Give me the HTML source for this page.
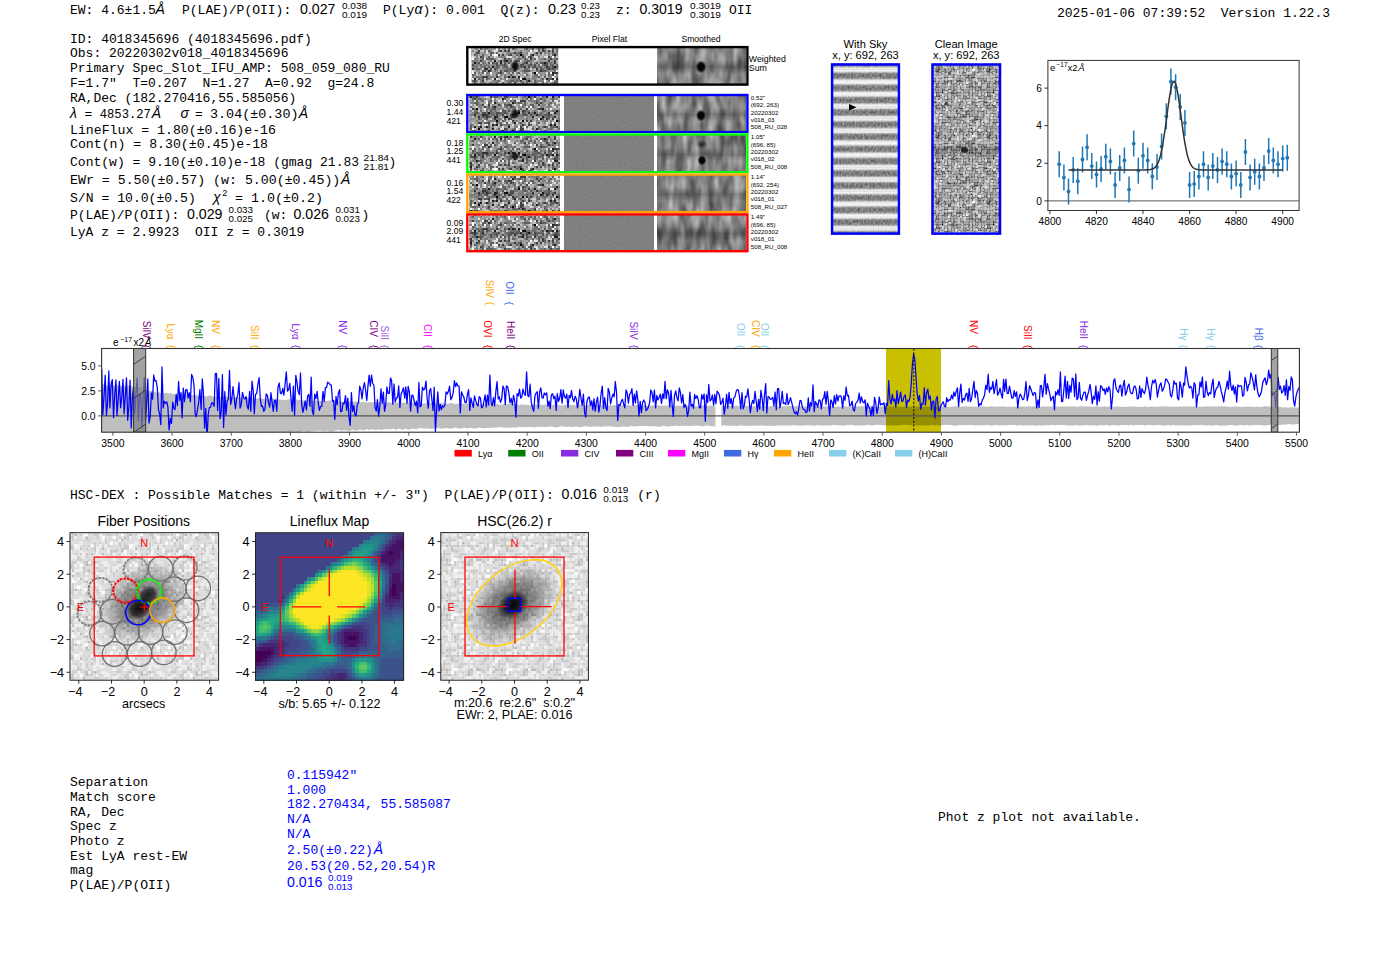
<!DOCTYPE html>
<html><head><meta charset="utf-8"><style>html,body{margin:0;padding:0;background:#fff;width:1400px;height:953px;overflow:hidden}svg{display:block}text{white-space:pre}</style></head>
<body><svg width="1400" height="953" viewBox="0 0 1400 953">
<defs><pattern id="pspec" width="90" height="38" patternUnits="userSpaceOnUse"><path d="M74 2h2v2h-2zM70 16h2v2h-2zM84 34h2v2h-2z" fill="#000000"/><path d="M58 0h2v2h-2zM62 0h2v2h-2zM68 0h2v2h-2zM6 2h2v2h-2zM12 2h2v2h-2zM16 2h2v2h-2zM24 2h2v2h-2zM44 2h2v2h-2zM72 2h2v2h-2zM78 4h2v2h-2zM14 8h2v2h-2zM16 8h2v2h-2zM26 8h2v2h-2zM72 8h2v2h-2zM20 14h2v2h-2zM14 16h2v2h-2zM82 16h2v2h-2zM44 22h2v2h-2zM56 22h2v2h-2zM4 24h2v2h-2zM24 24h2v2h-2zM50 24h2v2h-2zM14 28h2v2h-2zM42 28h2v2h-2zM38 32h2v2h-2zM12 34h2v2h-2z" fill="#202020"/><path d="M32 0h2v2h-2zM34 0h2v2h-2zM36 0h2v2h-2zM46 0h2v2h-2zM64 0h2v2h-2zM24 4h2v2h-2zM32 4h2v2h-2zM70 4h2v2h-2zM14 6h2v2h-2zM64 6h2v2h-2zM72 6h2v2h-2zM84 8h2v2h-2zM2 10h2v2h-2zM18 10h2v2h-2zM20 10h2v2h-2zM2 12h2v2h-2zM8 12h2v2h-2zM12 12h2v2h-2zM20 12h2v2h-2zM28 12h2v2h-2zM50 12h2v2h-2zM54 12h2v2h-2zM58 12h2v2h-2zM0 14h2v2h-2zM26 14h2v2h-2zM64 14h2v2h-2zM70 14h2v2h-2zM86 14h2v2h-2zM20 16h2v2h-2zM48 16h2v2h-2zM52 16h2v2h-2zM60 16h2v2h-2zM8 18h2v2h-2zM30 18h2v2h-2zM72 18h2v2h-2zM80 18h2v2h-2zM10 20h2v2h-2zM54 20h2v2h-2zM80 20h2v2h-2zM8 22h2v2h-2zM14 22h2v2h-2zM20 22h2v2h-2zM30 22h2v2h-2zM50 22h2v2h-2zM54 22h2v2h-2zM66 22h2v2h-2zM14 24h2v2h-2zM76 24h2v2h-2zM6 28h2v2h-2zM74 28h2v2h-2zM8 30h2v2h-2zM22 30h2v2h-2zM34 30h2v2h-2zM36 30h2v2h-2zM86 30h2v2h-2zM0 32h2v2h-2zM14 34h2v2h-2zM16 34h2v2h-2zM50 34h2v2h-2zM12 36h2v2h-2z" fill="#404040"/><path d="M4 0h2v2h-2zM26 0h2v2h-2zM54 0h2v2h-2zM88 0h2v2h-2zM2 2h2v2h-2zM8 2h2v2h-2zM10 2h2v2h-2zM28 2h2v2h-2zM32 2h2v2h-2zM36 2h2v2h-2zM68 2h2v2h-2zM8 4h2v2h-2zM16 4h2v2h-2zM20 4h2v2h-2zM22 4h2v2h-2zM48 4h2v2h-2zM60 4h2v2h-2zM62 4h2v2h-2zM66 4h2v2h-2zM76 4h2v2h-2zM84 4h2v2h-2zM2 6h2v2h-2zM16 6h2v2h-2zM24 6h2v2h-2zM40 6h2v2h-2zM46 6h2v2h-2zM52 6h2v2h-2zM58 6h2v2h-2zM76 6h2v2h-2zM84 6h2v2h-2zM0 8h2v2h-2zM28 8h2v2h-2zM30 8h2v2h-2zM40 8h2v2h-2zM50 8h2v2h-2zM54 8h2v2h-2zM58 8h2v2h-2zM68 8h2v2h-2zM70 8h2v2h-2zM76 8h2v2h-2zM12 10h2v2h-2zM30 10h2v2h-2zM58 10h2v2h-2zM62 10h2v2h-2zM76 10h2v2h-2zM82 10h2v2h-2zM88 10h2v2h-2zM4 12h2v2h-2zM16 12h2v2h-2zM38 12h2v2h-2zM48 12h2v2h-2zM88 12h2v2h-2zM12 14h2v2h-2zM28 14h2v2h-2zM40 14h2v2h-2zM42 14h2v2h-2zM46 14h2v2h-2zM68 14h2v2h-2zM12 16h2v2h-2zM24 16h2v2h-2zM32 16h2v2h-2zM40 16h2v2h-2zM58 16h2v2h-2zM66 16h2v2h-2zM72 16h2v2h-2zM80 16h2v2h-2zM32 18h2v2h-2zM38 18h2v2h-2zM78 18h2v2h-2zM4 20h2v2h-2zM16 20h2v2h-2zM18 20h2v2h-2zM32 20h2v2h-2zM36 20h2v2h-2zM38 20h2v2h-2zM40 20h2v2h-2zM42 20h2v2h-2zM58 20h2v2h-2zM68 20h2v2h-2zM74 20h2v2h-2zM84 20h2v2h-2zM60 22h2v2h-2zM64 22h2v2h-2zM68 22h2v2h-2zM76 22h2v2h-2zM78 22h2v2h-2zM0 24h2v2h-2zM2 24h2v2h-2zM6 24h2v2h-2zM28 24h2v2h-2zM38 24h2v2h-2zM42 24h2v2h-2zM46 24h2v2h-2zM54 24h2v2h-2zM58 24h2v2h-2zM74 24h2v2h-2zM86 24h2v2h-2zM4 26h2v2h-2zM6 26h2v2h-2zM22 26h2v2h-2zM46 26h2v2h-2zM54 26h2v2h-2zM70 26h2v2h-2zM72 26h2v2h-2zM80 26h2v2h-2zM84 26h2v2h-2zM12 28h2v2h-2zM64 28h2v2h-2zM78 28h2v2h-2zM84 28h2v2h-2zM0 30h2v2h-2zM12 30h2v2h-2zM40 30h2v2h-2zM44 30h2v2h-2zM2 32h2v2h-2zM4 32h2v2h-2zM32 32h2v2h-2zM34 32h2v2h-2zM40 32h2v2h-2zM50 32h2v2h-2zM54 32h2v2h-2zM56 32h2v2h-2zM64 32h2v2h-2zM74 32h2v2h-2zM76 32h2v2h-2zM78 32h2v2h-2zM8 34h2v2h-2zM18 34h2v2h-2zM24 34h2v2h-2zM32 34h2v2h-2zM48 34h2v2h-2zM62 34h2v2h-2zM68 34h2v2h-2zM82 34h2v2h-2zM8 36h2v2h-2zM22 36h2v2h-2zM46 36h2v2h-2zM60 36h2v2h-2zM76 36h2v2h-2zM84 36h2v2h-2zM86 36h2v2h-2z" fill="#606060"/><path d="M8 0h2v2h-2zM10 0h2v2h-2zM16 0h2v2h-2zM22 0h2v2h-2zM28 0h2v2h-2zM30 0h2v2h-2zM38 0h2v2h-2zM40 0h2v2h-2zM42 0h2v2h-2zM48 0h2v2h-2zM56 0h2v2h-2zM60 0h2v2h-2zM74 0h2v2h-2zM82 0h2v2h-2zM84 0h2v2h-2zM86 0h2v2h-2zM0 2h2v2h-2zM18 2h2v2h-2zM20 2h2v2h-2zM30 2h2v2h-2zM38 2h2v2h-2zM50 2h2v2h-2zM54 2h2v2h-2zM60 2h2v2h-2zM62 2h2v2h-2zM64 2h2v2h-2zM66 2h2v2h-2zM76 2h2v2h-2zM78 2h2v2h-2zM82 2h2v2h-2zM84 2h2v2h-2zM0 4h2v2h-2zM2 4h2v2h-2zM14 4h2v2h-2zM26 4h2v2h-2zM30 4h2v2h-2zM42 4h2v2h-2zM44 4h2v2h-2zM46 4h2v2h-2zM56 4h2v2h-2zM58 4h2v2h-2zM64 4h2v2h-2zM68 4h2v2h-2zM80 4h2v2h-2zM86 4h2v2h-2zM88 4h2v2h-2zM6 6h2v2h-2zM12 6h2v2h-2zM18 6h2v2h-2zM30 6h2v2h-2zM32 6h2v2h-2zM34 6h2v2h-2zM44 6h2v2h-2zM60 6h2v2h-2zM86 6h2v2h-2zM6 8h2v2h-2zM22 8h2v2h-2zM24 8h2v2h-2zM32 8h2v2h-2zM42 8h2v2h-2zM46 8h2v2h-2zM78 8h2v2h-2zM80 8h2v2h-2zM88 8h2v2h-2zM4 10h2v2h-2zM16 10h2v2h-2zM26 10h2v2h-2zM34 10h2v2h-2zM36 10h2v2h-2zM48 10h2v2h-2zM54 10h2v2h-2zM64 10h2v2h-2zM74 10h2v2h-2zM22 12h2v2h-2zM34 12h2v2h-2zM40 12h2v2h-2zM56 12h2v2h-2zM70 12h2v2h-2zM78 12h2v2h-2zM4 14h2v2h-2zM8 14h2v2h-2zM14 14h2v2h-2zM16 14h2v2h-2zM18 14h2v2h-2zM34 14h2v2h-2zM56 14h2v2h-2zM58 14h2v2h-2zM60 14h2v2h-2zM62 14h2v2h-2zM66 14h2v2h-2zM76 14h2v2h-2zM84 14h2v2h-2zM8 16h2v2h-2zM16 16h2v2h-2zM26 16h2v2h-2zM68 16h2v2h-2zM86 16h2v2h-2zM10 18h2v2h-2zM14 18h2v2h-2zM18 18h2v2h-2zM20 18h2v2h-2zM26 18h2v2h-2zM48 18h2v2h-2zM50 18h2v2h-2zM52 18h2v2h-2zM54 18h2v2h-2zM64 18h2v2h-2zM68 18h2v2h-2zM74 18h2v2h-2zM82 18h2v2h-2zM88 18h2v2h-2zM0 20h2v2h-2zM2 20h2v2h-2zM8 20h2v2h-2zM12 20h2v2h-2zM14 20h2v2h-2zM24 20h2v2h-2zM26 20h2v2h-2zM30 20h2v2h-2zM44 20h2v2h-2zM56 20h2v2h-2zM60 20h2v2h-2zM66 20h2v2h-2zM70 20h2v2h-2zM76 20h2v2h-2zM82 20h2v2h-2zM22 22h2v2h-2zM24 22h2v2h-2zM26 22h2v2h-2zM32 22h2v2h-2zM40 22h2v2h-2zM48 22h2v2h-2zM52 22h2v2h-2zM58 22h2v2h-2zM74 22h2v2h-2zM80 22h2v2h-2zM10 24h2v2h-2zM26 24h2v2h-2zM32 24h2v2h-2zM34 24h2v2h-2zM44 24h2v2h-2zM72 24h2v2h-2zM80 24h2v2h-2zM2 26h2v2h-2zM10 26h2v2h-2zM12 26h2v2h-2zM16 26h2v2h-2zM20 26h2v2h-2zM30 26h2v2h-2zM50 26h2v2h-2zM52 26h2v2h-2zM66 26h2v2h-2zM78 26h2v2h-2zM88 26h2v2h-2zM0 28h2v2h-2zM8 28h2v2h-2zM16 28h2v2h-2zM18 28h2v2h-2zM34 28h2v2h-2zM38 28h2v2h-2zM46 28h2v2h-2zM48 28h2v2h-2zM54 28h2v2h-2zM56 28h2v2h-2zM70 28h2v2h-2zM72 28h2v2h-2zM82 28h2v2h-2zM2 30h2v2h-2zM6 30h2v2h-2zM10 30h2v2h-2zM14 30h2v2h-2zM18 30h2v2h-2zM20 30h2v2h-2zM26 30h2v2h-2zM28 30h2v2h-2zM46 30h2v2h-2zM56 30h2v2h-2zM58 30h2v2h-2zM60 30h2v2h-2zM74 30h2v2h-2zM76 30h2v2h-2zM6 32h2v2h-2zM14 32h2v2h-2zM44 32h2v2h-2zM58 32h2v2h-2zM60 32h2v2h-2zM62 32h2v2h-2zM72 32h2v2h-2zM86 32h2v2h-2zM88 32h2v2h-2zM20 34h2v2h-2zM28 34h2v2h-2zM36 34h2v2h-2zM38 34h2v2h-2zM46 34h2v2h-2zM52 34h2v2h-2zM58 34h2v2h-2zM66 34h2v2h-2zM74 34h2v2h-2zM88 34h2v2h-2zM0 36h2v2h-2zM4 36h2v2h-2zM10 36h2v2h-2zM16 36h2v2h-2zM24 36h2v2h-2zM30 36h2v2h-2zM36 36h2v2h-2zM38 36h2v2h-2zM50 36h2v2h-2zM54 36h2v2h-2z" fill="#808080"/><path d="M0 0h2v2h-2zM14 0h2v2h-2zM24 0h2v2h-2zM44 0h2v2h-2zM50 0h2v2h-2zM72 0h2v2h-2zM76 0h2v2h-2zM78 0h2v2h-2zM40 2h2v2h-2zM52 2h2v2h-2zM58 2h2v2h-2zM80 2h2v2h-2zM86 2h2v2h-2zM6 4h2v2h-2zM18 4h2v2h-2zM36 4h2v2h-2zM54 4h2v2h-2zM72 4h2v2h-2zM74 4h2v2h-2zM10 6h2v2h-2zM22 6h2v2h-2zM26 6h2v2h-2zM38 6h2v2h-2zM42 6h2v2h-2zM54 6h2v2h-2zM56 6h2v2h-2zM66 6h2v2h-2zM70 6h2v2h-2zM74 6h2v2h-2zM78 6h2v2h-2zM80 6h2v2h-2zM82 6h2v2h-2zM2 8h2v2h-2zM4 8h2v2h-2zM10 8h2v2h-2zM20 8h2v2h-2zM36 8h2v2h-2zM38 8h2v2h-2zM44 8h2v2h-2zM62 8h2v2h-2zM64 8h2v2h-2zM86 8h2v2h-2zM0 10h2v2h-2zM14 10h2v2h-2zM24 10h2v2h-2zM32 10h2v2h-2zM38 10h2v2h-2zM40 10h2v2h-2zM42 10h2v2h-2zM44 10h2v2h-2zM52 10h2v2h-2zM66 10h2v2h-2zM78 10h2v2h-2zM80 10h2v2h-2zM86 10h2v2h-2zM0 12h2v2h-2zM6 12h2v2h-2zM10 12h2v2h-2zM18 12h2v2h-2zM26 12h2v2h-2zM52 12h2v2h-2zM64 12h2v2h-2zM66 12h2v2h-2zM68 12h2v2h-2zM72 12h2v2h-2zM74 12h2v2h-2zM76 12h2v2h-2zM82 12h2v2h-2zM6 14h2v2h-2zM10 14h2v2h-2zM24 14h2v2h-2zM30 14h2v2h-2zM32 14h2v2h-2zM38 14h2v2h-2zM52 14h2v2h-2zM72 14h2v2h-2zM74 14h2v2h-2zM88 14h2v2h-2zM0 16h2v2h-2zM4 16h2v2h-2zM28 16h2v2h-2zM30 16h2v2h-2zM34 16h2v2h-2zM36 16h2v2h-2zM50 16h2v2h-2zM54 16h2v2h-2zM56 16h2v2h-2zM62 16h2v2h-2zM64 16h2v2h-2zM74 16h2v2h-2zM76 16h2v2h-2zM84 16h2v2h-2zM88 16h2v2h-2zM2 18h2v2h-2zM36 18h2v2h-2zM40 18h2v2h-2zM42 18h2v2h-2zM62 18h2v2h-2zM70 18h2v2h-2zM6 20h2v2h-2zM28 20h2v2h-2zM46 20h2v2h-2zM52 20h2v2h-2zM64 20h2v2h-2zM72 20h2v2h-2zM88 20h2v2h-2zM0 22h2v2h-2zM2 22h2v2h-2zM4 22h2v2h-2zM6 22h2v2h-2zM10 22h2v2h-2zM12 22h2v2h-2zM28 22h2v2h-2zM34 22h2v2h-2zM38 22h2v2h-2zM72 22h2v2h-2zM82 22h2v2h-2zM88 22h2v2h-2zM8 24h2v2h-2zM12 24h2v2h-2zM18 24h2v2h-2zM20 24h2v2h-2zM22 24h2v2h-2zM56 24h2v2h-2zM60 24h2v2h-2zM62 24h2v2h-2zM64 24h2v2h-2zM66 24h2v2h-2zM68 24h2v2h-2zM84 24h2v2h-2zM18 26h2v2h-2zM24 26h2v2h-2zM26 26h2v2h-2zM28 26h2v2h-2zM32 26h2v2h-2zM34 26h2v2h-2zM36 26h2v2h-2zM38 26h2v2h-2zM42 26h2v2h-2zM44 26h2v2h-2zM48 26h2v2h-2zM56 26h2v2h-2zM60 26h2v2h-2zM62 26h2v2h-2zM64 26h2v2h-2zM68 26h2v2h-2zM74 26h2v2h-2zM76 26h2v2h-2zM82 26h2v2h-2zM4 28h2v2h-2zM10 28h2v2h-2zM20 28h2v2h-2zM22 28h2v2h-2zM24 28h2v2h-2zM26 28h2v2h-2zM30 28h2v2h-2zM32 28h2v2h-2zM44 28h2v2h-2zM52 28h2v2h-2zM68 28h2v2h-2zM86 28h2v2h-2zM88 28h2v2h-2zM4 30h2v2h-2zM16 30h2v2h-2zM24 30h2v2h-2zM30 30h2v2h-2zM52 30h2v2h-2zM54 30h2v2h-2zM66 30h2v2h-2zM68 30h2v2h-2zM78 30h2v2h-2zM82 30h2v2h-2zM8 32h2v2h-2zM10 32h2v2h-2zM12 32h2v2h-2zM18 32h2v2h-2zM26 32h2v2h-2zM28 32h2v2h-2zM36 32h2v2h-2zM46 32h2v2h-2zM52 32h2v2h-2zM70 32h2v2h-2zM80 32h2v2h-2zM0 34h2v2h-2zM2 34h2v2h-2zM4 34h2v2h-2zM30 34h2v2h-2zM42 34h2v2h-2zM44 34h2v2h-2zM56 34h2v2h-2zM72 34h2v2h-2zM76 34h2v2h-2zM2 36h2v2h-2zM28 36h2v2h-2zM42 36h2v2h-2zM44 36h2v2h-2zM52 36h2v2h-2zM56 36h2v2h-2zM58 36h2v2h-2zM62 36h2v2h-2zM66 36h2v2h-2zM70 36h2v2h-2zM72 36h2v2h-2zM78 36h2v2h-2zM82 36h2v2h-2z" fill="#9f9f9f"/><path d="M2 0h2v2h-2zM6 0h2v2h-2zM18 0h2v2h-2zM20 0h2v2h-2zM52 0h2v2h-2zM66 0h2v2h-2zM70 0h2v2h-2zM80 0h2v2h-2zM4 2h2v2h-2zM26 2h2v2h-2zM34 2h2v2h-2zM48 2h2v2h-2zM88 2h2v2h-2zM12 4h2v2h-2zM28 4h2v2h-2zM34 4h2v2h-2zM38 4h2v2h-2zM40 4h2v2h-2zM50 4h2v2h-2zM82 4h2v2h-2zM0 6h2v2h-2zM4 6h2v2h-2zM8 6h2v2h-2zM20 6h2v2h-2zM28 6h2v2h-2zM36 6h2v2h-2zM48 6h2v2h-2zM50 6h2v2h-2zM62 6h2v2h-2zM68 6h2v2h-2zM88 6h2v2h-2zM18 8h2v2h-2zM34 8h2v2h-2zM56 8h2v2h-2zM66 8h2v2h-2zM74 8h2v2h-2zM6 10h2v2h-2zM22 10h2v2h-2zM28 10h2v2h-2zM50 10h2v2h-2zM56 10h2v2h-2zM60 10h2v2h-2zM68 10h2v2h-2zM70 10h2v2h-2zM72 10h2v2h-2zM84 10h2v2h-2zM14 12h2v2h-2zM24 12h2v2h-2zM30 12h2v2h-2zM32 12h2v2h-2zM42 12h2v2h-2zM60 12h2v2h-2zM62 12h2v2h-2zM2 14h2v2h-2zM22 14h2v2h-2zM44 14h2v2h-2zM48 14h2v2h-2zM50 14h2v2h-2zM54 14h2v2h-2zM80 14h2v2h-2zM82 14h2v2h-2zM2 16h2v2h-2zM6 16h2v2h-2zM10 16h2v2h-2zM22 16h2v2h-2zM38 16h2v2h-2zM0 18h2v2h-2zM16 18h2v2h-2zM24 18h2v2h-2zM28 18h2v2h-2zM34 18h2v2h-2zM46 18h2v2h-2zM66 18h2v2h-2zM20 20h2v2h-2zM50 20h2v2h-2zM62 20h2v2h-2zM78 20h2v2h-2zM16 22h2v2h-2zM18 22h2v2h-2zM36 22h2v2h-2zM42 22h2v2h-2zM46 22h2v2h-2zM62 22h2v2h-2zM84 22h2v2h-2zM86 22h2v2h-2zM16 24h2v2h-2zM36 24h2v2h-2zM48 24h2v2h-2zM52 24h2v2h-2zM70 24h2v2h-2zM78 24h2v2h-2zM82 24h2v2h-2zM88 24h2v2h-2zM8 26h2v2h-2zM14 26h2v2h-2zM40 26h2v2h-2zM86 26h2v2h-2zM2 28h2v2h-2zM36 28h2v2h-2zM40 28h2v2h-2zM60 28h2v2h-2zM62 28h2v2h-2zM76 28h2v2h-2zM80 28h2v2h-2zM38 30h2v2h-2zM48 30h2v2h-2zM50 30h2v2h-2zM64 30h2v2h-2zM70 30h2v2h-2zM72 30h2v2h-2zM88 30h2v2h-2zM20 32h2v2h-2zM24 32h2v2h-2zM42 32h2v2h-2zM48 32h2v2h-2zM66 32h2v2h-2zM68 32h2v2h-2zM82 32h2v2h-2zM84 32h2v2h-2zM26 34h2v2h-2zM60 34h2v2h-2zM70 34h2v2h-2zM78 34h2v2h-2zM6 36h2v2h-2zM18 36h2v2h-2zM26 36h2v2h-2zM32 36h2v2h-2zM34 36h2v2h-2zM40 36h2v2h-2zM64 36h2v2h-2zM68 36h2v2h-2zM80 36h2v2h-2z" fill="#bfbfbf"/><path d="M22 2h2v2h-2zM42 2h2v2h-2zM46 2h2v2h-2zM56 2h2v2h-2zM52 4h2v2h-2zM48 8h2v2h-2zM60 8h2v2h-2zM8 10h2v2h-2zM10 10h2v2h-2zM36 12h2v2h-2zM44 12h2v2h-2zM46 12h2v2h-2zM84 12h2v2h-2zM86 12h2v2h-2zM36 14h2v2h-2zM78 14h2v2h-2zM18 16h2v2h-2zM42 16h2v2h-2zM78 16h2v2h-2zM4 18h2v2h-2zM6 18h2v2h-2zM22 18h2v2h-2zM44 18h2v2h-2zM56 18h2v2h-2zM58 18h2v2h-2zM60 18h2v2h-2zM76 18h2v2h-2zM84 18h2v2h-2zM86 18h2v2h-2zM34 20h2v2h-2zM48 20h2v2h-2zM86 20h2v2h-2zM70 22h2v2h-2zM30 24h2v2h-2zM40 24h2v2h-2zM28 28h2v2h-2zM50 28h2v2h-2zM58 28h2v2h-2zM66 28h2v2h-2zM42 30h2v2h-2zM62 30h2v2h-2zM84 30h2v2h-2zM30 32h2v2h-2zM6 34h2v2h-2zM54 34h2v2h-2zM64 34h2v2h-2zM80 34h2v2h-2zM14 36h2v2h-2zM20 36h2v2h-2zM48 36h2v2h-2zM74 36h2v2h-2zM88 36h2v2h-2z" fill="#dfdfdf"/><path d="M12 0h2v2h-2zM14 2h2v2h-2zM70 2h2v2h-2zM4 4h2v2h-2zM10 4h2v2h-2zM8 8h2v2h-2zM12 8h2v2h-2zM52 8h2v2h-2zM82 8h2v2h-2zM46 10h2v2h-2zM80 12h2v2h-2zM44 16h2v2h-2zM46 16h2v2h-2zM12 18h2v2h-2zM22 20h2v2h-2zM0 26h2v2h-2zM58 26h2v2h-2zM32 30h2v2h-2zM80 30h2v2h-2zM16 32h2v2h-2zM22 32h2v2h-2zM10 34h2v2h-2zM22 34h2v2h-2zM34 34h2v2h-2zM40 34h2v2h-2zM86 34h2v2h-2z" fill="#ffffff"/></pattern><pattern id="pspec2" width="90" height="38" patternUnits="userSpaceOnUse"><path d="M56 2h2v2h-2zM16 6h2v2h-2zM46 6h2v2h-2zM72 6h2v2h-2zM28 14h2v2h-2zM62 16h2v2h-2zM78 20h2v2h-2zM26 32h2v2h-2zM68 36h2v2h-2z" fill="#000000"/><path d="M2 2h2v2h-2zM44 2h2v2h-2zM54 2h2v2h-2zM0 4h2v2h-2zM64 8h2v2h-2zM10 10h2v2h-2zM14 10h2v2h-2zM42 10h2v2h-2zM46 10h2v2h-2zM24 12h2v2h-2zM30 12h2v2h-2zM36 12h2v2h-2zM58 12h2v2h-2zM42 14h2v2h-2zM86 14h2v2h-2zM52 16h2v2h-2zM72 18h2v2h-2zM6 20h2v2h-2zM12 20h2v2h-2zM20 20h2v2h-2zM52 22h2v2h-2zM44 26h2v2h-2zM62 26h2v2h-2zM44 30h2v2h-2zM2 32h2v2h-2zM16 34h2v2h-2zM14 36h2v2h-2zM38 36h2v2h-2zM84 36h2v2h-2z" fill="#202020"/><path d="M24 0h2v2h-2zM32 0h2v2h-2zM34 0h2v2h-2zM86 0h2v2h-2zM14 2h2v2h-2zM28 2h2v2h-2zM36 2h2v2h-2zM46 2h2v2h-2zM82 2h2v2h-2zM6 4h2v2h-2zM12 4h2v2h-2zM44 4h2v2h-2zM58 4h2v2h-2zM62 6h2v2h-2zM76 6h2v2h-2zM80 6h2v2h-2zM28 8h2v2h-2zM30 8h2v2h-2zM38 8h2v2h-2zM50 10h2v2h-2zM72 10h2v2h-2zM78 10h2v2h-2zM4 12h2v2h-2zM16 12h2v2h-2zM70 12h2v2h-2zM54 14h2v2h-2zM70 14h2v2h-2zM72 14h2v2h-2zM38 16h2v2h-2zM70 16h2v2h-2zM68 18h2v2h-2zM84 18h2v2h-2zM18 20h2v2h-2zM26 20h2v2h-2zM40 20h2v2h-2zM54 20h2v2h-2zM56 20h2v2h-2zM84 20h2v2h-2zM0 22h2v2h-2zM24 22h2v2h-2zM64 24h2v2h-2zM70 24h2v2h-2zM72 24h2v2h-2zM74 24h2v2h-2zM0 26h2v2h-2zM86 26h2v2h-2zM32 28h2v2h-2zM38 28h2v2h-2zM48 28h2v2h-2zM58 28h2v2h-2zM60 28h2v2h-2zM88 28h2v2h-2zM34 30h2v2h-2zM60 30h2v2h-2zM0 32h2v2h-2zM22 32h2v2h-2zM76 32h2v2h-2zM88 32h2v2h-2zM68 34h2v2h-2zM72 34h2v2h-2zM8 36h2v2h-2zM78 36h2v2h-2z" fill="#404040"/><path d="M8 0h2v2h-2zM36 0h2v2h-2zM46 0h2v2h-2zM52 0h2v2h-2zM60 0h2v2h-2zM62 0h2v2h-2zM74 0h2v2h-2zM80 0h2v2h-2zM8 2h2v2h-2zM32 2h2v2h-2zM38 2h2v2h-2zM60 2h2v2h-2zM62 2h2v2h-2zM2 4h2v2h-2zM28 4h2v2h-2zM36 4h2v2h-2zM54 4h2v2h-2zM60 4h2v2h-2zM18 6h2v2h-2zM52 6h2v2h-2zM14 8h2v2h-2zM34 8h2v2h-2zM36 8h2v2h-2zM46 8h2v2h-2zM50 8h2v2h-2zM56 8h2v2h-2zM70 8h2v2h-2zM78 8h2v2h-2zM88 8h2v2h-2zM20 10h2v2h-2zM38 10h2v2h-2zM44 10h2v2h-2zM58 10h2v2h-2zM80 10h2v2h-2zM2 12h2v2h-2zM6 12h2v2h-2zM10 12h2v2h-2zM12 12h2v2h-2zM14 12h2v2h-2zM20 12h2v2h-2zM28 12h2v2h-2zM38 12h2v2h-2zM76 12h2v2h-2zM88 12h2v2h-2zM10 14h2v2h-2zM18 14h2v2h-2zM20 14h2v2h-2zM48 14h2v2h-2zM56 14h2v2h-2zM64 14h2v2h-2zM82 14h2v2h-2zM88 14h2v2h-2zM4 16h2v2h-2zM22 16h2v2h-2zM24 16h2v2h-2zM50 16h2v2h-2zM56 16h2v2h-2zM60 16h2v2h-2zM64 16h2v2h-2zM72 16h2v2h-2zM4 18h2v2h-2zM38 18h2v2h-2zM62 18h2v2h-2zM64 18h2v2h-2zM74 18h2v2h-2zM2 20h2v2h-2zM22 20h2v2h-2zM24 20h2v2h-2zM44 20h2v2h-2zM46 20h2v2h-2zM66 20h2v2h-2zM74 20h2v2h-2zM80 20h2v2h-2zM12 22h2v2h-2zM22 22h2v2h-2zM28 22h2v2h-2zM30 22h2v2h-2zM54 22h2v2h-2zM76 22h2v2h-2zM80 22h2v2h-2zM4 24h2v2h-2zM12 24h2v2h-2zM26 24h2v2h-2zM32 24h2v2h-2zM40 24h2v2h-2zM60 24h2v2h-2zM86 24h2v2h-2zM10 26h2v2h-2zM24 26h2v2h-2zM26 26h2v2h-2zM38 26h2v2h-2zM64 26h2v2h-2zM68 26h2v2h-2zM70 26h2v2h-2zM74 26h2v2h-2zM8 28h2v2h-2zM26 28h2v2h-2zM54 28h2v2h-2zM56 28h2v2h-2zM74 28h2v2h-2zM80 28h2v2h-2zM82 28h2v2h-2zM20 30h2v2h-2zM38 30h2v2h-2zM42 30h2v2h-2zM56 30h2v2h-2zM62 30h2v2h-2zM72 30h2v2h-2zM78 30h2v2h-2zM82 30h2v2h-2zM42 32h2v2h-2zM44 32h2v2h-2zM64 32h2v2h-2zM70 32h2v2h-2zM40 34h2v2h-2zM52 34h2v2h-2zM54 34h2v2h-2zM58 34h2v2h-2zM74 34h2v2h-2zM26 36h2v2h-2zM32 36h2v2h-2zM34 36h2v2h-2zM46 36h2v2h-2zM48 36h2v2h-2zM54 36h2v2h-2zM64 36h2v2h-2zM72 36h2v2h-2z" fill="#606060"/><path d="M0 0h2v2h-2zM4 0h2v2h-2zM6 0h2v2h-2zM10 0h2v2h-2zM38 0h2v2h-2zM42 0h2v2h-2zM64 0h2v2h-2zM66 0h2v2h-2zM72 0h2v2h-2zM76 0h2v2h-2zM88 0h2v2h-2zM4 2h2v2h-2zM6 2h2v2h-2zM12 2h2v2h-2zM34 2h2v2h-2zM40 2h2v2h-2zM8 4h2v2h-2zM18 4h2v2h-2zM30 4h2v2h-2zM34 4h2v2h-2zM42 4h2v2h-2zM46 4h2v2h-2zM48 4h2v2h-2zM50 4h2v2h-2zM76 4h2v2h-2zM82 4h2v2h-2zM2 6h2v2h-2zM4 6h2v2h-2zM6 6h2v2h-2zM10 6h2v2h-2zM26 6h2v2h-2zM32 6h2v2h-2zM38 6h2v2h-2zM40 6h2v2h-2zM42 6h2v2h-2zM44 6h2v2h-2zM48 6h2v2h-2zM54 6h2v2h-2zM64 6h2v2h-2zM66 6h2v2h-2zM86 6h2v2h-2zM4 8h2v2h-2zM10 8h2v2h-2zM18 8h2v2h-2zM48 8h2v2h-2zM62 8h2v2h-2zM68 8h2v2h-2zM86 8h2v2h-2zM8 10h2v2h-2zM12 10h2v2h-2zM22 10h2v2h-2zM30 10h2v2h-2zM52 10h2v2h-2zM54 10h2v2h-2zM56 10h2v2h-2zM64 10h2v2h-2zM70 10h2v2h-2zM74 10h2v2h-2zM86 10h2v2h-2zM18 12h2v2h-2zM34 12h2v2h-2zM42 12h2v2h-2zM64 12h2v2h-2zM66 12h2v2h-2zM82 12h2v2h-2zM0 14h2v2h-2zM6 14h2v2h-2zM8 14h2v2h-2zM12 14h2v2h-2zM38 14h2v2h-2zM62 14h2v2h-2zM0 16h2v2h-2zM6 16h2v2h-2zM16 16h2v2h-2zM20 16h2v2h-2zM26 16h2v2h-2zM28 16h2v2h-2zM32 16h2v2h-2zM36 16h2v2h-2zM46 16h2v2h-2zM54 16h2v2h-2zM68 16h2v2h-2zM84 16h2v2h-2zM6 18h2v2h-2zM10 18h2v2h-2zM18 18h2v2h-2zM24 18h2v2h-2zM30 18h2v2h-2zM36 18h2v2h-2zM48 18h2v2h-2zM56 18h2v2h-2zM58 18h2v2h-2zM66 18h2v2h-2zM70 18h2v2h-2zM80 18h2v2h-2zM82 18h2v2h-2zM4 20h2v2h-2zM14 20h2v2h-2zM28 20h2v2h-2zM42 20h2v2h-2zM48 20h2v2h-2zM50 20h2v2h-2zM58 20h2v2h-2zM60 20h2v2h-2zM62 20h2v2h-2zM64 20h2v2h-2zM72 20h2v2h-2zM76 20h2v2h-2zM82 20h2v2h-2zM2 22h2v2h-2zM4 22h2v2h-2zM10 22h2v2h-2zM14 22h2v2h-2zM16 22h2v2h-2zM26 22h2v2h-2zM32 22h2v2h-2zM34 22h2v2h-2zM40 22h2v2h-2zM44 22h2v2h-2zM72 22h2v2h-2zM86 22h2v2h-2zM88 22h2v2h-2zM2 24h2v2h-2zM18 24h2v2h-2zM22 24h2v2h-2zM30 24h2v2h-2zM38 24h2v2h-2zM44 24h2v2h-2zM52 24h2v2h-2zM56 24h2v2h-2zM62 24h2v2h-2zM78 24h2v2h-2zM80 24h2v2h-2zM82 24h2v2h-2zM84 24h2v2h-2zM88 24h2v2h-2zM2 26h2v2h-2zM8 26h2v2h-2zM14 26h2v2h-2zM20 26h2v2h-2zM22 26h2v2h-2zM28 26h2v2h-2zM40 26h2v2h-2zM46 26h2v2h-2zM54 26h2v2h-2zM58 26h2v2h-2zM66 26h2v2h-2zM84 26h2v2h-2zM88 26h2v2h-2zM2 28h2v2h-2zM4 28h2v2h-2zM14 28h2v2h-2zM18 28h2v2h-2zM28 28h2v2h-2zM30 28h2v2h-2zM42 28h2v2h-2zM50 28h2v2h-2zM72 28h2v2h-2zM0 30h2v2h-2zM2 30h2v2h-2zM6 30h2v2h-2zM8 30h2v2h-2zM10 30h2v2h-2zM16 30h2v2h-2zM28 30h2v2h-2zM30 30h2v2h-2zM36 30h2v2h-2zM46 30h2v2h-2zM50 30h2v2h-2zM54 30h2v2h-2zM64 30h2v2h-2zM68 30h2v2h-2zM84 30h2v2h-2zM24 32h2v2h-2zM30 32h2v2h-2zM36 32h2v2h-2zM38 32h2v2h-2zM40 32h2v2h-2zM48 32h2v2h-2zM52 32h2v2h-2zM58 32h2v2h-2zM62 32h2v2h-2zM86 32h2v2h-2zM2 34h2v2h-2zM4 34h2v2h-2zM12 34h2v2h-2zM14 34h2v2h-2zM18 34h2v2h-2zM24 34h2v2h-2zM26 34h2v2h-2zM30 34h2v2h-2zM36 34h2v2h-2zM44 34h2v2h-2zM64 34h2v2h-2zM76 34h2v2h-2zM78 34h2v2h-2zM84 34h2v2h-2zM0 36h2v2h-2zM16 36h2v2h-2zM24 36h2v2h-2zM36 36h2v2h-2zM40 36h2v2h-2zM42 36h2v2h-2zM50 36h2v2h-2zM52 36h2v2h-2zM56 36h2v2h-2zM66 36h2v2h-2zM74 36h2v2h-2zM82 36h2v2h-2z" fill="#808080"/><path d="M2 0h2v2h-2zM14 0h2v2h-2zM18 0h2v2h-2zM20 0h2v2h-2zM22 0h2v2h-2zM28 0h2v2h-2zM30 0h2v2h-2zM40 0h2v2h-2zM44 0h2v2h-2zM48 0h2v2h-2zM50 0h2v2h-2zM56 0h2v2h-2zM68 0h2v2h-2zM70 0h2v2h-2zM82 0h2v2h-2zM84 0h2v2h-2zM10 2h2v2h-2zM18 2h2v2h-2zM24 2h2v2h-2zM26 2h2v2h-2zM30 2h2v2h-2zM48 2h2v2h-2zM52 2h2v2h-2zM58 2h2v2h-2zM68 2h2v2h-2zM70 2h2v2h-2zM72 2h2v2h-2zM76 2h2v2h-2zM78 2h2v2h-2zM80 2h2v2h-2zM88 2h2v2h-2zM16 4h2v2h-2zM20 4h2v2h-2zM22 4h2v2h-2zM24 4h2v2h-2zM62 4h2v2h-2zM68 4h2v2h-2zM70 4h2v2h-2zM72 4h2v2h-2zM74 4h2v2h-2zM78 4h2v2h-2zM80 4h2v2h-2zM86 4h2v2h-2zM0 6h2v2h-2zM12 6h2v2h-2zM20 6h2v2h-2zM22 6h2v2h-2zM24 6h2v2h-2zM28 6h2v2h-2zM30 6h2v2h-2zM36 6h2v2h-2zM68 6h2v2h-2zM78 6h2v2h-2zM82 6h2v2h-2zM88 6h2v2h-2zM2 8h2v2h-2zM20 8h2v2h-2zM24 8h2v2h-2zM26 8h2v2h-2zM32 8h2v2h-2zM72 8h2v2h-2zM74 8h2v2h-2zM2 10h2v2h-2zM4 10h2v2h-2zM18 10h2v2h-2zM26 10h2v2h-2zM60 10h2v2h-2zM66 10h2v2h-2zM0 12h2v2h-2zM22 12h2v2h-2zM26 12h2v2h-2zM40 12h2v2h-2zM48 12h2v2h-2zM50 12h2v2h-2zM54 12h2v2h-2zM56 12h2v2h-2zM72 12h2v2h-2zM84 12h2v2h-2zM2 14h2v2h-2zM16 14h2v2h-2zM26 14h2v2h-2zM30 14h2v2h-2zM32 14h2v2h-2zM36 14h2v2h-2zM40 14h2v2h-2zM46 14h2v2h-2zM58 14h2v2h-2zM60 14h2v2h-2zM84 14h2v2h-2zM2 16h2v2h-2zM8 16h2v2h-2zM10 16h2v2h-2zM12 16h2v2h-2zM14 16h2v2h-2zM30 16h2v2h-2zM34 16h2v2h-2zM40 16h2v2h-2zM44 16h2v2h-2zM48 16h2v2h-2zM74 16h2v2h-2zM76 16h2v2h-2zM78 16h2v2h-2zM86 16h2v2h-2zM14 18h2v2h-2zM26 18h2v2h-2zM40 18h2v2h-2zM42 18h2v2h-2zM52 18h2v2h-2zM54 18h2v2h-2zM60 18h2v2h-2zM76 18h2v2h-2zM78 18h2v2h-2zM88 18h2v2h-2zM16 20h2v2h-2zM30 20h2v2h-2zM32 20h2v2h-2zM52 20h2v2h-2zM70 20h2v2h-2zM86 20h2v2h-2zM88 20h2v2h-2zM6 22h2v2h-2zM8 22h2v2h-2zM20 22h2v2h-2zM36 22h2v2h-2zM38 22h2v2h-2zM48 22h2v2h-2zM56 22h2v2h-2zM58 22h2v2h-2zM62 22h2v2h-2zM70 22h2v2h-2zM74 22h2v2h-2zM82 22h2v2h-2zM6 24h2v2h-2zM8 24h2v2h-2zM20 24h2v2h-2zM28 24h2v2h-2zM46 24h2v2h-2zM4 26h2v2h-2zM6 26h2v2h-2zM12 26h2v2h-2zM30 26h2v2h-2zM32 26h2v2h-2zM34 26h2v2h-2zM48 26h2v2h-2zM50 26h2v2h-2zM52 26h2v2h-2zM56 26h2v2h-2zM72 26h2v2h-2zM76 26h2v2h-2zM80 26h2v2h-2zM82 26h2v2h-2zM0 28h2v2h-2zM10 28h2v2h-2zM16 28h2v2h-2zM22 28h2v2h-2zM44 28h2v2h-2zM46 28h2v2h-2zM62 28h2v2h-2zM66 28h2v2h-2zM68 28h2v2h-2zM76 28h2v2h-2zM78 28h2v2h-2zM84 28h2v2h-2zM86 28h2v2h-2zM4 30h2v2h-2zM22 30h2v2h-2zM32 30h2v2h-2zM40 30h2v2h-2zM48 30h2v2h-2zM58 30h2v2h-2zM70 30h2v2h-2zM74 30h2v2h-2zM86 30h2v2h-2zM4 32h2v2h-2zM8 32h2v2h-2zM12 32h2v2h-2zM14 32h2v2h-2zM18 32h2v2h-2zM46 32h2v2h-2zM50 32h2v2h-2zM56 32h2v2h-2zM60 32h2v2h-2zM68 32h2v2h-2zM74 32h2v2h-2zM80 32h2v2h-2zM84 32h2v2h-2zM6 34h2v2h-2zM8 34h2v2h-2zM10 34h2v2h-2zM20 34h2v2h-2zM42 34h2v2h-2zM46 34h2v2h-2zM56 34h2v2h-2zM60 34h2v2h-2zM62 34h2v2h-2zM66 34h2v2h-2zM82 34h2v2h-2zM86 34h2v2h-2zM2 36h2v2h-2zM6 36h2v2h-2zM18 36h2v2h-2zM22 36h2v2h-2zM28 36h2v2h-2zM44 36h2v2h-2zM76 36h2v2h-2zM80 36h2v2h-2zM86 36h2v2h-2z" fill="#9f9f9f"/><path d="M12 0h2v2h-2zM16 0h2v2h-2zM26 0h2v2h-2zM58 0h2v2h-2zM78 0h2v2h-2zM0 2h2v2h-2zM16 2h2v2h-2zM20 2h2v2h-2zM42 2h2v2h-2zM64 2h2v2h-2zM66 2h2v2h-2zM84 2h2v2h-2zM86 2h2v2h-2zM4 4h2v2h-2zM10 4h2v2h-2zM26 4h2v2h-2zM32 4h2v2h-2zM38 4h2v2h-2zM56 4h2v2h-2zM64 4h2v2h-2zM66 4h2v2h-2zM84 4h2v2h-2zM8 6h2v2h-2zM50 6h2v2h-2zM56 6h2v2h-2zM58 6h2v2h-2zM70 6h2v2h-2zM74 6h2v2h-2zM84 6h2v2h-2zM0 8h2v2h-2zM8 8h2v2h-2zM16 8h2v2h-2zM22 8h2v2h-2zM40 8h2v2h-2zM42 8h2v2h-2zM52 8h2v2h-2zM60 8h2v2h-2zM80 8h2v2h-2zM0 10h2v2h-2zM16 10h2v2h-2zM24 10h2v2h-2zM32 10h2v2h-2zM40 10h2v2h-2zM48 10h2v2h-2zM68 10h2v2h-2zM76 10h2v2h-2zM82 10h2v2h-2zM84 10h2v2h-2zM88 10h2v2h-2zM8 12h2v2h-2zM32 12h2v2h-2zM44 12h2v2h-2zM46 12h2v2h-2zM60 12h2v2h-2zM62 12h2v2h-2zM78 12h2v2h-2zM86 12h2v2h-2zM4 14h2v2h-2zM14 14h2v2h-2zM24 14h2v2h-2zM44 14h2v2h-2zM68 14h2v2h-2zM76 14h2v2h-2zM80 14h2v2h-2zM18 16h2v2h-2zM42 16h2v2h-2zM58 16h2v2h-2zM82 16h2v2h-2zM0 18h2v2h-2zM2 18h2v2h-2zM8 18h2v2h-2zM12 18h2v2h-2zM16 18h2v2h-2zM22 18h2v2h-2zM32 18h2v2h-2zM34 18h2v2h-2zM44 18h2v2h-2zM46 18h2v2h-2zM50 18h2v2h-2zM0 20h2v2h-2zM8 20h2v2h-2zM10 20h2v2h-2zM34 20h2v2h-2zM38 20h2v2h-2zM68 20h2v2h-2zM18 22h2v2h-2zM46 22h2v2h-2zM50 22h2v2h-2zM64 22h2v2h-2zM66 22h2v2h-2zM68 22h2v2h-2zM78 22h2v2h-2zM0 24h2v2h-2zM10 24h2v2h-2zM34 24h2v2h-2zM42 24h2v2h-2zM50 24h2v2h-2zM58 24h2v2h-2zM76 24h2v2h-2zM18 26h2v2h-2zM60 26h2v2h-2zM78 26h2v2h-2zM6 28h2v2h-2zM24 28h2v2h-2zM36 28h2v2h-2zM40 28h2v2h-2zM12 30h2v2h-2zM18 30h2v2h-2zM24 30h2v2h-2zM52 30h2v2h-2zM66 30h2v2h-2zM88 30h2v2h-2zM6 32h2v2h-2zM16 32h2v2h-2zM28 32h2v2h-2zM32 32h2v2h-2zM54 32h2v2h-2zM72 32h2v2h-2zM82 32h2v2h-2zM0 34h2v2h-2zM32 34h2v2h-2zM38 34h2v2h-2zM48 34h2v2h-2zM70 34h2v2h-2zM80 34h2v2h-2zM4 36h2v2h-2zM20 36h2v2h-2zM30 36h2v2h-2zM58 36h2v2h-2zM60 36h2v2h-2zM88 36h2v2h-2z" fill="#bfbfbf"/><path d="M54 0h2v2h-2zM22 2h2v2h-2zM50 2h2v2h-2zM74 2h2v2h-2zM14 4h2v2h-2zM40 4h2v2h-2zM52 4h2v2h-2zM14 6h2v2h-2zM60 6h2v2h-2zM6 8h2v2h-2zM44 8h2v2h-2zM54 8h2v2h-2zM58 8h2v2h-2zM66 8h2v2h-2zM76 8h2v2h-2zM82 8h2v2h-2zM84 8h2v2h-2zM6 10h2v2h-2zM28 10h2v2h-2zM34 10h2v2h-2zM36 10h2v2h-2zM62 10h2v2h-2zM52 12h2v2h-2zM80 12h2v2h-2zM34 14h2v2h-2zM50 14h2v2h-2zM52 14h2v2h-2zM74 14h2v2h-2zM78 14h2v2h-2zM66 16h2v2h-2zM80 16h2v2h-2zM88 16h2v2h-2zM86 18h2v2h-2zM36 20h2v2h-2zM14 24h2v2h-2zM16 24h2v2h-2zM24 24h2v2h-2zM36 24h2v2h-2zM48 24h2v2h-2zM66 24h2v2h-2zM68 24h2v2h-2zM16 26h2v2h-2zM12 28h2v2h-2zM20 28h2v2h-2zM34 28h2v2h-2zM52 28h2v2h-2zM64 28h2v2h-2zM14 30h2v2h-2zM26 30h2v2h-2zM76 30h2v2h-2zM20 32h2v2h-2zM66 32h2v2h-2zM78 32h2v2h-2zM22 34h2v2h-2zM28 34h2v2h-2zM34 34h2v2h-2zM88 34h2v2h-2zM62 36h2v2h-2zM70 36h2v2h-2z" fill="#dfdfdf"/><path d="M88 4h2v2h-2zM34 6h2v2h-2zM12 8h2v2h-2zM68 12h2v2h-2zM74 12h2v2h-2zM22 14h2v2h-2zM66 14h2v2h-2zM20 18h2v2h-2zM28 18h2v2h-2zM42 22h2v2h-2zM60 22h2v2h-2zM84 22h2v2h-2zM54 24h2v2h-2zM36 26h2v2h-2zM42 26h2v2h-2zM70 28h2v2h-2zM80 30h2v2h-2zM10 32h2v2h-2zM34 32h2v2h-2zM50 34h2v2h-2zM10 36h2v2h-2zM12 36h2v2h-2z" fill="#ffffff"/></pattern><filter id="nsmooth" x="0" y="0" width="1" height="1" color-interpolation-filters="sRGB"><feTurbulence type="fractalNoise" baseFrequency="0.12 0.04" numOctaves="2" seed="5" result="t"/><feColorMatrix in="t" type="matrix" values="0.75 0 0 0 0.14500000000000002 0.75 0 0 0 0.14500000000000002 0.75 0 0 0 0.14500000000000002 0 0 0 0 1"/></filter><filter id="nsmooth2" x="0" y="0" width="1" height="1" color-interpolation-filters="sRGB"><feTurbulence type="fractalNoise" baseFrequency="0.12 0.04" numOctaves="2" seed="8" result="t"/><feColorMatrix in="t" type="matrix" values="0.75 0 0 0 0.135 0.75 0 0 0 0.135 0.75 0 0 0 0.135 0 0 0 0 1"/></filter><filter id="nsmooth3" x="0" y="0" width="1" height="1" color-interpolation-filters="sRGB"><feTurbulence type="fractalNoise" baseFrequency="0.12 0.04" numOctaves="2" seed="9" result="t"/><feColorMatrix in="t" type="matrix" values="0.75 0 0 0 0.135 0.75 0 0 0 0.135 0.75 0 0 0 0.135 0 0 0 0 1"/></filter><filter id="nsmooth4" x="0" y="0" width="1" height="1" color-interpolation-filters="sRGB"><feTurbulence type="fractalNoise" baseFrequency="0.12 0.04" numOctaves="2" seed="12" result="t"/><feColorMatrix in="t" type="matrix" values="0.75 0 0 0 0.135 0.75 0 0 0 0.135 0.75 0 0 0 0.135 0 0 0 0 1"/></filter><filter id="nsmooth5" x="0" y="0" width="1" height="1" color-interpolation-filters="sRGB"><feTurbulence type="fractalNoise" baseFrequency="0.12 0.04" numOctaves="2" seed="21" result="t"/><feColorMatrix in="t" type="matrix" values="0.75 0 0 0 0.135 0.75 0 0 0 0.135 0.75 0 0 0 0.135 0 0 0 0 1"/></filter><filter id="nflat" x="0" y="0" width="1" height="1" color-interpolation-filters="sRGB"><feTurbulence type="fractalNoise" baseFrequency="0.9" numOctaves="1" seed="2" result="t"/><feColorMatrix in="t" type="matrix" values="0.15 0 0 0 0.425 0.15 0 0 0 0.425 0.15 0 0 0 0.425 0 0 0 0 1"/></filter><linearGradient id="hband" x1="0" y1="0" x2="0" y2="1"><stop offset="0" stop-color="#000" stop-opacity="0"/><stop offset="0.5" stop-color="#000" stop-opacity="0.25"/><stop offset="1" stop-color="#000" stop-opacity="0"/></linearGradient><radialGradient id="blob"><stop offset="0" stop-color="#000" stop-opacity="1"/><stop offset="0.55" stop-color="#000" stop-opacity="0.95"/><stop offset="1" stop-color="#000" stop-opacity="0"/></radialGradient><radialGradient id="blob2"><stop offset="0" stop-color="#000" stop-opacity="0.75"/><stop offset="1" stop-color="#000" stop-opacity="0"/></radialGradient><clipPath id="skyclip"><rect x="830.9" y="63.3" width="69.20000000000005" height="171.5"/></clipPath><linearGradient id="stripe" x1="0" y1="0" x2="0" y2="1"><stop offset="0" stop-color="#fff" stop-opacity="1"/><stop offset="0.14" stop-color="#fff" stop-opacity="0.8"/><stop offset="0.32" stop-color="#fff" stop-opacity="0.1"/><stop offset="0.5" stop-color="#fff" stop-opacity="0"/><stop offset="0.68" stop-color="#fff" stop-opacity="0.1"/><stop offset="0.86" stop-color="#fff" stop-opacity="0.8"/><stop offset="1" stop-color="#fff" stop-opacity="1"/></linearGradient><filter id="nsky" x="0" y="0" width="1" height="1" color-interpolation-filters="sRGB"><feTurbulence type="fractalNoise" baseFrequency="0.6 0.35" numOctaves="1" seed="4" result="t"/><feColorMatrix in="t" type="matrix" values="0.5 0 0 0 0.21999999999999997 0.5 0 0 0 0.21999999999999997 0.5 0 0 0 0.21999999999999997 0 0 0 0 1"/></filter><pattern id="pclean" width="51" height="66" patternUnits="userSpaceOnUse"><path d="M24 25.5h1.5v1.5h-1.5z" fill="#000000"/><path d="M3 19.5h1.5v1.5h-1.5zM16.5 36h1.5v1.5h-1.5zM45 49.5h1.5v1.5h-1.5zM1.5 61.5h1.5v1.5h-1.5z" fill="#202020"/><path d="M9 0h1.5v1.5h-1.5zM13.5 1.5h1.5v1.5h-1.5zM19.5 3h1.5v1.5h-1.5zM21 3h1.5v1.5h-1.5zM36 3h1.5v1.5h-1.5zM48 3h1.5v1.5h-1.5zM18 4.5h1.5v1.5h-1.5zM19.5 4.5h1.5v1.5h-1.5zM31.5 4.5h1.5v1.5h-1.5zM27 6h1.5v1.5h-1.5zM42 9h1.5v1.5h-1.5zM3 10.5h1.5v1.5h-1.5zM4.5 10.5h1.5v1.5h-1.5zM27 10.5h1.5v1.5h-1.5zM34.5 10.5h1.5v1.5h-1.5zM40.5 13.5h1.5v1.5h-1.5zM42 13.5h1.5v1.5h-1.5zM27 15h1.5v1.5h-1.5zM19.5 16.5h1.5v1.5h-1.5zM0 19.5h1.5v1.5h-1.5zM24 22.5h1.5v1.5h-1.5zM24 24h1.5v1.5h-1.5zM37.5 25.5h1.5v1.5h-1.5zM36 27h1.5v1.5h-1.5zM18 28.5h1.5v1.5h-1.5zM21 30h1.5v1.5h-1.5zM28.5 33h1.5v1.5h-1.5zM15 36h1.5v1.5h-1.5zM40.5 37.5h1.5v1.5h-1.5zM18 39h1.5v1.5h-1.5zM30 39h1.5v1.5h-1.5zM25.5 40.5h1.5v1.5h-1.5zM21 42h1.5v1.5h-1.5zM42 42h1.5v1.5h-1.5zM43.5 42h1.5v1.5h-1.5zM37.5 45h1.5v1.5h-1.5zM22.5 46.5h1.5v1.5h-1.5zM48 48h1.5v1.5h-1.5zM0 49.5h1.5v1.5h-1.5zM28.5 49.5h1.5v1.5h-1.5zM46.5 49.5h1.5v1.5h-1.5zM30 51h1.5v1.5h-1.5zM31.5 51h1.5v1.5h-1.5zM36 51h1.5v1.5h-1.5zM42 51h1.5v1.5h-1.5zM6 52.5h1.5v1.5h-1.5zM7.5 52.5h1.5v1.5h-1.5zM4.5 54h1.5v1.5h-1.5zM39 57h1.5v1.5h-1.5zM37.5 63h1.5v1.5h-1.5z" fill="#404040"/><path d="M1.5 0h1.5v1.5h-1.5zM3 0h1.5v1.5h-1.5zM12 0h1.5v1.5h-1.5zM19.5 0h1.5v1.5h-1.5zM21 0h1.5v1.5h-1.5zM31.5 0h1.5v1.5h-1.5zM40.5 0h1.5v1.5h-1.5zM3 1.5h1.5v1.5h-1.5zM9 1.5h1.5v1.5h-1.5zM10.5 1.5h1.5v1.5h-1.5zM19.5 1.5h1.5v1.5h-1.5zM45 1.5h1.5v1.5h-1.5zM10.5 3h1.5v1.5h-1.5zM18 3h1.5v1.5h-1.5zM25.5 3h1.5v1.5h-1.5zM27 3h1.5v1.5h-1.5zM34.5 3h1.5v1.5h-1.5zM27 4.5h1.5v1.5h-1.5zM45 4.5h1.5v1.5h-1.5zM4.5 6h1.5v1.5h-1.5zM7.5 6h1.5v1.5h-1.5zM9 6h1.5v1.5h-1.5zM30 6h1.5v1.5h-1.5zM31.5 6h1.5v1.5h-1.5zM45 6h1.5v1.5h-1.5zM46.5 6h1.5v1.5h-1.5zM4.5 7.5h1.5v1.5h-1.5zM30 7.5h1.5v1.5h-1.5zM31.5 7.5h1.5v1.5h-1.5zM0 9h1.5v1.5h-1.5zM34.5 9h1.5v1.5h-1.5zM45 9h1.5v1.5h-1.5zM49.5 9h1.5v1.5h-1.5zM1.5 10.5h1.5v1.5h-1.5zM25.5 10.5h1.5v1.5h-1.5zM28.5 10.5h1.5v1.5h-1.5zM48 10.5h1.5v1.5h-1.5zM49.5 10.5h1.5v1.5h-1.5zM1.5 12h1.5v1.5h-1.5zM16.5 12h1.5v1.5h-1.5zM22.5 12h1.5v1.5h-1.5zM12 13.5h1.5v1.5h-1.5zM15 13.5h1.5v1.5h-1.5zM25.5 13.5h1.5v1.5h-1.5zM33 13.5h1.5v1.5h-1.5zM37.5 13.5h1.5v1.5h-1.5zM39 13.5h1.5v1.5h-1.5zM6 15h1.5v1.5h-1.5zM15 15h1.5v1.5h-1.5zM16.5 15h1.5v1.5h-1.5zM25.5 15h1.5v1.5h-1.5zM28.5 15h1.5v1.5h-1.5zM30 15h1.5v1.5h-1.5zM33 15h1.5v1.5h-1.5zM39 15h1.5v1.5h-1.5zM40.5 15h1.5v1.5h-1.5zM42 15h1.5v1.5h-1.5zM43.5 15h1.5v1.5h-1.5zM6 16.5h1.5v1.5h-1.5zM7.5 16.5h1.5v1.5h-1.5zM24 16.5h1.5v1.5h-1.5zM25.5 16.5h1.5v1.5h-1.5zM28.5 16.5h1.5v1.5h-1.5zM33 16.5h1.5v1.5h-1.5zM36 16.5h1.5v1.5h-1.5zM6 18h1.5v1.5h-1.5zM12 18h1.5v1.5h-1.5zM18 18h1.5v1.5h-1.5zM34.5 18h1.5v1.5h-1.5zM40.5 18h1.5v1.5h-1.5zM1.5 19.5h1.5v1.5h-1.5zM10.5 19.5h1.5v1.5h-1.5zM18 19.5h1.5v1.5h-1.5zM31.5 19.5h1.5v1.5h-1.5zM37.5 19.5h1.5v1.5h-1.5zM0 21h1.5v1.5h-1.5zM6 21h1.5v1.5h-1.5zM9 21h1.5v1.5h-1.5zM10.5 21h1.5v1.5h-1.5zM18 21h1.5v1.5h-1.5zM19.5 21h1.5v1.5h-1.5zM6 22.5h1.5v1.5h-1.5zM10.5 22.5h1.5v1.5h-1.5zM13.5 22.5h1.5v1.5h-1.5zM15 22.5h1.5v1.5h-1.5zM30 22.5h1.5v1.5h-1.5zM31.5 22.5h1.5v1.5h-1.5zM7.5 24h1.5v1.5h-1.5zM9 24h1.5v1.5h-1.5zM27 24h1.5v1.5h-1.5zM34.5 24h1.5v1.5h-1.5zM36 24h1.5v1.5h-1.5zM45 24h1.5v1.5h-1.5zM0 25.5h1.5v1.5h-1.5zM3 25.5h1.5v1.5h-1.5zM6 25.5h1.5v1.5h-1.5zM18 25.5h1.5v1.5h-1.5zM19.5 25.5h1.5v1.5h-1.5zM33 25.5h1.5v1.5h-1.5zM34.5 25.5h1.5v1.5h-1.5zM39 25.5h1.5v1.5h-1.5zM42 25.5h1.5v1.5h-1.5zM0 27h1.5v1.5h-1.5zM3 27h1.5v1.5h-1.5zM7.5 27h1.5v1.5h-1.5zM15 27h1.5v1.5h-1.5zM18 27h1.5v1.5h-1.5zM33 27h1.5v1.5h-1.5zM34.5 27h1.5v1.5h-1.5zM3 28.5h1.5v1.5h-1.5zM12 28.5h1.5v1.5h-1.5zM21 28.5h1.5v1.5h-1.5zM39 28.5h1.5v1.5h-1.5zM45 28.5h1.5v1.5h-1.5zM15 30h1.5v1.5h-1.5zM18 30h1.5v1.5h-1.5zM19.5 30h1.5v1.5h-1.5zM25.5 30h1.5v1.5h-1.5zM46.5 30h1.5v1.5h-1.5zM9 31.5h1.5v1.5h-1.5zM10.5 31.5h1.5v1.5h-1.5zM12 31.5h1.5v1.5h-1.5zM48 31.5h1.5v1.5h-1.5zM49.5 31.5h1.5v1.5h-1.5zM19.5 33h1.5v1.5h-1.5zM27 33h1.5v1.5h-1.5zM30 33h1.5v1.5h-1.5zM46.5 33h1.5v1.5h-1.5zM3 34.5h1.5v1.5h-1.5zM13.5 34.5h1.5v1.5h-1.5zM15 34.5h1.5v1.5h-1.5zM43.5 34.5h1.5v1.5h-1.5zM3 36h1.5v1.5h-1.5zM4.5 36h1.5v1.5h-1.5zM21 36h1.5v1.5h-1.5zM27 36h1.5v1.5h-1.5zM28.5 36h1.5v1.5h-1.5zM33 36h1.5v1.5h-1.5zM48 36h1.5v1.5h-1.5zM3 37.5h1.5v1.5h-1.5zM19.5 37.5h1.5v1.5h-1.5zM22.5 37.5h1.5v1.5h-1.5zM6 39h1.5v1.5h-1.5zM7.5 39h1.5v1.5h-1.5zM19.5 39h1.5v1.5h-1.5zM22.5 39h1.5v1.5h-1.5zM24 39h1.5v1.5h-1.5zM25.5 39h1.5v1.5h-1.5zM31.5 39h1.5v1.5h-1.5zM10.5 40.5h1.5v1.5h-1.5zM18 40.5h1.5v1.5h-1.5zM24 40.5h1.5v1.5h-1.5zM0 42h1.5v1.5h-1.5zM18 42h1.5v1.5h-1.5zM19.5 42h1.5v1.5h-1.5zM40.5 42h1.5v1.5h-1.5zM3 43.5h1.5v1.5h-1.5zM24 43.5h1.5v1.5h-1.5zM34.5 43.5h1.5v1.5h-1.5zM37.5 43.5h1.5v1.5h-1.5zM39 43.5h1.5v1.5h-1.5zM49.5 43.5h1.5v1.5h-1.5zM1.5 45h1.5v1.5h-1.5zM7.5 45h1.5v1.5h-1.5zM12 45h1.5v1.5h-1.5zM13.5 45h1.5v1.5h-1.5zM46.5 45h1.5v1.5h-1.5zM48 45h1.5v1.5h-1.5zM49.5 45h1.5v1.5h-1.5zM0 46.5h1.5v1.5h-1.5zM21 46.5h1.5v1.5h-1.5zM37.5 46.5h1.5v1.5h-1.5zM39 46.5h1.5v1.5h-1.5zM40.5 46.5h1.5v1.5h-1.5zM48 46.5h1.5v1.5h-1.5zM0 48h1.5v1.5h-1.5zM13.5 48h1.5v1.5h-1.5zM42 48h1.5v1.5h-1.5zM45 48h1.5v1.5h-1.5zM49.5 48h1.5v1.5h-1.5zM6 49.5h1.5v1.5h-1.5zM7.5 49.5h1.5v1.5h-1.5zM9 49.5h1.5v1.5h-1.5zM24 49.5h1.5v1.5h-1.5zM30 49.5h1.5v1.5h-1.5zM36 49.5h1.5v1.5h-1.5zM4.5 51h1.5v1.5h-1.5zM7.5 51h1.5v1.5h-1.5zM13.5 51h1.5v1.5h-1.5zM28.5 51h1.5v1.5h-1.5zM37.5 51h1.5v1.5h-1.5zM40.5 51h1.5v1.5h-1.5zM4.5 52.5h1.5v1.5h-1.5zM12 52.5h1.5v1.5h-1.5zM34.5 52.5h1.5v1.5h-1.5zM36 52.5h1.5v1.5h-1.5zM3 54h1.5v1.5h-1.5zM10.5 54h1.5v1.5h-1.5zM43.5 54h1.5v1.5h-1.5zM3 55.5h1.5v1.5h-1.5zM6 55.5h1.5v1.5h-1.5zM10.5 55.5h1.5v1.5h-1.5zM13.5 55.5h1.5v1.5h-1.5zM24 55.5h1.5v1.5h-1.5zM25.5 55.5h1.5v1.5h-1.5zM27 55.5h1.5v1.5h-1.5zM28.5 55.5h1.5v1.5h-1.5zM19.5 57h1.5v1.5h-1.5zM24 57h1.5v1.5h-1.5zM0 58.5h1.5v1.5h-1.5zM1.5 58.5h1.5v1.5h-1.5zM10.5 58.5h1.5v1.5h-1.5zM13.5 58.5h1.5v1.5h-1.5zM28.5 60h1.5v1.5h-1.5zM31.5 60h1.5v1.5h-1.5zM48 60h1.5v1.5h-1.5zM21 61.5h1.5v1.5h-1.5zM25.5 61.5h1.5v1.5h-1.5zM16.5 63h1.5v1.5h-1.5zM21 63h1.5v1.5h-1.5zM31.5 63h1.5v1.5h-1.5zM33 63h1.5v1.5h-1.5zM42 63h1.5v1.5h-1.5zM0 64.5h1.5v1.5h-1.5zM7.5 64.5h1.5v1.5h-1.5zM16.5 64.5h1.5v1.5h-1.5zM18 64.5h1.5v1.5h-1.5zM31.5 64.5h1.5v1.5h-1.5zM34.5 64.5h1.5v1.5h-1.5zM37.5 64.5h1.5v1.5h-1.5zM40.5 64.5h1.5v1.5h-1.5zM42 64.5h1.5v1.5h-1.5zM43.5 64.5h1.5v1.5h-1.5zM49.5 64.5h1.5v1.5h-1.5z" fill="#606060"/><path d="M7.5 0h1.5v1.5h-1.5zM10.5 0h1.5v1.5h-1.5zM18 0h1.5v1.5h-1.5zM22.5 0h1.5v1.5h-1.5zM28.5 0h1.5v1.5h-1.5zM34.5 0h1.5v1.5h-1.5zM45 0h1.5v1.5h-1.5zM46.5 0h1.5v1.5h-1.5zM49.5 0h1.5v1.5h-1.5zM7.5 1.5h1.5v1.5h-1.5zM18 1.5h1.5v1.5h-1.5zM21 1.5h1.5v1.5h-1.5zM22.5 1.5h1.5v1.5h-1.5zM25.5 1.5h1.5v1.5h-1.5zM30 1.5h1.5v1.5h-1.5zM33 1.5h1.5v1.5h-1.5zM34.5 1.5h1.5v1.5h-1.5zM40.5 1.5h1.5v1.5h-1.5zM43.5 1.5h1.5v1.5h-1.5zM48 1.5h1.5v1.5h-1.5zM49.5 1.5h1.5v1.5h-1.5zM0 3h1.5v1.5h-1.5zM9 3h1.5v1.5h-1.5zM13.5 3h1.5v1.5h-1.5zM16.5 3h1.5v1.5h-1.5zM30 3h1.5v1.5h-1.5zM33 3h1.5v1.5h-1.5zM45 3h1.5v1.5h-1.5zM4.5 4.5h1.5v1.5h-1.5zM9 4.5h1.5v1.5h-1.5zM10.5 4.5h1.5v1.5h-1.5zM12 4.5h1.5v1.5h-1.5zM16.5 4.5h1.5v1.5h-1.5zM22.5 4.5h1.5v1.5h-1.5zM24 4.5h1.5v1.5h-1.5zM25.5 4.5h1.5v1.5h-1.5zM33 4.5h1.5v1.5h-1.5zM36 4.5h1.5v1.5h-1.5zM49.5 4.5h1.5v1.5h-1.5zM3 6h1.5v1.5h-1.5zM18 6h1.5v1.5h-1.5zM19.5 6h1.5v1.5h-1.5zM21 6h1.5v1.5h-1.5zM22.5 6h1.5v1.5h-1.5zM40.5 6h1.5v1.5h-1.5zM43.5 6h1.5v1.5h-1.5zM1.5 7.5h1.5v1.5h-1.5zM3 7.5h1.5v1.5h-1.5zM6 7.5h1.5v1.5h-1.5zM19.5 7.5h1.5v1.5h-1.5zM22.5 7.5h1.5v1.5h-1.5zM36 7.5h1.5v1.5h-1.5zM43.5 7.5h1.5v1.5h-1.5zM45 7.5h1.5v1.5h-1.5zM49.5 7.5h1.5v1.5h-1.5zM1.5 9h1.5v1.5h-1.5zM3 9h1.5v1.5h-1.5zM4.5 9h1.5v1.5h-1.5zM18 9h1.5v1.5h-1.5zM25.5 9h1.5v1.5h-1.5zM39 9h1.5v1.5h-1.5zM46.5 9h1.5v1.5h-1.5zM48 9h1.5v1.5h-1.5zM0 10.5h1.5v1.5h-1.5zM9 10.5h1.5v1.5h-1.5zM30 10.5h1.5v1.5h-1.5zM33 10.5h1.5v1.5h-1.5zM46.5 10.5h1.5v1.5h-1.5zM0 12h1.5v1.5h-1.5zM3 12h1.5v1.5h-1.5zM7.5 12h1.5v1.5h-1.5zM9 12h1.5v1.5h-1.5zM10.5 12h1.5v1.5h-1.5zM12 12h1.5v1.5h-1.5zM13.5 12h1.5v1.5h-1.5zM21 12h1.5v1.5h-1.5zM37.5 12h1.5v1.5h-1.5zM40.5 12h1.5v1.5h-1.5zM42 12h1.5v1.5h-1.5zM46.5 12h1.5v1.5h-1.5zM49.5 12h1.5v1.5h-1.5zM0 13.5h1.5v1.5h-1.5zM1.5 13.5h1.5v1.5h-1.5zM9 13.5h1.5v1.5h-1.5zM13.5 13.5h1.5v1.5h-1.5zM16.5 13.5h1.5v1.5h-1.5zM28.5 13.5h1.5v1.5h-1.5zM30 13.5h1.5v1.5h-1.5zM31.5 13.5h1.5v1.5h-1.5zM34.5 13.5h1.5v1.5h-1.5zM46.5 13.5h1.5v1.5h-1.5zM49.5 13.5h1.5v1.5h-1.5zM1.5 15h1.5v1.5h-1.5zM3 15h1.5v1.5h-1.5zM12 15h1.5v1.5h-1.5zM19.5 15h1.5v1.5h-1.5zM21 15h1.5v1.5h-1.5zM31.5 15h1.5v1.5h-1.5zM37.5 15h1.5v1.5h-1.5zM0 16.5h1.5v1.5h-1.5zM1.5 16.5h1.5v1.5h-1.5zM3 16.5h1.5v1.5h-1.5zM12 16.5h1.5v1.5h-1.5zM13.5 16.5h1.5v1.5h-1.5zM15 16.5h1.5v1.5h-1.5zM18 16.5h1.5v1.5h-1.5zM27 16.5h1.5v1.5h-1.5zM37.5 16.5h1.5v1.5h-1.5zM40.5 16.5h1.5v1.5h-1.5zM43.5 16.5h1.5v1.5h-1.5zM0 18h1.5v1.5h-1.5zM1.5 18h1.5v1.5h-1.5zM3 18h1.5v1.5h-1.5zM19.5 18h1.5v1.5h-1.5zM25.5 18h1.5v1.5h-1.5zM27 18h1.5v1.5h-1.5zM33 18h1.5v1.5h-1.5zM37.5 18h1.5v1.5h-1.5zM39 18h1.5v1.5h-1.5zM43.5 18h1.5v1.5h-1.5zM45 18h1.5v1.5h-1.5zM48 18h1.5v1.5h-1.5zM49.5 18h1.5v1.5h-1.5zM6 19.5h1.5v1.5h-1.5zM7.5 19.5h1.5v1.5h-1.5zM9 19.5h1.5v1.5h-1.5zM12 19.5h1.5v1.5h-1.5zM16.5 19.5h1.5v1.5h-1.5zM19.5 19.5h1.5v1.5h-1.5zM34.5 19.5h1.5v1.5h-1.5zM36 19.5h1.5v1.5h-1.5zM42 19.5h1.5v1.5h-1.5zM1.5 21h1.5v1.5h-1.5zM3 21h1.5v1.5h-1.5zM4.5 21h1.5v1.5h-1.5zM12 21h1.5v1.5h-1.5zM16.5 21h1.5v1.5h-1.5zM21 21h1.5v1.5h-1.5zM25.5 21h1.5v1.5h-1.5zM27 21h1.5v1.5h-1.5zM31.5 21h1.5v1.5h-1.5zM34.5 21h1.5v1.5h-1.5zM36 21h1.5v1.5h-1.5zM39 21h1.5v1.5h-1.5zM42 21h1.5v1.5h-1.5zM48 21h1.5v1.5h-1.5zM49.5 21h1.5v1.5h-1.5zM0 22.5h1.5v1.5h-1.5zM3 22.5h1.5v1.5h-1.5zM12 22.5h1.5v1.5h-1.5zM16.5 22.5h1.5v1.5h-1.5zM19.5 22.5h1.5v1.5h-1.5zM25.5 22.5h1.5v1.5h-1.5zM34.5 22.5h1.5v1.5h-1.5zM36 22.5h1.5v1.5h-1.5zM37.5 22.5h1.5v1.5h-1.5zM42 22.5h1.5v1.5h-1.5zM43.5 22.5h1.5v1.5h-1.5zM45 22.5h1.5v1.5h-1.5zM3 24h1.5v1.5h-1.5zM6 24h1.5v1.5h-1.5zM10.5 24h1.5v1.5h-1.5zM12 24h1.5v1.5h-1.5zM13.5 24h1.5v1.5h-1.5zM18 24h1.5v1.5h-1.5zM19.5 24h1.5v1.5h-1.5zM25.5 24h1.5v1.5h-1.5zM28.5 24h1.5v1.5h-1.5zM33 24h1.5v1.5h-1.5zM43.5 24h1.5v1.5h-1.5zM49.5 24h1.5v1.5h-1.5zM9 25.5h1.5v1.5h-1.5zM12 25.5h1.5v1.5h-1.5zM16.5 25.5h1.5v1.5h-1.5zM21 25.5h1.5v1.5h-1.5zM22.5 25.5h1.5v1.5h-1.5zM30 25.5h1.5v1.5h-1.5zM31.5 25.5h1.5v1.5h-1.5zM40.5 25.5h1.5v1.5h-1.5zM45 25.5h1.5v1.5h-1.5zM46.5 25.5h1.5v1.5h-1.5zM48 25.5h1.5v1.5h-1.5zM49.5 25.5h1.5v1.5h-1.5zM4.5 27h1.5v1.5h-1.5zM12 27h1.5v1.5h-1.5zM19.5 27h1.5v1.5h-1.5zM24 27h1.5v1.5h-1.5zM28.5 27h1.5v1.5h-1.5zM31.5 27h1.5v1.5h-1.5zM37.5 27h1.5v1.5h-1.5zM39 27h1.5v1.5h-1.5zM49.5 27h1.5v1.5h-1.5zM0 28.5h1.5v1.5h-1.5zM6 28.5h1.5v1.5h-1.5zM7.5 28.5h1.5v1.5h-1.5zM13.5 28.5h1.5v1.5h-1.5zM19.5 28.5h1.5v1.5h-1.5zM22.5 28.5h1.5v1.5h-1.5zM28.5 28.5h1.5v1.5h-1.5zM33 28.5h1.5v1.5h-1.5zM34.5 28.5h1.5v1.5h-1.5zM37.5 28.5h1.5v1.5h-1.5zM40.5 28.5h1.5v1.5h-1.5zM42 28.5h1.5v1.5h-1.5zM49.5 28.5h1.5v1.5h-1.5zM0 30h1.5v1.5h-1.5zM3 30h1.5v1.5h-1.5zM9 30h1.5v1.5h-1.5zM10.5 30h1.5v1.5h-1.5zM16.5 30h1.5v1.5h-1.5zM28.5 30h1.5v1.5h-1.5zM33 30h1.5v1.5h-1.5zM36 30h1.5v1.5h-1.5zM39 30h1.5v1.5h-1.5zM45 30h1.5v1.5h-1.5zM48 30h1.5v1.5h-1.5zM0 31.5h1.5v1.5h-1.5zM3 31.5h1.5v1.5h-1.5zM13.5 31.5h1.5v1.5h-1.5zM15 31.5h1.5v1.5h-1.5zM16.5 31.5h1.5v1.5h-1.5zM21 31.5h1.5v1.5h-1.5zM28.5 31.5h1.5v1.5h-1.5zM33 31.5h1.5v1.5h-1.5zM36 31.5h1.5v1.5h-1.5zM40.5 31.5h1.5v1.5h-1.5zM43.5 31.5h1.5v1.5h-1.5zM45 31.5h1.5v1.5h-1.5zM46.5 31.5h1.5v1.5h-1.5zM4.5 33h1.5v1.5h-1.5zM6 33h1.5v1.5h-1.5zM15 33h1.5v1.5h-1.5zM21 33h1.5v1.5h-1.5zM25.5 33h1.5v1.5h-1.5zM31.5 33h1.5v1.5h-1.5zM33 33h1.5v1.5h-1.5zM39 33h1.5v1.5h-1.5zM9 34.5h1.5v1.5h-1.5zM10.5 34.5h1.5v1.5h-1.5zM12 34.5h1.5v1.5h-1.5zM16.5 34.5h1.5v1.5h-1.5zM24 34.5h1.5v1.5h-1.5zM30 34.5h1.5v1.5h-1.5zM33 34.5h1.5v1.5h-1.5zM34.5 34.5h1.5v1.5h-1.5zM42 34.5h1.5v1.5h-1.5zM6 36h1.5v1.5h-1.5zM7.5 36h1.5v1.5h-1.5zM13.5 36h1.5v1.5h-1.5zM18 36h1.5v1.5h-1.5zM39 36h1.5v1.5h-1.5zM40.5 36h1.5v1.5h-1.5zM42 36h1.5v1.5h-1.5zM43.5 36h1.5v1.5h-1.5zM0 37.5h1.5v1.5h-1.5zM6 37.5h1.5v1.5h-1.5zM13.5 37.5h1.5v1.5h-1.5zM15 37.5h1.5v1.5h-1.5zM28.5 37.5h1.5v1.5h-1.5zM30 37.5h1.5v1.5h-1.5zM42 37.5h1.5v1.5h-1.5zM48 37.5h1.5v1.5h-1.5zM49.5 37.5h1.5v1.5h-1.5zM1.5 39h1.5v1.5h-1.5zM10.5 39h1.5v1.5h-1.5zM13.5 39h1.5v1.5h-1.5zM15 39h1.5v1.5h-1.5zM16.5 39h1.5v1.5h-1.5zM28.5 39h1.5v1.5h-1.5zM33 39h1.5v1.5h-1.5zM40.5 39h1.5v1.5h-1.5zM46.5 39h1.5v1.5h-1.5zM3 40.5h1.5v1.5h-1.5zM6 40.5h1.5v1.5h-1.5zM7.5 40.5h1.5v1.5h-1.5zM12 40.5h1.5v1.5h-1.5zM16.5 40.5h1.5v1.5h-1.5zM27 40.5h1.5v1.5h-1.5zM31.5 40.5h1.5v1.5h-1.5zM33 40.5h1.5v1.5h-1.5zM39 40.5h1.5v1.5h-1.5zM40.5 40.5h1.5v1.5h-1.5zM46.5 40.5h1.5v1.5h-1.5zM1.5 42h1.5v1.5h-1.5zM4.5 42h1.5v1.5h-1.5zM16.5 42h1.5v1.5h-1.5zM24 42h1.5v1.5h-1.5zM34.5 42h1.5v1.5h-1.5zM36 42h1.5v1.5h-1.5zM37.5 42h1.5v1.5h-1.5zM1.5 43.5h1.5v1.5h-1.5zM4.5 43.5h1.5v1.5h-1.5zM7.5 43.5h1.5v1.5h-1.5zM13.5 43.5h1.5v1.5h-1.5zM25.5 43.5h1.5v1.5h-1.5zM30 43.5h1.5v1.5h-1.5zM31.5 43.5h1.5v1.5h-1.5zM42 43.5h1.5v1.5h-1.5zM43.5 43.5h1.5v1.5h-1.5zM45 43.5h1.5v1.5h-1.5zM48 43.5h1.5v1.5h-1.5zM0 45h1.5v1.5h-1.5zM4.5 45h1.5v1.5h-1.5zM9 45h1.5v1.5h-1.5zM10.5 45h1.5v1.5h-1.5zM16.5 45h1.5v1.5h-1.5zM28.5 45h1.5v1.5h-1.5zM33 45h1.5v1.5h-1.5zM39 45h1.5v1.5h-1.5zM43.5 45h1.5v1.5h-1.5zM4.5 46.5h1.5v1.5h-1.5zM9 46.5h1.5v1.5h-1.5zM13.5 46.5h1.5v1.5h-1.5zM16.5 46.5h1.5v1.5h-1.5zM18 46.5h1.5v1.5h-1.5zM24 46.5h1.5v1.5h-1.5zM25.5 46.5h1.5v1.5h-1.5zM28.5 46.5h1.5v1.5h-1.5zM46.5 46.5h1.5v1.5h-1.5zM3 48h1.5v1.5h-1.5zM7.5 48h1.5v1.5h-1.5zM28.5 48h1.5v1.5h-1.5zM39 48h1.5v1.5h-1.5zM43.5 48h1.5v1.5h-1.5zM46.5 48h1.5v1.5h-1.5zM1.5 49.5h1.5v1.5h-1.5zM3 49.5h1.5v1.5h-1.5zM4.5 49.5h1.5v1.5h-1.5zM12 49.5h1.5v1.5h-1.5zM13.5 49.5h1.5v1.5h-1.5zM21 49.5h1.5v1.5h-1.5zM39 49.5h1.5v1.5h-1.5zM42 49.5h1.5v1.5h-1.5zM43.5 49.5h1.5v1.5h-1.5zM48 49.5h1.5v1.5h-1.5zM0 51h1.5v1.5h-1.5zM6 51h1.5v1.5h-1.5zM10.5 51h1.5v1.5h-1.5zM19.5 51h1.5v1.5h-1.5zM27 51h1.5v1.5h-1.5zM33 51h1.5v1.5h-1.5zM34.5 51h1.5v1.5h-1.5zM43.5 51h1.5v1.5h-1.5zM45 51h1.5v1.5h-1.5zM46.5 51h1.5v1.5h-1.5zM48 51h1.5v1.5h-1.5zM3 52.5h1.5v1.5h-1.5zM9 52.5h1.5v1.5h-1.5zM10.5 52.5h1.5v1.5h-1.5zM19.5 52.5h1.5v1.5h-1.5zM21 52.5h1.5v1.5h-1.5zM24 52.5h1.5v1.5h-1.5zM25.5 52.5h1.5v1.5h-1.5zM30 52.5h1.5v1.5h-1.5zM31.5 52.5h1.5v1.5h-1.5zM37.5 52.5h1.5v1.5h-1.5zM39 52.5h1.5v1.5h-1.5zM40.5 52.5h1.5v1.5h-1.5zM0 54h1.5v1.5h-1.5zM1.5 54h1.5v1.5h-1.5zM12 54h1.5v1.5h-1.5zM19.5 54h1.5v1.5h-1.5zM21 54h1.5v1.5h-1.5zM24 54h1.5v1.5h-1.5zM27 54h1.5v1.5h-1.5zM31.5 54h1.5v1.5h-1.5zM34.5 54h1.5v1.5h-1.5zM39 54h1.5v1.5h-1.5zM42 54h1.5v1.5h-1.5zM45 54h1.5v1.5h-1.5zM4.5 55.5h1.5v1.5h-1.5zM19.5 55.5h1.5v1.5h-1.5zM22.5 55.5h1.5v1.5h-1.5zM30 55.5h1.5v1.5h-1.5zM31.5 55.5h1.5v1.5h-1.5zM37.5 55.5h1.5v1.5h-1.5zM42 55.5h1.5v1.5h-1.5zM45 55.5h1.5v1.5h-1.5zM46.5 55.5h1.5v1.5h-1.5zM48 55.5h1.5v1.5h-1.5zM0 57h1.5v1.5h-1.5zM4.5 57h1.5v1.5h-1.5zM6 57h1.5v1.5h-1.5zM10.5 57h1.5v1.5h-1.5zM15 57h1.5v1.5h-1.5zM18 57h1.5v1.5h-1.5zM25.5 57h1.5v1.5h-1.5zM33 57h1.5v1.5h-1.5zM40.5 57h1.5v1.5h-1.5zM45 57h1.5v1.5h-1.5zM46.5 57h1.5v1.5h-1.5zM15 58.5h1.5v1.5h-1.5zM22.5 58.5h1.5v1.5h-1.5zM25.5 58.5h1.5v1.5h-1.5zM33 58.5h1.5v1.5h-1.5zM34.5 58.5h1.5v1.5h-1.5zM36 58.5h1.5v1.5h-1.5zM39 58.5h1.5v1.5h-1.5zM43.5 58.5h1.5v1.5h-1.5zM48 58.5h1.5v1.5h-1.5zM9 60h1.5v1.5h-1.5zM10.5 60h1.5v1.5h-1.5zM15 60h1.5v1.5h-1.5zM16.5 60h1.5v1.5h-1.5zM18 60h1.5v1.5h-1.5zM21 60h1.5v1.5h-1.5zM22.5 60h1.5v1.5h-1.5zM46.5 60h1.5v1.5h-1.5zM0 61.5h1.5v1.5h-1.5zM3 61.5h1.5v1.5h-1.5zM9 61.5h1.5v1.5h-1.5zM16.5 61.5h1.5v1.5h-1.5zM18 61.5h1.5v1.5h-1.5zM22.5 61.5h1.5v1.5h-1.5zM28.5 61.5h1.5v1.5h-1.5zM36 61.5h1.5v1.5h-1.5zM37.5 61.5h1.5v1.5h-1.5zM40.5 61.5h1.5v1.5h-1.5zM42 61.5h1.5v1.5h-1.5zM3 63h1.5v1.5h-1.5zM6 63h1.5v1.5h-1.5zM15 63h1.5v1.5h-1.5zM27 63h1.5v1.5h-1.5zM30 63h1.5v1.5h-1.5zM36 63h1.5v1.5h-1.5zM40.5 63h1.5v1.5h-1.5zM43.5 63h1.5v1.5h-1.5zM45 63h1.5v1.5h-1.5zM49.5 63h1.5v1.5h-1.5zM1.5 64.5h1.5v1.5h-1.5zM3 64.5h1.5v1.5h-1.5zM4.5 64.5h1.5v1.5h-1.5zM6 64.5h1.5v1.5h-1.5zM9 64.5h1.5v1.5h-1.5zM12 64.5h1.5v1.5h-1.5zM13.5 64.5h1.5v1.5h-1.5zM15 64.5h1.5v1.5h-1.5zM21 64.5h1.5v1.5h-1.5zM22.5 64.5h1.5v1.5h-1.5zM24 64.5h1.5v1.5h-1.5zM28.5 64.5h1.5v1.5h-1.5zM45 64.5h1.5v1.5h-1.5z" fill="#808080"/><path d="M0 0h1.5v1.5h-1.5zM4.5 0h1.5v1.5h-1.5zM13.5 0h1.5v1.5h-1.5zM15 0h1.5v1.5h-1.5zM24 0h1.5v1.5h-1.5zM27 0h1.5v1.5h-1.5zM30 0h1.5v1.5h-1.5zM33 0h1.5v1.5h-1.5zM39 0h1.5v1.5h-1.5zM42 0h1.5v1.5h-1.5zM43.5 0h1.5v1.5h-1.5zM0 1.5h1.5v1.5h-1.5zM12 1.5h1.5v1.5h-1.5zM15 1.5h1.5v1.5h-1.5zM16.5 1.5h1.5v1.5h-1.5zM24 1.5h1.5v1.5h-1.5zM31.5 1.5h1.5v1.5h-1.5zM36 1.5h1.5v1.5h-1.5zM39 1.5h1.5v1.5h-1.5zM42 1.5h1.5v1.5h-1.5zM7.5 3h1.5v1.5h-1.5zM12 3h1.5v1.5h-1.5zM22.5 3h1.5v1.5h-1.5zM24 3h1.5v1.5h-1.5zM28.5 3h1.5v1.5h-1.5zM31.5 3h1.5v1.5h-1.5zM37.5 3h1.5v1.5h-1.5zM39 3h1.5v1.5h-1.5zM40.5 3h1.5v1.5h-1.5zM46.5 3h1.5v1.5h-1.5zM49.5 3h1.5v1.5h-1.5zM0 4.5h1.5v1.5h-1.5zM6 4.5h1.5v1.5h-1.5zM13.5 4.5h1.5v1.5h-1.5zM15 4.5h1.5v1.5h-1.5zM21 4.5h1.5v1.5h-1.5zM28.5 4.5h1.5v1.5h-1.5zM30 4.5h1.5v1.5h-1.5zM34.5 4.5h1.5v1.5h-1.5zM37.5 4.5h1.5v1.5h-1.5zM40.5 4.5h1.5v1.5h-1.5zM48 4.5h1.5v1.5h-1.5zM6 6h1.5v1.5h-1.5zM10.5 6h1.5v1.5h-1.5zM12 6h1.5v1.5h-1.5zM13.5 6h1.5v1.5h-1.5zM25.5 6h1.5v1.5h-1.5zM28.5 6h1.5v1.5h-1.5zM0 7.5h1.5v1.5h-1.5zM13.5 7.5h1.5v1.5h-1.5zM15 7.5h1.5v1.5h-1.5zM16.5 7.5h1.5v1.5h-1.5zM18 7.5h1.5v1.5h-1.5zM24 7.5h1.5v1.5h-1.5zM25.5 7.5h1.5v1.5h-1.5zM33 7.5h1.5v1.5h-1.5zM34.5 7.5h1.5v1.5h-1.5zM37.5 7.5h1.5v1.5h-1.5zM40.5 7.5h1.5v1.5h-1.5zM46.5 7.5h1.5v1.5h-1.5zM48 7.5h1.5v1.5h-1.5zM10.5 9h1.5v1.5h-1.5zM12 9h1.5v1.5h-1.5zM13.5 9h1.5v1.5h-1.5zM19.5 9h1.5v1.5h-1.5zM21 9h1.5v1.5h-1.5zM27 9h1.5v1.5h-1.5zM28.5 9h1.5v1.5h-1.5zM30 9h1.5v1.5h-1.5zM33 9h1.5v1.5h-1.5zM36 9h1.5v1.5h-1.5zM40.5 9h1.5v1.5h-1.5zM6 10.5h1.5v1.5h-1.5zM10.5 10.5h1.5v1.5h-1.5zM13.5 10.5h1.5v1.5h-1.5zM19.5 10.5h1.5v1.5h-1.5zM22.5 10.5h1.5v1.5h-1.5zM24 10.5h1.5v1.5h-1.5zM36 10.5h1.5v1.5h-1.5zM39 10.5h1.5v1.5h-1.5zM40.5 10.5h1.5v1.5h-1.5zM42 10.5h1.5v1.5h-1.5zM43.5 10.5h1.5v1.5h-1.5zM4.5 12h1.5v1.5h-1.5zM15 12h1.5v1.5h-1.5zM19.5 12h1.5v1.5h-1.5zM25.5 12h1.5v1.5h-1.5zM28.5 12h1.5v1.5h-1.5zM34.5 12h1.5v1.5h-1.5zM39 12h1.5v1.5h-1.5zM43.5 12h1.5v1.5h-1.5zM45 12h1.5v1.5h-1.5zM48 12h1.5v1.5h-1.5zM3 13.5h1.5v1.5h-1.5zM10.5 13.5h1.5v1.5h-1.5zM21 13.5h1.5v1.5h-1.5zM24 13.5h1.5v1.5h-1.5zM43.5 13.5h1.5v1.5h-1.5zM45 13.5h1.5v1.5h-1.5zM0 15h1.5v1.5h-1.5zM4.5 15h1.5v1.5h-1.5zM9 15h1.5v1.5h-1.5zM10.5 15h1.5v1.5h-1.5zM13.5 15h1.5v1.5h-1.5zM18 15h1.5v1.5h-1.5zM22.5 15h1.5v1.5h-1.5zM34.5 15h1.5v1.5h-1.5zM45 15h1.5v1.5h-1.5zM46.5 15h1.5v1.5h-1.5zM4.5 16.5h1.5v1.5h-1.5zM16.5 16.5h1.5v1.5h-1.5zM21 16.5h1.5v1.5h-1.5zM22.5 16.5h1.5v1.5h-1.5zM31.5 16.5h1.5v1.5h-1.5zM34.5 16.5h1.5v1.5h-1.5zM42 16.5h1.5v1.5h-1.5zM46.5 16.5h1.5v1.5h-1.5zM7.5 18h1.5v1.5h-1.5zM22.5 18h1.5v1.5h-1.5zM24 18h1.5v1.5h-1.5zM28.5 18h1.5v1.5h-1.5zM31.5 18h1.5v1.5h-1.5zM36 18h1.5v1.5h-1.5zM46.5 18h1.5v1.5h-1.5zM4.5 19.5h1.5v1.5h-1.5zM13.5 19.5h1.5v1.5h-1.5zM21 19.5h1.5v1.5h-1.5zM22.5 19.5h1.5v1.5h-1.5zM24 19.5h1.5v1.5h-1.5zM25.5 19.5h1.5v1.5h-1.5zM27 19.5h1.5v1.5h-1.5zM28.5 19.5h1.5v1.5h-1.5zM30 19.5h1.5v1.5h-1.5zM33 19.5h1.5v1.5h-1.5zM43.5 19.5h1.5v1.5h-1.5zM48 19.5h1.5v1.5h-1.5zM49.5 19.5h1.5v1.5h-1.5zM7.5 21h1.5v1.5h-1.5zM22.5 21h1.5v1.5h-1.5zM24 21h1.5v1.5h-1.5zM28.5 21h1.5v1.5h-1.5zM33 21h1.5v1.5h-1.5zM43.5 21h1.5v1.5h-1.5zM1.5 22.5h1.5v1.5h-1.5zM4.5 22.5h1.5v1.5h-1.5zM7.5 22.5h1.5v1.5h-1.5zM9 22.5h1.5v1.5h-1.5zM18 22.5h1.5v1.5h-1.5zM21 22.5h1.5v1.5h-1.5zM22.5 22.5h1.5v1.5h-1.5zM33 22.5h1.5v1.5h-1.5zM39 22.5h1.5v1.5h-1.5zM46.5 22.5h1.5v1.5h-1.5zM48 22.5h1.5v1.5h-1.5zM49.5 22.5h1.5v1.5h-1.5zM0 24h1.5v1.5h-1.5zM1.5 24h1.5v1.5h-1.5zM15 24h1.5v1.5h-1.5zM16.5 24h1.5v1.5h-1.5zM21 24h1.5v1.5h-1.5zM22.5 24h1.5v1.5h-1.5zM30 24h1.5v1.5h-1.5zM37.5 24h1.5v1.5h-1.5zM42 24h1.5v1.5h-1.5zM46.5 24h1.5v1.5h-1.5zM48 24h1.5v1.5h-1.5zM7.5 25.5h1.5v1.5h-1.5zM13.5 25.5h1.5v1.5h-1.5zM15 25.5h1.5v1.5h-1.5zM28.5 25.5h1.5v1.5h-1.5zM36 25.5h1.5v1.5h-1.5zM6 27h1.5v1.5h-1.5zM10.5 27h1.5v1.5h-1.5zM21 27h1.5v1.5h-1.5zM25.5 27h1.5v1.5h-1.5zM27 27h1.5v1.5h-1.5zM30 27h1.5v1.5h-1.5zM40.5 27h1.5v1.5h-1.5zM42 27h1.5v1.5h-1.5zM43.5 27h1.5v1.5h-1.5zM45 27h1.5v1.5h-1.5zM46.5 27h1.5v1.5h-1.5zM1.5 28.5h1.5v1.5h-1.5zM9 28.5h1.5v1.5h-1.5zM15 28.5h1.5v1.5h-1.5zM25.5 28.5h1.5v1.5h-1.5zM27 28.5h1.5v1.5h-1.5zM36 28.5h1.5v1.5h-1.5zM46.5 28.5h1.5v1.5h-1.5zM48 28.5h1.5v1.5h-1.5zM6 30h1.5v1.5h-1.5zM7.5 30h1.5v1.5h-1.5zM12 30h1.5v1.5h-1.5zM13.5 30h1.5v1.5h-1.5zM22.5 30h1.5v1.5h-1.5zM30 30h1.5v1.5h-1.5zM34.5 30h1.5v1.5h-1.5zM37.5 30h1.5v1.5h-1.5zM40.5 30h1.5v1.5h-1.5zM42 30h1.5v1.5h-1.5zM1.5 31.5h1.5v1.5h-1.5zM4.5 31.5h1.5v1.5h-1.5zM19.5 31.5h1.5v1.5h-1.5zM22.5 31.5h1.5v1.5h-1.5zM24 31.5h1.5v1.5h-1.5zM25.5 31.5h1.5v1.5h-1.5zM30 31.5h1.5v1.5h-1.5zM31.5 31.5h1.5v1.5h-1.5zM34.5 31.5h1.5v1.5h-1.5zM39 31.5h1.5v1.5h-1.5zM42 31.5h1.5v1.5h-1.5zM1.5 33h1.5v1.5h-1.5zM3 33h1.5v1.5h-1.5zM7.5 33h1.5v1.5h-1.5zM13.5 33h1.5v1.5h-1.5zM16.5 33h1.5v1.5h-1.5zM24 33h1.5v1.5h-1.5zM34.5 33h1.5v1.5h-1.5zM36 33h1.5v1.5h-1.5zM42 33h1.5v1.5h-1.5zM43.5 33h1.5v1.5h-1.5zM45 33h1.5v1.5h-1.5zM1.5 34.5h1.5v1.5h-1.5zM4.5 34.5h1.5v1.5h-1.5zM6 34.5h1.5v1.5h-1.5zM18 34.5h1.5v1.5h-1.5zM25.5 34.5h1.5v1.5h-1.5zM27 34.5h1.5v1.5h-1.5zM28.5 34.5h1.5v1.5h-1.5zM39 34.5h1.5v1.5h-1.5zM46.5 34.5h1.5v1.5h-1.5zM48 34.5h1.5v1.5h-1.5zM49.5 34.5h1.5v1.5h-1.5zM1.5 36h1.5v1.5h-1.5zM9 36h1.5v1.5h-1.5zM10.5 36h1.5v1.5h-1.5zM19.5 36h1.5v1.5h-1.5zM24 36h1.5v1.5h-1.5zM34.5 36h1.5v1.5h-1.5zM37.5 36h1.5v1.5h-1.5zM45 36h1.5v1.5h-1.5zM1.5 37.5h1.5v1.5h-1.5zM4.5 37.5h1.5v1.5h-1.5zM12 37.5h1.5v1.5h-1.5zM18 37.5h1.5v1.5h-1.5zM21 37.5h1.5v1.5h-1.5zM27 37.5h1.5v1.5h-1.5zM31.5 37.5h1.5v1.5h-1.5zM33 37.5h1.5v1.5h-1.5zM34.5 37.5h1.5v1.5h-1.5zM37.5 37.5h1.5v1.5h-1.5zM43.5 37.5h1.5v1.5h-1.5zM45 37.5h1.5v1.5h-1.5zM0 39h1.5v1.5h-1.5zM3 39h1.5v1.5h-1.5zM4.5 39h1.5v1.5h-1.5zM21 39h1.5v1.5h-1.5zM34.5 39h1.5v1.5h-1.5zM36 39h1.5v1.5h-1.5zM37.5 39h1.5v1.5h-1.5zM39 39h1.5v1.5h-1.5zM42 39h1.5v1.5h-1.5zM43.5 39h1.5v1.5h-1.5zM45 39h1.5v1.5h-1.5zM0 40.5h1.5v1.5h-1.5zM1.5 40.5h1.5v1.5h-1.5zM4.5 40.5h1.5v1.5h-1.5zM9 40.5h1.5v1.5h-1.5zM13.5 40.5h1.5v1.5h-1.5zM15 40.5h1.5v1.5h-1.5zM19.5 40.5h1.5v1.5h-1.5zM21 40.5h1.5v1.5h-1.5zM22.5 40.5h1.5v1.5h-1.5zM30 40.5h1.5v1.5h-1.5zM36 40.5h1.5v1.5h-1.5zM37.5 40.5h1.5v1.5h-1.5zM42 40.5h1.5v1.5h-1.5zM43.5 40.5h1.5v1.5h-1.5zM48 40.5h1.5v1.5h-1.5zM49.5 40.5h1.5v1.5h-1.5zM3 42h1.5v1.5h-1.5zM9 42h1.5v1.5h-1.5zM10.5 42h1.5v1.5h-1.5zM12 42h1.5v1.5h-1.5zM22.5 42h1.5v1.5h-1.5zM27 42h1.5v1.5h-1.5zM30 42h1.5v1.5h-1.5zM31.5 42h1.5v1.5h-1.5zM33 42h1.5v1.5h-1.5zM39 42h1.5v1.5h-1.5zM46.5 42h1.5v1.5h-1.5zM0 43.5h1.5v1.5h-1.5zM6 43.5h1.5v1.5h-1.5zM9 43.5h1.5v1.5h-1.5zM10.5 43.5h1.5v1.5h-1.5zM15 43.5h1.5v1.5h-1.5zM16.5 43.5h1.5v1.5h-1.5zM18 43.5h1.5v1.5h-1.5zM19.5 43.5h1.5v1.5h-1.5zM21 43.5h1.5v1.5h-1.5zM22.5 43.5h1.5v1.5h-1.5zM27 43.5h1.5v1.5h-1.5zM33 43.5h1.5v1.5h-1.5zM3 45h1.5v1.5h-1.5zM15 45h1.5v1.5h-1.5zM19.5 45h1.5v1.5h-1.5zM22.5 45h1.5v1.5h-1.5zM24 45h1.5v1.5h-1.5zM25.5 45h1.5v1.5h-1.5zM31.5 45h1.5v1.5h-1.5zM36 45h1.5v1.5h-1.5zM40.5 45h1.5v1.5h-1.5zM42 45h1.5v1.5h-1.5zM45 45h1.5v1.5h-1.5zM1.5 46.5h1.5v1.5h-1.5zM3 46.5h1.5v1.5h-1.5zM6 46.5h1.5v1.5h-1.5zM7.5 46.5h1.5v1.5h-1.5zM12 46.5h1.5v1.5h-1.5zM15 46.5h1.5v1.5h-1.5zM27 46.5h1.5v1.5h-1.5zM31.5 46.5h1.5v1.5h-1.5zM33 46.5h1.5v1.5h-1.5zM34.5 46.5h1.5v1.5h-1.5zM42 46.5h1.5v1.5h-1.5zM49.5 46.5h1.5v1.5h-1.5zM1.5 48h1.5v1.5h-1.5zM4.5 48h1.5v1.5h-1.5zM6 48h1.5v1.5h-1.5zM9 48h1.5v1.5h-1.5zM12 48h1.5v1.5h-1.5zM15 48h1.5v1.5h-1.5zM19.5 48h1.5v1.5h-1.5zM21 48h1.5v1.5h-1.5zM24 48h1.5v1.5h-1.5zM25.5 48h1.5v1.5h-1.5zM27 48h1.5v1.5h-1.5zM31.5 48h1.5v1.5h-1.5zM34.5 48h1.5v1.5h-1.5zM10.5 49.5h1.5v1.5h-1.5zM15 49.5h1.5v1.5h-1.5zM19.5 49.5h1.5v1.5h-1.5zM22.5 49.5h1.5v1.5h-1.5zM25.5 49.5h1.5v1.5h-1.5zM27 49.5h1.5v1.5h-1.5zM31.5 49.5h1.5v1.5h-1.5zM33 49.5h1.5v1.5h-1.5zM34.5 49.5h1.5v1.5h-1.5zM37.5 49.5h1.5v1.5h-1.5zM9 51h1.5v1.5h-1.5zM12 51h1.5v1.5h-1.5zM16.5 51h1.5v1.5h-1.5zM18 51h1.5v1.5h-1.5zM24 51h1.5v1.5h-1.5zM39 51h1.5v1.5h-1.5zM1.5 52.5h1.5v1.5h-1.5zM13.5 52.5h1.5v1.5h-1.5zM18 52.5h1.5v1.5h-1.5zM22.5 52.5h1.5v1.5h-1.5zM27 52.5h1.5v1.5h-1.5zM28.5 52.5h1.5v1.5h-1.5zM33 52.5h1.5v1.5h-1.5zM42 52.5h1.5v1.5h-1.5zM43.5 52.5h1.5v1.5h-1.5zM46.5 52.5h1.5v1.5h-1.5zM6 54h1.5v1.5h-1.5zM7.5 54h1.5v1.5h-1.5zM25.5 54h1.5v1.5h-1.5zM28.5 54h1.5v1.5h-1.5zM30 54h1.5v1.5h-1.5zM33 54h1.5v1.5h-1.5zM37.5 54h1.5v1.5h-1.5zM40.5 54h1.5v1.5h-1.5zM46.5 54h1.5v1.5h-1.5zM0 55.5h1.5v1.5h-1.5zM1.5 55.5h1.5v1.5h-1.5zM15 55.5h1.5v1.5h-1.5zM33 55.5h1.5v1.5h-1.5zM34.5 55.5h1.5v1.5h-1.5zM36 55.5h1.5v1.5h-1.5zM39 55.5h1.5v1.5h-1.5zM40.5 55.5h1.5v1.5h-1.5zM3 57h1.5v1.5h-1.5zM12 57h1.5v1.5h-1.5zM16.5 57h1.5v1.5h-1.5zM22.5 57h1.5v1.5h-1.5zM27 57h1.5v1.5h-1.5zM30 57h1.5v1.5h-1.5zM31.5 57h1.5v1.5h-1.5zM34.5 57h1.5v1.5h-1.5zM36 57h1.5v1.5h-1.5zM37.5 57h1.5v1.5h-1.5zM42 57h1.5v1.5h-1.5zM43.5 57h1.5v1.5h-1.5zM48 57h1.5v1.5h-1.5zM49.5 57h1.5v1.5h-1.5zM3 58.5h1.5v1.5h-1.5zM4.5 58.5h1.5v1.5h-1.5zM6 58.5h1.5v1.5h-1.5zM12 58.5h1.5v1.5h-1.5zM16.5 58.5h1.5v1.5h-1.5zM18 58.5h1.5v1.5h-1.5zM19.5 58.5h1.5v1.5h-1.5zM24 58.5h1.5v1.5h-1.5zM40.5 58.5h1.5v1.5h-1.5zM49.5 58.5h1.5v1.5h-1.5zM0 60h1.5v1.5h-1.5zM3 60h1.5v1.5h-1.5zM6 60h1.5v1.5h-1.5zM13.5 60h1.5v1.5h-1.5zM19.5 60h1.5v1.5h-1.5zM24 60h1.5v1.5h-1.5zM25.5 60h1.5v1.5h-1.5zM27 60h1.5v1.5h-1.5zM30 60h1.5v1.5h-1.5zM33 60h1.5v1.5h-1.5zM34.5 60h1.5v1.5h-1.5zM37.5 60h1.5v1.5h-1.5zM39 60h1.5v1.5h-1.5zM40.5 60h1.5v1.5h-1.5zM43.5 60h1.5v1.5h-1.5zM45 60h1.5v1.5h-1.5zM7.5 61.5h1.5v1.5h-1.5zM10.5 61.5h1.5v1.5h-1.5zM12 61.5h1.5v1.5h-1.5zM13.5 61.5h1.5v1.5h-1.5zM15 61.5h1.5v1.5h-1.5zM19.5 61.5h1.5v1.5h-1.5zM24 61.5h1.5v1.5h-1.5zM27 61.5h1.5v1.5h-1.5zM31.5 61.5h1.5v1.5h-1.5zM33 61.5h1.5v1.5h-1.5zM43.5 61.5h1.5v1.5h-1.5zM45 61.5h1.5v1.5h-1.5zM46.5 61.5h1.5v1.5h-1.5zM48 61.5h1.5v1.5h-1.5zM49.5 61.5h1.5v1.5h-1.5zM0 63h1.5v1.5h-1.5zM7.5 63h1.5v1.5h-1.5zM18 63h1.5v1.5h-1.5zM22.5 63h1.5v1.5h-1.5zM24 63h1.5v1.5h-1.5zM25.5 63h1.5v1.5h-1.5zM28.5 63h1.5v1.5h-1.5zM34.5 63h1.5v1.5h-1.5zM46.5 63h1.5v1.5h-1.5zM25.5 64.5h1.5v1.5h-1.5zM27 64.5h1.5v1.5h-1.5zM30 64.5h1.5v1.5h-1.5zM33 64.5h1.5v1.5h-1.5zM36 64.5h1.5v1.5h-1.5zM46.5 64.5h1.5v1.5h-1.5zM48 64.5h1.5v1.5h-1.5z" fill="#9f9f9f"/><path d="M6 0h1.5v1.5h-1.5zM16.5 0h1.5v1.5h-1.5zM25.5 0h1.5v1.5h-1.5zM36 0h1.5v1.5h-1.5zM37.5 0h1.5v1.5h-1.5zM48 0h1.5v1.5h-1.5zM1.5 1.5h1.5v1.5h-1.5zM6 1.5h1.5v1.5h-1.5zM27 1.5h1.5v1.5h-1.5zM28.5 1.5h1.5v1.5h-1.5zM46.5 1.5h1.5v1.5h-1.5zM1.5 3h1.5v1.5h-1.5zM6 3h1.5v1.5h-1.5zM42 3h1.5v1.5h-1.5zM43.5 3h1.5v1.5h-1.5zM1.5 4.5h1.5v1.5h-1.5zM3 4.5h1.5v1.5h-1.5zM7.5 4.5h1.5v1.5h-1.5zM42 4.5h1.5v1.5h-1.5zM43.5 4.5h1.5v1.5h-1.5zM46.5 4.5h1.5v1.5h-1.5zM0 6h1.5v1.5h-1.5zM15 6h1.5v1.5h-1.5zM16.5 6h1.5v1.5h-1.5zM24 6h1.5v1.5h-1.5zM33 6h1.5v1.5h-1.5zM34.5 6h1.5v1.5h-1.5zM36 6h1.5v1.5h-1.5zM37.5 6h1.5v1.5h-1.5zM42 6h1.5v1.5h-1.5zM48 6h1.5v1.5h-1.5zM7.5 7.5h1.5v1.5h-1.5zM10.5 7.5h1.5v1.5h-1.5zM12 7.5h1.5v1.5h-1.5zM21 7.5h1.5v1.5h-1.5zM27 7.5h1.5v1.5h-1.5zM28.5 7.5h1.5v1.5h-1.5zM42 7.5h1.5v1.5h-1.5zM6 9h1.5v1.5h-1.5zM7.5 9h1.5v1.5h-1.5zM9 9h1.5v1.5h-1.5zM15 9h1.5v1.5h-1.5zM16.5 9h1.5v1.5h-1.5zM22.5 9h1.5v1.5h-1.5zM24 9h1.5v1.5h-1.5zM31.5 9h1.5v1.5h-1.5zM37.5 9h1.5v1.5h-1.5zM43.5 9h1.5v1.5h-1.5zM7.5 10.5h1.5v1.5h-1.5zM12 10.5h1.5v1.5h-1.5zM15 10.5h1.5v1.5h-1.5zM16.5 10.5h1.5v1.5h-1.5zM18 10.5h1.5v1.5h-1.5zM21 10.5h1.5v1.5h-1.5zM31.5 10.5h1.5v1.5h-1.5zM37.5 10.5h1.5v1.5h-1.5zM45 10.5h1.5v1.5h-1.5zM6 12h1.5v1.5h-1.5zM18 12h1.5v1.5h-1.5zM24 12h1.5v1.5h-1.5zM27 12h1.5v1.5h-1.5zM36 12h1.5v1.5h-1.5zM4.5 13.5h1.5v1.5h-1.5zM6 13.5h1.5v1.5h-1.5zM18 13.5h1.5v1.5h-1.5zM19.5 13.5h1.5v1.5h-1.5zM22.5 13.5h1.5v1.5h-1.5zM27 13.5h1.5v1.5h-1.5zM36 13.5h1.5v1.5h-1.5zM48 13.5h1.5v1.5h-1.5zM7.5 15h1.5v1.5h-1.5zM24 15h1.5v1.5h-1.5zM48 15h1.5v1.5h-1.5zM49.5 15h1.5v1.5h-1.5zM30 16.5h1.5v1.5h-1.5zM39 16.5h1.5v1.5h-1.5zM49.5 16.5h1.5v1.5h-1.5zM4.5 18h1.5v1.5h-1.5zM10.5 18h1.5v1.5h-1.5zM13.5 18h1.5v1.5h-1.5zM15 18h1.5v1.5h-1.5zM16.5 18h1.5v1.5h-1.5zM21 18h1.5v1.5h-1.5zM15 19.5h1.5v1.5h-1.5zM39 19.5h1.5v1.5h-1.5zM40.5 19.5h1.5v1.5h-1.5zM45 19.5h1.5v1.5h-1.5zM13.5 21h1.5v1.5h-1.5zM15 21h1.5v1.5h-1.5zM30 21h1.5v1.5h-1.5zM37.5 21h1.5v1.5h-1.5zM40.5 21h1.5v1.5h-1.5zM45 21h1.5v1.5h-1.5zM46.5 21h1.5v1.5h-1.5zM27 22.5h1.5v1.5h-1.5zM28.5 22.5h1.5v1.5h-1.5zM40.5 22.5h1.5v1.5h-1.5zM4.5 24h1.5v1.5h-1.5zM39 24h1.5v1.5h-1.5zM40.5 24h1.5v1.5h-1.5zM1.5 25.5h1.5v1.5h-1.5zM4.5 25.5h1.5v1.5h-1.5zM10.5 25.5h1.5v1.5h-1.5zM25.5 25.5h1.5v1.5h-1.5zM43.5 25.5h1.5v1.5h-1.5zM1.5 27h1.5v1.5h-1.5zM9 27h1.5v1.5h-1.5zM13.5 27h1.5v1.5h-1.5zM22.5 27h1.5v1.5h-1.5zM48 27h1.5v1.5h-1.5zM4.5 28.5h1.5v1.5h-1.5zM10.5 28.5h1.5v1.5h-1.5zM30 28.5h1.5v1.5h-1.5zM31.5 28.5h1.5v1.5h-1.5zM43.5 28.5h1.5v1.5h-1.5zM1.5 30h1.5v1.5h-1.5zM4.5 30h1.5v1.5h-1.5zM24 30h1.5v1.5h-1.5zM27 30h1.5v1.5h-1.5zM31.5 30h1.5v1.5h-1.5zM43.5 30h1.5v1.5h-1.5zM49.5 30h1.5v1.5h-1.5zM6 31.5h1.5v1.5h-1.5zM18 31.5h1.5v1.5h-1.5zM0 33h1.5v1.5h-1.5zM10.5 33h1.5v1.5h-1.5zM12 33h1.5v1.5h-1.5zM18 33h1.5v1.5h-1.5zM22.5 33h1.5v1.5h-1.5zM37.5 33h1.5v1.5h-1.5zM48 33h1.5v1.5h-1.5zM49.5 33h1.5v1.5h-1.5zM0 34.5h1.5v1.5h-1.5zM22.5 34.5h1.5v1.5h-1.5zM31.5 34.5h1.5v1.5h-1.5zM37.5 34.5h1.5v1.5h-1.5zM40.5 34.5h1.5v1.5h-1.5zM45 34.5h1.5v1.5h-1.5zM12 36h1.5v1.5h-1.5zM22.5 36h1.5v1.5h-1.5zM30 36h1.5v1.5h-1.5zM31.5 36h1.5v1.5h-1.5zM36 36h1.5v1.5h-1.5zM46.5 36h1.5v1.5h-1.5zM9 37.5h1.5v1.5h-1.5zM10.5 37.5h1.5v1.5h-1.5zM16.5 37.5h1.5v1.5h-1.5zM25.5 37.5h1.5v1.5h-1.5zM36 37.5h1.5v1.5h-1.5zM39 37.5h1.5v1.5h-1.5zM46.5 37.5h1.5v1.5h-1.5zM12 39h1.5v1.5h-1.5zM27 39h1.5v1.5h-1.5zM48 39h1.5v1.5h-1.5zM49.5 39h1.5v1.5h-1.5zM28.5 40.5h1.5v1.5h-1.5zM34.5 40.5h1.5v1.5h-1.5zM6 42h1.5v1.5h-1.5zM7.5 42h1.5v1.5h-1.5zM15 42h1.5v1.5h-1.5zM25.5 42h1.5v1.5h-1.5zM28.5 42h1.5v1.5h-1.5zM45 42h1.5v1.5h-1.5zM49.5 42h1.5v1.5h-1.5zM12 43.5h1.5v1.5h-1.5zM36 43.5h1.5v1.5h-1.5zM40.5 43.5h1.5v1.5h-1.5zM46.5 43.5h1.5v1.5h-1.5zM6 45h1.5v1.5h-1.5zM18 45h1.5v1.5h-1.5zM21 45h1.5v1.5h-1.5zM27 45h1.5v1.5h-1.5zM30 45h1.5v1.5h-1.5zM34.5 45h1.5v1.5h-1.5zM10.5 46.5h1.5v1.5h-1.5zM19.5 46.5h1.5v1.5h-1.5zM30 46.5h1.5v1.5h-1.5zM36 46.5h1.5v1.5h-1.5zM43.5 46.5h1.5v1.5h-1.5zM10.5 48h1.5v1.5h-1.5zM16.5 48h1.5v1.5h-1.5zM30 48h1.5v1.5h-1.5zM33 48h1.5v1.5h-1.5zM36 48h1.5v1.5h-1.5zM37.5 48h1.5v1.5h-1.5zM40.5 48h1.5v1.5h-1.5zM16.5 49.5h1.5v1.5h-1.5zM18 49.5h1.5v1.5h-1.5zM40.5 49.5h1.5v1.5h-1.5zM49.5 49.5h1.5v1.5h-1.5zM1.5 51h1.5v1.5h-1.5zM15 51h1.5v1.5h-1.5zM22.5 51h1.5v1.5h-1.5zM25.5 51h1.5v1.5h-1.5zM49.5 51h1.5v1.5h-1.5zM0 52.5h1.5v1.5h-1.5zM15 52.5h1.5v1.5h-1.5zM16.5 52.5h1.5v1.5h-1.5zM45 52.5h1.5v1.5h-1.5zM48 52.5h1.5v1.5h-1.5zM49.5 52.5h1.5v1.5h-1.5zM9 54h1.5v1.5h-1.5zM13.5 54h1.5v1.5h-1.5zM15 54h1.5v1.5h-1.5zM18 54h1.5v1.5h-1.5zM22.5 54h1.5v1.5h-1.5zM36 54h1.5v1.5h-1.5zM48 54h1.5v1.5h-1.5zM9 55.5h1.5v1.5h-1.5zM12 55.5h1.5v1.5h-1.5zM16.5 55.5h1.5v1.5h-1.5zM18 55.5h1.5v1.5h-1.5zM21 55.5h1.5v1.5h-1.5zM49.5 55.5h1.5v1.5h-1.5zM9 57h1.5v1.5h-1.5zM13.5 57h1.5v1.5h-1.5zM21 57h1.5v1.5h-1.5zM7.5 58.5h1.5v1.5h-1.5zM9 58.5h1.5v1.5h-1.5zM21 58.5h1.5v1.5h-1.5zM27 58.5h1.5v1.5h-1.5zM28.5 58.5h1.5v1.5h-1.5zM30 58.5h1.5v1.5h-1.5zM31.5 58.5h1.5v1.5h-1.5zM37.5 58.5h1.5v1.5h-1.5zM42 58.5h1.5v1.5h-1.5zM45 58.5h1.5v1.5h-1.5zM46.5 58.5h1.5v1.5h-1.5zM1.5 60h1.5v1.5h-1.5zM4.5 60h1.5v1.5h-1.5zM7.5 60h1.5v1.5h-1.5zM12 60h1.5v1.5h-1.5zM36 60h1.5v1.5h-1.5zM42 60h1.5v1.5h-1.5zM6 61.5h1.5v1.5h-1.5zM30 61.5h1.5v1.5h-1.5zM39 61.5h1.5v1.5h-1.5zM1.5 63h1.5v1.5h-1.5zM12 63h1.5v1.5h-1.5zM13.5 63h1.5v1.5h-1.5zM19.5 63h1.5v1.5h-1.5zM39 63h1.5v1.5h-1.5zM48 63h1.5v1.5h-1.5zM10.5 64.5h1.5v1.5h-1.5zM19.5 64.5h1.5v1.5h-1.5z" fill="#bfbfbf"/><path d="M4.5 1.5h1.5v1.5h-1.5zM37.5 1.5h1.5v1.5h-1.5zM15 3h1.5v1.5h-1.5zM39 4.5h1.5v1.5h-1.5zM1.5 6h1.5v1.5h-1.5zM39 6h1.5v1.5h-1.5zM49.5 6h1.5v1.5h-1.5zM9 7.5h1.5v1.5h-1.5zM39 7.5h1.5v1.5h-1.5zM30 12h1.5v1.5h-1.5zM31.5 12h1.5v1.5h-1.5zM33 12h1.5v1.5h-1.5zM7.5 13.5h1.5v1.5h-1.5zM36 15h1.5v1.5h-1.5zM9 16.5h1.5v1.5h-1.5zM10.5 16.5h1.5v1.5h-1.5zM45 16.5h1.5v1.5h-1.5zM9 18h1.5v1.5h-1.5zM42 18h1.5v1.5h-1.5zM46.5 19.5h1.5v1.5h-1.5zM31.5 24h1.5v1.5h-1.5zM27 25.5h1.5v1.5h-1.5zM16.5 27h1.5v1.5h-1.5zM16.5 28.5h1.5v1.5h-1.5zM24 28.5h1.5v1.5h-1.5zM7.5 31.5h1.5v1.5h-1.5zM27 31.5h1.5v1.5h-1.5zM9 33h1.5v1.5h-1.5zM40.5 33h1.5v1.5h-1.5zM7.5 34.5h1.5v1.5h-1.5zM19.5 34.5h1.5v1.5h-1.5zM21 34.5h1.5v1.5h-1.5zM36 34.5h1.5v1.5h-1.5zM0 36h1.5v1.5h-1.5zM25.5 36h1.5v1.5h-1.5zM49.5 36h1.5v1.5h-1.5zM7.5 37.5h1.5v1.5h-1.5zM24 37.5h1.5v1.5h-1.5zM9 39h1.5v1.5h-1.5zM45 40.5h1.5v1.5h-1.5zM13.5 42h1.5v1.5h-1.5zM48 42h1.5v1.5h-1.5zM45 46.5h1.5v1.5h-1.5zM18 48h1.5v1.5h-1.5zM3 51h1.5v1.5h-1.5zM21 51h1.5v1.5h-1.5zM16.5 54h1.5v1.5h-1.5zM49.5 54h1.5v1.5h-1.5zM7.5 55.5h1.5v1.5h-1.5zM43.5 55.5h1.5v1.5h-1.5zM1.5 57h1.5v1.5h-1.5zM7.5 57h1.5v1.5h-1.5zM28.5 57h1.5v1.5h-1.5zM49.5 60h1.5v1.5h-1.5zM4.5 61.5h1.5v1.5h-1.5zM34.5 61.5h1.5v1.5h-1.5zM4.5 63h1.5v1.5h-1.5zM10.5 63h1.5v1.5h-1.5zM39 64.5h1.5v1.5h-1.5z" fill="#dfdfdf"/><path d="M3 3h1.5v1.5h-1.5zM4.5 3h1.5v1.5h-1.5zM48 16.5h1.5v1.5h-1.5zM30 18h1.5v1.5h-1.5zM37.5 31.5h1.5v1.5h-1.5zM28.5 43.5h1.5v1.5h-1.5zM22.5 48h1.5v1.5h-1.5zM9 63h1.5v1.5h-1.5z" fill="#ffffff"/></pattern><linearGradient id="hband2" x1="0" y1="0" x2="0" y2="1"><stop offset="0" stop-color="#000" stop-opacity="0"/><stop offset="0.5" stop-color="#000" stop-opacity="0.25"/><stop offset="1" stop-color="#000" stop-opacity="0"/></linearGradient><clipPath id="specclip"><rect x="101.6" y="348.5" width="1197.8000000000002" height="83.69999999999999"/></clipPath><clipPath id="m3535"><rect x="133.6" y="348.5" width="12.1" height="83.69999999999999"/></clipPath><clipPath id="m5457"><rect x="1271.3" y="348.5" width="6.5" height="83.69999999999999"/></clipPath><pattern id="phsc" width="55" height="55" patternUnits="userSpaceOnUse"><path d="M11 0h2.75v2.75h-2.75zM35.75 2.75h2.75v2.75h-2.75zM46.75 2.75h2.75v2.75h-2.75zM30.25 11h2.75v2.75h-2.75zM38.5 11h2.75v2.75h-2.75zM30.25 13.75h2.75v2.75h-2.75zM27.5 16.5h2.75v2.75h-2.75zM16.5 19.25h2.75v2.75h-2.75zM33 19.25h2.75v2.75h-2.75zM16.5 24.75h2.75v2.75h-2.75zM24.75 27.5h2.75v2.75h-2.75zM0 30.25h2.75v2.75h-2.75zM2.75 30.25h2.75v2.75h-2.75zM30.25 30.25h2.75v2.75h-2.75zM33 35.75h2.75v2.75h-2.75zM19.25 38.5h2.75v2.75h-2.75zM13.75 41.25h2.75v2.75h-2.75zM30.25 41.25h2.75v2.75h-2.75zM11 44h2.75v2.75h-2.75zM24.75 52.25h2.75v2.75h-2.75zM46.75 52.25h2.75v2.75h-2.75z" fill="#bbbbbb"/><path d="M0 0h2.75v2.75h-2.75zM2.75 0h2.75v2.75h-2.75zM5.5 0h2.75v2.75h-2.75zM38.5 0h2.75v2.75h-2.75zM0 2.75h2.75v2.75h-2.75zM8.25 2.75h2.75v2.75h-2.75zM19.25 2.75h2.75v2.75h-2.75zM24.75 2.75h2.75v2.75h-2.75zM30.25 2.75h2.75v2.75h-2.75zM11 5.5h2.75v2.75h-2.75zM22 5.5h2.75v2.75h-2.75zM30.25 5.5h2.75v2.75h-2.75zM8.25 8.25h2.75v2.75h-2.75zM22 8.25h2.75v2.75h-2.75zM24.75 8.25h2.75v2.75h-2.75zM33 8.25h2.75v2.75h-2.75zM5.5 11h2.75v2.75h-2.75zM8.25 11h2.75v2.75h-2.75zM16.5 11h2.75v2.75h-2.75zM19.25 11h2.75v2.75h-2.75zM27.5 11h2.75v2.75h-2.75zM35.75 11h2.75v2.75h-2.75zM41.25 11h2.75v2.75h-2.75zM2.75 13.75h2.75v2.75h-2.75zM13.75 13.75h2.75v2.75h-2.75zM16.5 13.75h2.75v2.75h-2.75zM33 13.75h2.75v2.75h-2.75zM35.75 13.75h2.75v2.75h-2.75zM44 13.75h2.75v2.75h-2.75zM8.25 16.5h2.75v2.75h-2.75zM13.75 16.5h2.75v2.75h-2.75zM16.5 16.5h2.75v2.75h-2.75zM38.5 16.5h2.75v2.75h-2.75zM41.25 16.5h2.75v2.75h-2.75zM49.5 16.5h2.75v2.75h-2.75zM0 19.25h2.75v2.75h-2.75zM5.5 19.25h2.75v2.75h-2.75zM27.5 19.25h2.75v2.75h-2.75zM30.25 19.25h2.75v2.75h-2.75zM44 19.25h2.75v2.75h-2.75zM46.75 19.25h2.75v2.75h-2.75zM2.75 22h2.75v2.75h-2.75zM11 22h2.75v2.75h-2.75zM13.75 22h2.75v2.75h-2.75zM22 22h2.75v2.75h-2.75zM27.5 22h2.75v2.75h-2.75zM35.75 22h2.75v2.75h-2.75zM38.5 22h2.75v2.75h-2.75zM2.75 24.75h2.75v2.75h-2.75zM22 24.75h2.75v2.75h-2.75zM41.25 24.75h2.75v2.75h-2.75zM8.25 27.5h2.75v2.75h-2.75zM35.75 27.5h2.75v2.75h-2.75zM8.25 30.25h2.75v2.75h-2.75zM27.5 30.25h2.75v2.75h-2.75zM46.75 30.25h2.75v2.75h-2.75zM16.5 33h2.75v2.75h-2.75zM16.5 35.75h2.75v2.75h-2.75zM38.5 35.75h2.75v2.75h-2.75zM0 38.5h2.75v2.75h-2.75zM5.5 38.5h2.75v2.75h-2.75zM16.5 38.5h2.75v2.75h-2.75zM24.75 38.5h2.75v2.75h-2.75zM38.5 38.5h2.75v2.75h-2.75zM41.25 38.5h2.75v2.75h-2.75zM49.5 38.5h2.75v2.75h-2.75zM52.25 38.5h2.75v2.75h-2.75zM8.25 41.25h2.75v2.75h-2.75zM16.5 41.25h2.75v2.75h-2.75zM41.25 41.25h2.75v2.75h-2.75zM5.5 44h2.75v2.75h-2.75zM16.5 44h2.75v2.75h-2.75zM30.25 44h2.75v2.75h-2.75zM33 44h2.75v2.75h-2.75zM49.5 44h2.75v2.75h-2.75zM8.25 46.75h2.75v2.75h-2.75zM13.75 46.75h2.75v2.75h-2.75zM38.5 46.75h2.75v2.75h-2.75zM44 46.75h2.75v2.75h-2.75zM49.5 46.75h2.75v2.75h-2.75zM8.25 49.5h2.75v2.75h-2.75zM13.75 49.5h2.75v2.75h-2.75zM16.5 49.5h2.75v2.75h-2.75zM27.5 49.5h2.75v2.75h-2.75zM33 49.5h2.75v2.75h-2.75zM38.5 49.5h2.75v2.75h-2.75zM46.75 49.5h2.75v2.75h-2.75zM52.25 49.5h2.75v2.75h-2.75zM5.5 52.25h2.75v2.75h-2.75zM11 52.25h2.75v2.75h-2.75zM13.75 52.25h2.75v2.75h-2.75zM16.5 52.25h2.75v2.75h-2.75zM30.25 52.25h2.75v2.75h-2.75zM35.75 52.25h2.75v2.75h-2.75zM38.5 52.25h2.75v2.75h-2.75z" fill="#cccccc"/><path d="M8.25 0h2.75v2.75h-2.75zM16.5 0h2.75v2.75h-2.75zM19.25 0h2.75v2.75h-2.75zM22 0h2.75v2.75h-2.75zM27.5 0h2.75v2.75h-2.75zM30.25 0h2.75v2.75h-2.75zM33 0h2.75v2.75h-2.75zM35.75 0h2.75v2.75h-2.75zM44 0h2.75v2.75h-2.75zM46.75 0h2.75v2.75h-2.75zM49.5 0h2.75v2.75h-2.75zM5.5 2.75h2.75v2.75h-2.75zM16.5 2.75h2.75v2.75h-2.75zM22 2.75h2.75v2.75h-2.75zM33 2.75h2.75v2.75h-2.75zM38.5 2.75h2.75v2.75h-2.75zM44 2.75h2.75v2.75h-2.75zM49.5 2.75h2.75v2.75h-2.75zM52.25 2.75h2.75v2.75h-2.75zM0 5.5h2.75v2.75h-2.75zM2.75 5.5h2.75v2.75h-2.75zM5.5 5.5h2.75v2.75h-2.75zM8.25 5.5h2.75v2.75h-2.75zM13.75 5.5h2.75v2.75h-2.75zM24.75 5.5h2.75v2.75h-2.75zM33 5.5h2.75v2.75h-2.75zM35.75 5.5h2.75v2.75h-2.75zM41.25 5.5h2.75v2.75h-2.75zM49.5 5.5h2.75v2.75h-2.75zM52.25 5.5h2.75v2.75h-2.75zM0 8.25h2.75v2.75h-2.75zM5.5 8.25h2.75v2.75h-2.75zM11 8.25h2.75v2.75h-2.75zM16.5 8.25h2.75v2.75h-2.75zM19.25 8.25h2.75v2.75h-2.75zM27.5 8.25h2.75v2.75h-2.75zM30.25 8.25h2.75v2.75h-2.75zM35.75 8.25h2.75v2.75h-2.75zM41.25 8.25h2.75v2.75h-2.75zM44 8.25h2.75v2.75h-2.75zM46.75 8.25h2.75v2.75h-2.75zM49.5 8.25h2.75v2.75h-2.75zM52.25 8.25h2.75v2.75h-2.75zM0 11h2.75v2.75h-2.75zM2.75 11h2.75v2.75h-2.75zM11 11h2.75v2.75h-2.75zM13.75 11h2.75v2.75h-2.75zM24.75 11h2.75v2.75h-2.75zM44 11h2.75v2.75h-2.75zM52.25 11h2.75v2.75h-2.75zM0 13.75h2.75v2.75h-2.75zM5.5 13.75h2.75v2.75h-2.75zM11 13.75h2.75v2.75h-2.75zM22 13.75h2.75v2.75h-2.75zM27.5 13.75h2.75v2.75h-2.75zM38.5 13.75h2.75v2.75h-2.75zM46.75 13.75h2.75v2.75h-2.75zM0 16.5h2.75v2.75h-2.75zM11 16.5h2.75v2.75h-2.75zM19.25 16.5h2.75v2.75h-2.75zM22 16.5h2.75v2.75h-2.75zM30.25 16.5h2.75v2.75h-2.75zM33 16.5h2.75v2.75h-2.75zM35.75 16.5h2.75v2.75h-2.75zM44 16.5h2.75v2.75h-2.75zM46.75 16.5h2.75v2.75h-2.75zM52.25 16.5h2.75v2.75h-2.75zM8.25 19.25h2.75v2.75h-2.75zM11 19.25h2.75v2.75h-2.75zM35.75 19.25h2.75v2.75h-2.75zM38.5 19.25h2.75v2.75h-2.75zM41.25 19.25h2.75v2.75h-2.75zM49.5 19.25h2.75v2.75h-2.75zM0 22h2.75v2.75h-2.75zM5.5 22h2.75v2.75h-2.75zM8.25 22h2.75v2.75h-2.75zM19.25 22h2.75v2.75h-2.75zM24.75 22h2.75v2.75h-2.75zM33 22h2.75v2.75h-2.75zM44 22h2.75v2.75h-2.75zM49.5 22h2.75v2.75h-2.75zM0 24.75h2.75v2.75h-2.75zM5.5 24.75h2.75v2.75h-2.75zM8.25 24.75h2.75v2.75h-2.75zM19.25 24.75h2.75v2.75h-2.75zM24.75 24.75h2.75v2.75h-2.75zM27.5 24.75h2.75v2.75h-2.75zM30.25 24.75h2.75v2.75h-2.75zM33 24.75h2.75v2.75h-2.75zM35.75 24.75h2.75v2.75h-2.75zM38.5 24.75h2.75v2.75h-2.75zM49.5 24.75h2.75v2.75h-2.75zM52.25 24.75h2.75v2.75h-2.75zM0 27.5h2.75v2.75h-2.75zM2.75 27.5h2.75v2.75h-2.75zM5.5 27.5h2.75v2.75h-2.75zM13.75 27.5h2.75v2.75h-2.75zM19.25 27.5h2.75v2.75h-2.75zM27.5 27.5h2.75v2.75h-2.75zM33 27.5h2.75v2.75h-2.75zM41.25 27.5h2.75v2.75h-2.75zM44 27.5h2.75v2.75h-2.75zM46.75 27.5h2.75v2.75h-2.75zM49.5 27.5h2.75v2.75h-2.75zM52.25 27.5h2.75v2.75h-2.75zM11 30.25h2.75v2.75h-2.75zM13.75 30.25h2.75v2.75h-2.75zM22 30.25h2.75v2.75h-2.75zM24.75 30.25h2.75v2.75h-2.75zM33 30.25h2.75v2.75h-2.75zM35.75 30.25h2.75v2.75h-2.75zM41.25 30.25h2.75v2.75h-2.75zM44 30.25h2.75v2.75h-2.75zM52.25 30.25h2.75v2.75h-2.75zM8.25 33h2.75v2.75h-2.75zM11 33h2.75v2.75h-2.75zM19.25 33h2.75v2.75h-2.75zM22 33h2.75v2.75h-2.75zM24.75 33h2.75v2.75h-2.75zM30.25 33h2.75v2.75h-2.75zM33 33h2.75v2.75h-2.75zM38.5 33h2.75v2.75h-2.75zM44 33h2.75v2.75h-2.75zM46.75 33h2.75v2.75h-2.75zM49.5 33h2.75v2.75h-2.75zM52.25 33h2.75v2.75h-2.75zM2.75 35.75h2.75v2.75h-2.75zM5.5 35.75h2.75v2.75h-2.75zM11 35.75h2.75v2.75h-2.75zM13.75 35.75h2.75v2.75h-2.75zM27.5 35.75h2.75v2.75h-2.75zM30.25 35.75h2.75v2.75h-2.75zM35.75 35.75h2.75v2.75h-2.75zM41.25 35.75h2.75v2.75h-2.75zM46.75 35.75h2.75v2.75h-2.75zM49.5 35.75h2.75v2.75h-2.75zM52.25 35.75h2.75v2.75h-2.75zM2.75 38.5h2.75v2.75h-2.75zM8.25 38.5h2.75v2.75h-2.75zM13.75 38.5h2.75v2.75h-2.75zM22 38.5h2.75v2.75h-2.75zM33 38.5h2.75v2.75h-2.75zM35.75 38.5h2.75v2.75h-2.75zM46.75 38.5h2.75v2.75h-2.75zM0 41.25h2.75v2.75h-2.75zM5.5 41.25h2.75v2.75h-2.75zM11 41.25h2.75v2.75h-2.75zM22 41.25h2.75v2.75h-2.75zM24.75 41.25h2.75v2.75h-2.75zM33 41.25h2.75v2.75h-2.75zM35.75 41.25h2.75v2.75h-2.75zM38.5 41.25h2.75v2.75h-2.75zM44 41.25h2.75v2.75h-2.75zM49.5 41.25h2.75v2.75h-2.75zM52.25 41.25h2.75v2.75h-2.75zM0 44h2.75v2.75h-2.75zM2.75 44h2.75v2.75h-2.75zM13.75 44h2.75v2.75h-2.75zM19.25 44h2.75v2.75h-2.75zM22 44h2.75v2.75h-2.75zM24.75 44h2.75v2.75h-2.75zM27.5 44h2.75v2.75h-2.75zM35.75 44h2.75v2.75h-2.75zM38.5 44h2.75v2.75h-2.75zM41.25 44h2.75v2.75h-2.75zM44 44h2.75v2.75h-2.75zM52.25 44h2.75v2.75h-2.75zM2.75 46.75h2.75v2.75h-2.75zM11 46.75h2.75v2.75h-2.75zM16.5 46.75h2.75v2.75h-2.75zM19.25 46.75h2.75v2.75h-2.75zM22 46.75h2.75v2.75h-2.75zM27.5 46.75h2.75v2.75h-2.75zM30.25 46.75h2.75v2.75h-2.75zM33 46.75h2.75v2.75h-2.75zM35.75 46.75h2.75v2.75h-2.75zM41.25 46.75h2.75v2.75h-2.75zM46.75 46.75h2.75v2.75h-2.75zM52.25 46.75h2.75v2.75h-2.75zM0 49.5h2.75v2.75h-2.75zM2.75 49.5h2.75v2.75h-2.75zM5.5 49.5h2.75v2.75h-2.75zM11 49.5h2.75v2.75h-2.75zM24.75 49.5h2.75v2.75h-2.75zM30.25 49.5h2.75v2.75h-2.75zM41.25 49.5h2.75v2.75h-2.75zM0 52.25h2.75v2.75h-2.75zM2.75 52.25h2.75v2.75h-2.75zM8.25 52.25h2.75v2.75h-2.75zM27.5 52.25h2.75v2.75h-2.75zM33 52.25h2.75v2.75h-2.75zM44 52.25h2.75v2.75h-2.75zM49.5 52.25h2.75v2.75h-2.75z" fill="#dddddd"/><path d="M24.75 0h2.75v2.75h-2.75zM41.25 0h2.75v2.75h-2.75zM52.25 0h2.75v2.75h-2.75zM2.75 2.75h2.75v2.75h-2.75zM11 2.75h2.75v2.75h-2.75zM13.75 2.75h2.75v2.75h-2.75zM27.5 2.75h2.75v2.75h-2.75zM41.25 2.75h2.75v2.75h-2.75zM16.5 5.5h2.75v2.75h-2.75zM19.25 5.5h2.75v2.75h-2.75zM27.5 5.5h2.75v2.75h-2.75zM38.5 5.5h2.75v2.75h-2.75zM44 5.5h2.75v2.75h-2.75zM46.75 5.5h2.75v2.75h-2.75zM2.75 8.25h2.75v2.75h-2.75zM13.75 8.25h2.75v2.75h-2.75zM38.5 8.25h2.75v2.75h-2.75zM22 11h2.75v2.75h-2.75zM33 11h2.75v2.75h-2.75zM46.75 11h2.75v2.75h-2.75zM49.5 11h2.75v2.75h-2.75zM8.25 13.75h2.75v2.75h-2.75zM19.25 13.75h2.75v2.75h-2.75zM41.25 13.75h2.75v2.75h-2.75zM49.5 13.75h2.75v2.75h-2.75zM52.25 13.75h2.75v2.75h-2.75zM2.75 16.5h2.75v2.75h-2.75zM5.5 16.5h2.75v2.75h-2.75zM24.75 16.5h2.75v2.75h-2.75zM2.75 19.25h2.75v2.75h-2.75zM19.25 19.25h2.75v2.75h-2.75zM22 19.25h2.75v2.75h-2.75zM24.75 19.25h2.75v2.75h-2.75zM52.25 19.25h2.75v2.75h-2.75zM16.5 22h2.75v2.75h-2.75zM30.25 22h2.75v2.75h-2.75zM41.25 22h2.75v2.75h-2.75zM46.75 22h2.75v2.75h-2.75zM52.25 22h2.75v2.75h-2.75zM11 24.75h2.75v2.75h-2.75zM13.75 24.75h2.75v2.75h-2.75zM44 24.75h2.75v2.75h-2.75zM46.75 24.75h2.75v2.75h-2.75zM11 27.5h2.75v2.75h-2.75zM16.5 27.5h2.75v2.75h-2.75zM22 27.5h2.75v2.75h-2.75zM30.25 27.5h2.75v2.75h-2.75zM38.5 27.5h2.75v2.75h-2.75zM19.25 30.25h2.75v2.75h-2.75zM38.5 30.25h2.75v2.75h-2.75zM49.5 30.25h2.75v2.75h-2.75zM0 33h2.75v2.75h-2.75zM5.5 33h2.75v2.75h-2.75zM13.75 33h2.75v2.75h-2.75zM27.5 33h2.75v2.75h-2.75zM35.75 33h2.75v2.75h-2.75zM41.25 33h2.75v2.75h-2.75zM0 35.75h2.75v2.75h-2.75zM8.25 35.75h2.75v2.75h-2.75zM19.25 35.75h2.75v2.75h-2.75zM24.75 35.75h2.75v2.75h-2.75zM44 35.75h2.75v2.75h-2.75zM27.5 38.5h2.75v2.75h-2.75zM44 38.5h2.75v2.75h-2.75zM19.25 41.25h2.75v2.75h-2.75zM27.5 41.25h2.75v2.75h-2.75zM8.25 44h2.75v2.75h-2.75zM46.75 44h2.75v2.75h-2.75zM5.5 46.75h2.75v2.75h-2.75zM24.75 46.75h2.75v2.75h-2.75zM22 49.5h2.75v2.75h-2.75zM44 49.5h2.75v2.75h-2.75zM49.5 49.5h2.75v2.75h-2.75zM19.25 52.25h2.75v2.75h-2.75zM22 52.25h2.75v2.75h-2.75zM41.25 52.25h2.75v2.75h-2.75zM52.25 52.25h2.75v2.75h-2.75z" fill="#eeeeee"/><path d="M13.75 0h2.75v2.75h-2.75zM24.75 13.75h2.75v2.75h-2.75zM13.75 19.25h2.75v2.75h-2.75zM5.5 30.25h2.75v2.75h-2.75zM16.5 30.25h2.75v2.75h-2.75zM2.75 33h2.75v2.75h-2.75zM22 35.75h2.75v2.75h-2.75zM11 38.5h2.75v2.75h-2.75zM30.25 38.5h2.75v2.75h-2.75zM2.75 41.25h2.75v2.75h-2.75zM46.75 41.25h2.75v2.75h-2.75zM0 46.75h2.75v2.75h-2.75zM19.25 49.5h2.75v2.75h-2.75zM35.75 49.5h2.75v2.75h-2.75z" fill="#ffffff"/></pattern><pattern id="phsc2" width="55" height="55" patternUnits="userSpaceOnUse"><path d="M0 8.25h2.75v2.75h-2.75zM5.5 8.25h2.75v2.75h-2.75zM30.25 8.25h2.75v2.75h-2.75zM35.75 8.25h2.75v2.75h-2.75zM38.5 8.25h2.75v2.75h-2.75zM27.5 11h2.75v2.75h-2.75zM52.25 11h2.75v2.75h-2.75zM8.25 13.75h2.75v2.75h-2.75zM27.5 13.75h2.75v2.75h-2.75zM13.75 30.25h2.75v2.75h-2.75zM35.75 30.25h2.75v2.75h-2.75zM49.5 33h2.75v2.75h-2.75zM19.25 41.25h2.75v2.75h-2.75zM5.5 44h2.75v2.75h-2.75zM22 46.75h2.75v2.75h-2.75zM5.5 49.5h2.75v2.75h-2.75zM16.5 49.5h2.75v2.75h-2.75zM27.5 49.5h2.75v2.75h-2.75zM35.75 49.5h2.75v2.75h-2.75zM11 52.25h2.75v2.75h-2.75zM44 52.25h2.75v2.75h-2.75z" fill="#bbbbbb"/><path d="M2.75 0h2.75v2.75h-2.75zM11 0h2.75v2.75h-2.75zM13.75 0h2.75v2.75h-2.75zM16.5 0h2.75v2.75h-2.75zM41.25 0h2.75v2.75h-2.75zM44 0h2.75v2.75h-2.75zM2.75 2.75h2.75v2.75h-2.75zM5.5 2.75h2.75v2.75h-2.75zM8.25 2.75h2.75v2.75h-2.75zM19.25 2.75h2.75v2.75h-2.75zM22 2.75h2.75v2.75h-2.75zM24.75 2.75h2.75v2.75h-2.75zM33 2.75h2.75v2.75h-2.75zM38.5 2.75h2.75v2.75h-2.75zM41.25 2.75h2.75v2.75h-2.75zM46.75 2.75h2.75v2.75h-2.75zM2.75 5.5h2.75v2.75h-2.75zM16.5 5.5h2.75v2.75h-2.75zM19.25 5.5h2.75v2.75h-2.75zM35.75 5.5h2.75v2.75h-2.75zM46.75 5.5h2.75v2.75h-2.75zM52.25 5.5h2.75v2.75h-2.75zM2.75 8.25h2.75v2.75h-2.75zM8.25 8.25h2.75v2.75h-2.75zM27.5 8.25h2.75v2.75h-2.75zM41.25 8.25h2.75v2.75h-2.75zM46.75 8.25h2.75v2.75h-2.75zM5.5 11h2.75v2.75h-2.75zM13.75 11h2.75v2.75h-2.75zM22 11h2.75v2.75h-2.75zM30.25 11h2.75v2.75h-2.75zM41.25 11h2.75v2.75h-2.75zM44 11h2.75v2.75h-2.75zM2.75 13.75h2.75v2.75h-2.75zM5.5 13.75h2.75v2.75h-2.75zM13.75 13.75h2.75v2.75h-2.75zM24.75 13.75h2.75v2.75h-2.75zM30.25 13.75h2.75v2.75h-2.75zM38.5 13.75h2.75v2.75h-2.75zM46.75 13.75h2.75v2.75h-2.75zM0 16.5h2.75v2.75h-2.75zM11 16.5h2.75v2.75h-2.75zM22 16.5h2.75v2.75h-2.75zM52.25 16.5h2.75v2.75h-2.75zM2.75 19.25h2.75v2.75h-2.75zM5.5 19.25h2.75v2.75h-2.75zM11 19.25h2.75v2.75h-2.75zM24.75 19.25h2.75v2.75h-2.75zM30.25 19.25h2.75v2.75h-2.75zM33 19.25h2.75v2.75h-2.75zM35.75 19.25h2.75v2.75h-2.75zM44 19.25h2.75v2.75h-2.75zM49.5 19.25h2.75v2.75h-2.75zM0 22h2.75v2.75h-2.75zM5.5 22h2.75v2.75h-2.75zM33 22h2.75v2.75h-2.75zM38.5 22h2.75v2.75h-2.75zM46.75 22h2.75v2.75h-2.75zM52.25 22h2.75v2.75h-2.75zM27.5 24.75h2.75v2.75h-2.75zM41.25 24.75h2.75v2.75h-2.75zM11 27.5h2.75v2.75h-2.75zM16.5 27.5h2.75v2.75h-2.75zM19.25 27.5h2.75v2.75h-2.75zM24.75 27.5h2.75v2.75h-2.75zM27.5 27.5h2.75v2.75h-2.75zM41.25 27.5h2.75v2.75h-2.75zM44 27.5h2.75v2.75h-2.75zM49.5 27.5h2.75v2.75h-2.75zM52.25 27.5h2.75v2.75h-2.75zM2.75 30.25h2.75v2.75h-2.75zM5.5 30.25h2.75v2.75h-2.75zM16.5 30.25h2.75v2.75h-2.75zM46.75 30.25h2.75v2.75h-2.75zM49.5 30.25h2.75v2.75h-2.75zM13.75 33h2.75v2.75h-2.75zM16.5 33h2.75v2.75h-2.75zM22 33h2.75v2.75h-2.75zM27.5 33h2.75v2.75h-2.75zM35.75 33h2.75v2.75h-2.75zM44 33h2.75v2.75h-2.75zM46.75 33h2.75v2.75h-2.75zM52.25 33h2.75v2.75h-2.75zM13.75 35.75h2.75v2.75h-2.75zM35.75 35.75h2.75v2.75h-2.75zM49.5 35.75h2.75v2.75h-2.75zM52.25 35.75h2.75v2.75h-2.75zM0 38.5h2.75v2.75h-2.75zM16.5 38.5h2.75v2.75h-2.75zM24.75 38.5h2.75v2.75h-2.75zM27.5 38.5h2.75v2.75h-2.75zM33 38.5h2.75v2.75h-2.75zM44 38.5h2.75v2.75h-2.75zM52.25 38.5h2.75v2.75h-2.75zM8.25 41.25h2.75v2.75h-2.75zM16.5 41.25h2.75v2.75h-2.75zM30.25 41.25h2.75v2.75h-2.75zM46.75 41.25h2.75v2.75h-2.75zM0 44h2.75v2.75h-2.75zM8.25 44h2.75v2.75h-2.75zM11 44h2.75v2.75h-2.75zM13.75 44h2.75v2.75h-2.75zM30.25 44h2.75v2.75h-2.75zM52.25 44h2.75v2.75h-2.75zM0 46.75h2.75v2.75h-2.75zM2.75 46.75h2.75v2.75h-2.75zM8.25 46.75h2.75v2.75h-2.75zM16.5 46.75h2.75v2.75h-2.75zM27.5 46.75h2.75v2.75h-2.75zM38.5 46.75h2.75v2.75h-2.75zM41.25 46.75h2.75v2.75h-2.75zM46.75 46.75h2.75v2.75h-2.75zM52.25 46.75h2.75v2.75h-2.75zM8.25 49.5h2.75v2.75h-2.75zM11 49.5h2.75v2.75h-2.75zM13.75 49.5h2.75v2.75h-2.75zM22 49.5h2.75v2.75h-2.75zM30.25 49.5h2.75v2.75h-2.75zM46.75 49.5h2.75v2.75h-2.75zM52.25 49.5h2.75v2.75h-2.75zM30.25 52.25h2.75v2.75h-2.75zM46.75 52.25h2.75v2.75h-2.75zM52.25 52.25h2.75v2.75h-2.75z" fill="#cccccc"/><path d="M5.5 0h2.75v2.75h-2.75zM8.25 0h2.75v2.75h-2.75zM19.25 0h2.75v2.75h-2.75zM22 0h2.75v2.75h-2.75zM27.5 0h2.75v2.75h-2.75zM33 0h2.75v2.75h-2.75zM35.75 0h2.75v2.75h-2.75zM38.5 0h2.75v2.75h-2.75zM46.75 0h2.75v2.75h-2.75zM49.5 0h2.75v2.75h-2.75zM52.25 0h2.75v2.75h-2.75zM0 2.75h2.75v2.75h-2.75zM13.75 2.75h2.75v2.75h-2.75zM16.5 2.75h2.75v2.75h-2.75zM27.5 2.75h2.75v2.75h-2.75zM30.25 2.75h2.75v2.75h-2.75zM35.75 2.75h2.75v2.75h-2.75zM44 2.75h2.75v2.75h-2.75zM49.5 2.75h2.75v2.75h-2.75zM0 5.5h2.75v2.75h-2.75zM5.5 5.5h2.75v2.75h-2.75zM8.25 5.5h2.75v2.75h-2.75zM13.75 5.5h2.75v2.75h-2.75zM22 5.5h2.75v2.75h-2.75zM27.5 5.5h2.75v2.75h-2.75zM33 5.5h2.75v2.75h-2.75zM38.5 5.5h2.75v2.75h-2.75zM41.25 5.5h2.75v2.75h-2.75zM44 5.5h2.75v2.75h-2.75zM49.5 5.5h2.75v2.75h-2.75zM19.25 8.25h2.75v2.75h-2.75zM24.75 8.25h2.75v2.75h-2.75zM44 8.25h2.75v2.75h-2.75zM52.25 8.25h2.75v2.75h-2.75zM0 11h2.75v2.75h-2.75zM2.75 11h2.75v2.75h-2.75zM8.25 11h2.75v2.75h-2.75zM16.5 11h2.75v2.75h-2.75zM19.25 11h2.75v2.75h-2.75zM24.75 11h2.75v2.75h-2.75zM33 11h2.75v2.75h-2.75zM0 13.75h2.75v2.75h-2.75zM11 13.75h2.75v2.75h-2.75zM16.5 13.75h2.75v2.75h-2.75zM22 13.75h2.75v2.75h-2.75zM44 13.75h2.75v2.75h-2.75zM49.5 13.75h2.75v2.75h-2.75zM52.25 13.75h2.75v2.75h-2.75zM2.75 16.5h2.75v2.75h-2.75zM5.5 16.5h2.75v2.75h-2.75zM13.75 16.5h2.75v2.75h-2.75zM16.5 16.5h2.75v2.75h-2.75zM19.25 16.5h2.75v2.75h-2.75zM33 16.5h2.75v2.75h-2.75zM38.5 16.5h2.75v2.75h-2.75zM44 16.5h2.75v2.75h-2.75zM46.75 16.5h2.75v2.75h-2.75zM49.5 16.5h2.75v2.75h-2.75zM0 19.25h2.75v2.75h-2.75zM8.25 19.25h2.75v2.75h-2.75zM27.5 19.25h2.75v2.75h-2.75zM38.5 19.25h2.75v2.75h-2.75zM8.25 22h2.75v2.75h-2.75zM11 22h2.75v2.75h-2.75zM16.5 22h2.75v2.75h-2.75zM19.25 22h2.75v2.75h-2.75zM22 22h2.75v2.75h-2.75zM27.5 22h2.75v2.75h-2.75zM30.25 22h2.75v2.75h-2.75zM35.75 22h2.75v2.75h-2.75zM41.25 22h2.75v2.75h-2.75zM44 22h2.75v2.75h-2.75zM49.5 22h2.75v2.75h-2.75zM2.75 24.75h2.75v2.75h-2.75zM8.25 24.75h2.75v2.75h-2.75zM11 24.75h2.75v2.75h-2.75zM33 24.75h2.75v2.75h-2.75zM35.75 24.75h2.75v2.75h-2.75zM49.5 24.75h2.75v2.75h-2.75zM52.25 24.75h2.75v2.75h-2.75zM2.75 27.5h2.75v2.75h-2.75zM13.75 27.5h2.75v2.75h-2.75zM22 27.5h2.75v2.75h-2.75zM30.25 27.5h2.75v2.75h-2.75zM33 27.5h2.75v2.75h-2.75zM35.75 27.5h2.75v2.75h-2.75zM38.5 27.5h2.75v2.75h-2.75zM46.75 27.5h2.75v2.75h-2.75zM0 30.25h2.75v2.75h-2.75zM11 30.25h2.75v2.75h-2.75zM24.75 30.25h2.75v2.75h-2.75zM27.5 30.25h2.75v2.75h-2.75zM30.25 30.25h2.75v2.75h-2.75zM33 30.25h2.75v2.75h-2.75zM41.25 30.25h2.75v2.75h-2.75zM44 30.25h2.75v2.75h-2.75zM52.25 30.25h2.75v2.75h-2.75zM0 33h2.75v2.75h-2.75zM2.75 33h2.75v2.75h-2.75zM5.5 33h2.75v2.75h-2.75zM11 33h2.75v2.75h-2.75zM19.25 33h2.75v2.75h-2.75zM30.25 33h2.75v2.75h-2.75zM33 33h2.75v2.75h-2.75zM41.25 33h2.75v2.75h-2.75zM2.75 35.75h2.75v2.75h-2.75zM5.5 35.75h2.75v2.75h-2.75zM8.25 35.75h2.75v2.75h-2.75zM11 35.75h2.75v2.75h-2.75zM16.5 35.75h2.75v2.75h-2.75zM19.25 35.75h2.75v2.75h-2.75zM24.75 35.75h2.75v2.75h-2.75zM30.25 35.75h2.75v2.75h-2.75zM33 35.75h2.75v2.75h-2.75zM38.5 35.75h2.75v2.75h-2.75zM41.25 35.75h2.75v2.75h-2.75zM44 35.75h2.75v2.75h-2.75zM46.75 35.75h2.75v2.75h-2.75zM2.75 38.5h2.75v2.75h-2.75zM8.25 38.5h2.75v2.75h-2.75zM22 38.5h2.75v2.75h-2.75zM30.25 38.5h2.75v2.75h-2.75zM38.5 38.5h2.75v2.75h-2.75zM46.75 38.5h2.75v2.75h-2.75zM49.5 38.5h2.75v2.75h-2.75zM0 41.25h2.75v2.75h-2.75zM2.75 41.25h2.75v2.75h-2.75zM5.5 41.25h2.75v2.75h-2.75zM11 41.25h2.75v2.75h-2.75zM13.75 41.25h2.75v2.75h-2.75zM22 41.25h2.75v2.75h-2.75zM24.75 41.25h2.75v2.75h-2.75zM38.5 41.25h2.75v2.75h-2.75zM41.25 41.25h2.75v2.75h-2.75zM44 41.25h2.75v2.75h-2.75zM52.25 41.25h2.75v2.75h-2.75zM2.75 44h2.75v2.75h-2.75zM16.5 44h2.75v2.75h-2.75zM22 44h2.75v2.75h-2.75zM24.75 44h2.75v2.75h-2.75zM27.5 44h2.75v2.75h-2.75zM33 44h2.75v2.75h-2.75zM35.75 44h2.75v2.75h-2.75zM38.5 44h2.75v2.75h-2.75zM41.25 44h2.75v2.75h-2.75zM44 44h2.75v2.75h-2.75zM46.75 44h2.75v2.75h-2.75zM49.5 44h2.75v2.75h-2.75zM5.5 46.75h2.75v2.75h-2.75zM24.75 46.75h2.75v2.75h-2.75zM35.75 46.75h2.75v2.75h-2.75zM44 46.75h2.75v2.75h-2.75zM49.5 46.75h2.75v2.75h-2.75zM0 49.5h2.75v2.75h-2.75zM2.75 49.5h2.75v2.75h-2.75zM19.25 49.5h2.75v2.75h-2.75zM24.75 49.5h2.75v2.75h-2.75zM33 49.5h2.75v2.75h-2.75zM38.5 49.5h2.75v2.75h-2.75zM44 49.5h2.75v2.75h-2.75zM5.5 52.25h2.75v2.75h-2.75zM8.25 52.25h2.75v2.75h-2.75zM13.75 52.25h2.75v2.75h-2.75zM16.5 52.25h2.75v2.75h-2.75zM19.25 52.25h2.75v2.75h-2.75zM22 52.25h2.75v2.75h-2.75zM33 52.25h2.75v2.75h-2.75zM38.5 52.25h2.75v2.75h-2.75zM41.25 52.25h2.75v2.75h-2.75zM49.5 52.25h2.75v2.75h-2.75z" fill="#dddddd"/><path d="M24.75 0h2.75v2.75h-2.75zM30.25 0h2.75v2.75h-2.75zM11 2.75h2.75v2.75h-2.75zM52.25 2.75h2.75v2.75h-2.75zM11 5.5h2.75v2.75h-2.75zM24.75 5.5h2.75v2.75h-2.75zM30.25 5.5h2.75v2.75h-2.75zM11 8.25h2.75v2.75h-2.75zM16.5 8.25h2.75v2.75h-2.75zM22 8.25h2.75v2.75h-2.75zM33 8.25h2.75v2.75h-2.75zM49.5 8.25h2.75v2.75h-2.75zM35.75 11h2.75v2.75h-2.75zM38.5 11h2.75v2.75h-2.75zM46.75 11h2.75v2.75h-2.75zM49.5 11h2.75v2.75h-2.75zM19.25 13.75h2.75v2.75h-2.75zM33 13.75h2.75v2.75h-2.75zM35.75 13.75h2.75v2.75h-2.75zM41.25 13.75h2.75v2.75h-2.75zM8.25 16.5h2.75v2.75h-2.75zM24.75 16.5h2.75v2.75h-2.75zM27.5 16.5h2.75v2.75h-2.75zM30.25 16.5h2.75v2.75h-2.75zM35.75 16.5h2.75v2.75h-2.75zM41.25 16.5h2.75v2.75h-2.75zM16.5 19.25h2.75v2.75h-2.75zM19.25 19.25h2.75v2.75h-2.75zM22 19.25h2.75v2.75h-2.75zM41.25 19.25h2.75v2.75h-2.75zM52.25 19.25h2.75v2.75h-2.75zM2.75 22h2.75v2.75h-2.75zM13.75 22h2.75v2.75h-2.75zM0 24.75h2.75v2.75h-2.75zM5.5 24.75h2.75v2.75h-2.75zM13.75 24.75h2.75v2.75h-2.75zM16.5 24.75h2.75v2.75h-2.75zM19.25 24.75h2.75v2.75h-2.75zM22 24.75h2.75v2.75h-2.75zM24.75 24.75h2.75v2.75h-2.75zM30.25 24.75h2.75v2.75h-2.75zM38.5 24.75h2.75v2.75h-2.75zM44 24.75h2.75v2.75h-2.75zM0 27.5h2.75v2.75h-2.75zM5.5 27.5h2.75v2.75h-2.75zM8.25 27.5h2.75v2.75h-2.75zM8.25 30.25h2.75v2.75h-2.75zM19.25 30.25h2.75v2.75h-2.75zM38.5 30.25h2.75v2.75h-2.75zM8.25 33h2.75v2.75h-2.75zM24.75 33h2.75v2.75h-2.75zM38.5 33h2.75v2.75h-2.75zM0 35.75h2.75v2.75h-2.75zM22 35.75h2.75v2.75h-2.75zM27.5 35.75h2.75v2.75h-2.75zM5.5 38.5h2.75v2.75h-2.75zM11 38.5h2.75v2.75h-2.75zM13.75 38.5h2.75v2.75h-2.75zM19.25 38.5h2.75v2.75h-2.75zM41.25 38.5h2.75v2.75h-2.75zM33 41.25h2.75v2.75h-2.75zM35.75 41.25h2.75v2.75h-2.75zM49.5 41.25h2.75v2.75h-2.75zM19.25 44h2.75v2.75h-2.75zM11 46.75h2.75v2.75h-2.75zM13.75 46.75h2.75v2.75h-2.75zM19.25 46.75h2.75v2.75h-2.75zM30.25 46.75h2.75v2.75h-2.75zM33 46.75h2.75v2.75h-2.75zM41.25 49.5h2.75v2.75h-2.75zM0 52.25h2.75v2.75h-2.75zM2.75 52.25h2.75v2.75h-2.75zM24.75 52.25h2.75v2.75h-2.75zM27.5 52.25h2.75v2.75h-2.75zM35.75 52.25h2.75v2.75h-2.75z" fill="#eeeeee"/><path d="M0 0h2.75v2.75h-2.75zM13.75 8.25h2.75v2.75h-2.75zM11 11h2.75v2.75h-2.75zM13.75 19.25h2.75v2.75h-2.75zM46.75 19.25h2.75v2.75h-2.75zM24.75 22h2.75v2.75h-2.75zM46.75 24.75h2.75v2.75h-2.75zM22 30.25h2.75v2.75h-2.75zM35.75 38.5h2.75v2.75h-2.75zM27.5 41.25h2.75v2.75h-2.75zM49.5 49.5h2.75v2.75h-2.75z" fill="#ffffff"/></pattern><clipPath id="cp1"><rect x="70.0" y="532.7" width="148.6" height="147.5"/></clipPath><radialGradient id="g1a"><stop offset="0" stop-color="#000" stop-opacity="0.55"/><stop offset="0.45" stop-color="#000" stop-opacity="0.38"/><stop offset="0.75" stop-color="#000" stop-opacity="0.15"/><stop offset="1" stop-color="#000" stop-opacity="0"/></radialGradient><radialGradient id="g1b"><stop offset="0" stop-color="#000" stop-opacity="0.9"/><stop offset="0.6" stop-color="#000" stop-opacity="0.6"/><stop offset="1" stop-color="#000" stop-opacity="0"/></radialGradient><radialGradient id="g1c"><stop offset="0" stop-color="#000" stop-opacity="0.75"/><stop offset="0.6" stop-color="#000" stop-opacity="0.5"/><stop offset="1" stop-color="#000" stop-opacity="0"/></radialGradient><clipPath id="cp3"><rect x="440.8" y="532.6" width="147.59999999999997" height="147.60000000000002"/></clipPath><radialGradient id="g3a"><stop offset="0" stop-color="#000" stop-opacity="0.6"/><stop offset="0.45" stop-color="#000" stop-opacity="0.42"/><stop offset="0.75" stop-color="#000" stop-opacity="0.15"/><stop offset="1" stop-color="#000" stop-opacity="0"/></radialGradient><radialGradient id="g3b"><stop offset="0" stop-color="#000" stop-opacity="0.95"/><stop offset="0.5" stop-color="#000" stop-opacity="0.7"/><stop offset="1" stop-color="#000" stop-opacity="0"/></radialGradient></defs>
<text x="70.0" y="14.3" font-family="Liberation Mono" font-size="13" fill="#000" text-anchor="start" >EW: 4.6±1.5</text>
<text x="155.5" y="14.3" font-family="Liberation Sans" font-size="14" fill="#000" text-anchor="start" font-style="italic">Å</text>
<text x="182.0" y="14.3" font-family="Liberation Mono" font-size="13" fill="#000" text-anchor="start" >P(LAE)/P(OII):</text>
<text x="300.0" y="14.3" font-family="Liberation Sans" font-size="14" fill="#000" text-anchor="start"  textLength="35.5" lengthAdjust="spacingAndGlyphs">0.027</text>
<text x="342.0" y="8.6" font-family="Liberation Sans" font-size="9.2" fill="#000" text-anchor="start"  textLength="25.0" lengthAdjust="spacingAndGlyphs">0.038</text>
<text x="342.0" y="17.6" font-family="Liberation Sans" font-size="9.2" fill="#000" text-anchor="start"  textLength="25.0" lengthAdjust="spacingAndGlyphs">0.019</text>
<text x="383.0" y="14.3" font-family="Liberation Mono" font-size="13" fill="#000" text-anchor="start" >P(Ly</text>
<text x="414.5" y="14.3" font-family="Liberation Sans" font-size="14" fill="#000" text-anchor="start" font-style="italic">α</text>
<text x="422.5" y="14.3" font-family="Liberation Mono" font-size="13" fill="#000" text-anchor="start" >): 0.001  Q(z):</text>
<text x="548.0" y="14.3" font-family="Liberation Sans" font-size="14" fill="#000" text-anchor="start"  textLength="28.0" lengthAdjust="spacingAndGlyphs">0.23</text>
<text x="581.0" y="8.6" font-family="Liberation Sans" font-size="9.2" fill="#000" text-anchor="start"  textLength="19.0" lengthAdjust="spacingAndGlyphs">0.23</text>
<text x="581.0" y="17.6" font-family="Liberation Sans" font-size="9.2" fill="#000" text-anchor="start"  textLength="19.0" lengthAdjust="spacingAndGlyphs">0.23</text>
<text x="616.0" y="14.3" font-family="Liberation Mono" font-size="13" fill="#000" text-anchor="start" >z:</text>
<text x="639.5" y="14.3" font-family="Liberation Sans" font-size="14" fill="#000" text-anchor="start"  textLength="43.0" lengthAdjust="spacingAndGlyphs">0.3019</text>
<text x="690.0" y="8.6" font-family="Liberation Sans" font-size="9.2" fill="#000" text-anchor="start"  textLength="31.0" lengthAdjust="spacingAndGlyphs">0.3019</text>
<text x="690.0" y="17.6" font-family="Liberation Sans" font-size="9.2" fill="#000" text-anchor="start"  textLength="31.0" lengthAdjust="spacingAndGlyphs">0.3019</text>
<text x="729.0" y="14.3" font-family="Liberation Mono" font-size="13" fill="#000" text-anchor="start" >OII</text>
<text x="1057.0" y="16.7" font-family="Liberation Mono" font-size="13" fill="#000" text-anchor="start"  textLength="273.0" lengthAdjust="spacingAndGlyphs">2025-01-06 07:39:52  Version 1.22.3</text>
<text x="70.0" y="42.8" font-family="Liberation Mono" font-size="13" fill="#000" text-anchor="start" >ID: 4018345696 (4018345696.pdf)</text>
<text x="70.0" y="57.0" font-family="Liberation Mono" font-size="13" fill="#000" text-anchor="start" >Obs: 20220302v018_4018345696</text>
<text x="70.0" y="71.7" font-family="Liberation Mono" font-size="13" fill="#000" text-anchor="start" >Primary Spec_Slot_IFU_AMP: 508_059_080_RU</text>
<text x="70.0" y="86.7" font-family="Liberation Mono" font-size="13" fill="#000" text-anchor="start" >F=1.7"  T=0.207  N=1.27  A=0.92  g=24.8</text>
<text x="70.0" y="101.6" font-family="Liberation Mono" font-size="13" fill="#000" text-anchor="start" >RA,Dec (182.270416,55.585056)</text>
<text x="70.0" y="118.4" font-family="Liberation Sans" font-size="14" fill="#000" text-anchor="start" font-style="italic">λ</text>
<text x="84.5" y="118.4" font-family="Liberation Mono" font-size="13" fill="#000" text-anchor="start" >=</text>
<text x="99.8" y="118.4" font-family="Liberation Mono" font-size="13" fill="#000" text-anchor="start"  textLength="51.0" lengthAdjust="spacingAndGlyphs">4853.27</text>
<text x="151.8" y="118.4" font-family="Liberation Sans" font-size="14" fill="#000" text-anchor="start" font-style="italic">Å</text>
<text x="180.5" y="118.4" font-family="Liberation Sans" font-size="14" fill="#000" text-anchor="start" font-style="italic">σ</text>
<text x="195.0" y="118.4" font-family="Liberation Mono" font-size="13" fill="#000" text-anchor="start" >=</text>
<text x="210.0" y="118.4" font-family="Liberation Mono" font-size="13" fill="#000" text-anchor="start"  textLength="88.5" lengthAdjust="spacingAndGlyphs">3.04(±0.30)</text>
<text x="298.8" y="118.4" font-family="Liberation Sans" font-size="14" fill="#000" text-anchor="start" font-style="italic">Å</text>
<text x="70.0" y="133.6" font-family="Liberation Mono" font-size="13" fill="#000" text-anchor="start"  textLength="205.9" lengthAdjust="spacingAndGlyphs">LineFlux = 1.80(±0.16)e-16</text>
<text x="70.0" y="148.2" font-family="Liberation Mono" font-size="13" fill="#000" text-anchor="start"  textLength="198.0" lengthAdjust="spacingAndGlyphs">Cont(n) = 8.30(±0.45)e-18</text>
<text x="70.0" y="166.2" font-family="Liberation Mono" font-size="13" fill="#000" text-anchor="start"  textLength="289.1" lengthAdjust="spacingAndGlyphs">Cont(w) = 9.10(±0.10)e-18 (gmag 21.83</text>
<text x="363.5" y="160.5" font-family="Liberation Sans" font-size="9.2" fill="#000" text-anchor="start"  textLength="25.5" lengthAdjust="spacingAndGlyphs">21.84</text>
<text x="363.5" y="169.5" font-family="Liberation Sans" font-size="9.2" fill="#000" text-anchor="start"  textLength="25.5" lengthAdjust="spacingAndGlyphs">21.81</text>
<text x="388.5" y="166.2" font-family="Liberation Mono" font-size="13" fill="#000" text-anchor="start" >)</text>
<text x="70.0" y="184.4" font-family="Liberation Mono" font-size="13" fill="#000" text-anchor="start"  textLength="270.3" lengthAdjust="spacingAndGlyphs">EWr = 5.50(±0.57) (w: 5.00(±0.45))</text>
<text x="341.0" y="184.4" font-family="Liberation Sans" font-size="14" fill="#000" text-anchor="start" font-style="italic">Å</text>
<text x="70.0" y="202.0" font-family="Liberation Mono" font-size="13" fill="#000" text-anchor="start"  textLength="125.8" lengthAdjust="spacingAndGlyphs">S/N = 10.0(±0.5)</text>
<text x="213.0" y="202.0" font-family="Liberation Sans" font-size="14" fill="#000" text-anchor="start" font-style="italic">χ</text>
<text x="222.3" y="196.0" font-family="Liberation Sans" font-size="9.2" fill="#000" text-anchor="start" >2</text>
<text x="235.0" y="202.0" font-family="Liberation Mono" font-size="13" fill="#000" text-anchor="start"  textLength="88.0" lengthAdjust="spacingAndGlyphs">= 1.0(±0.2)</text>
<text x="70.0" y="219.0" font-family="Liberation Mono" font-size="13" fill="#000" text-anchor="start" >P(LAE)/P(OII):</text>
<text x="187.0" y="219.0" font-family="Liberation Sans" font-size="14" fill="#000" text-anchor="start"  textLength="35.5" lengthAdjust="spacingAndGlyphs">0.029</text>
<text x="228.5" y="213.3" font-family="Liberation Sans" font-size="9.2" fill="#000" text-anchor="start"  textLength="24.5" lengthAdjust="spacingAndGlyphs">0.033</text>
<text x="228.5" y="222.3" font-family="Liberation Sans" font-size="9.2" fill="#000" text-anchor="start"  textLength="24.5" lengthAdjust="spacingAndGlyphs">0.025</text>
<text x="264.0" y="219.0" font-family="Liberation Mono" font-size="13" fill="#000" text-anchor="start" >(w:</text>
<text x="293.5" y="219.0" font-family="Liberation Sans" font-size="14" fill="#000" text-anchor="start"  textLength="35.5" lengthAdjust="spacingAndGlyphs">0.026</text>
<text x="335.4" y="213.3" font-family="Liberation Sans" font-size="9.2" fill="#000" text-anchor="start"  textLength="24.5" lengthAdjust="spacingAndGlyphs">0.031</text>
<text x="335.4" y="222.3" font-family="Liberation Sans" font-size="9.2" fill="#000" text-anchor="start"  textLength="24.5" lengthAdjust="spacingAndGlyphs">0.023</text>
<text x="361.5" y="219.0" font-family="Liberation Mono" font-size="13" fill="#000" text-anchor="start" >)</text>
<text x="70.0" y="236.0" font-family="Liberation Mono" font-size="13" fill="#000" text-anchor="start"  textLength="234.2" lengthAdjust="spacingAndGlyphs">LyA z = 2.9923  OII z = 0.3019</text>
<text x="70.0" y="498.9" font-family="Liberation Mono" font-size="13" fill="#000" text-anchor="start" >HSC-DEX : Possible Matches = 1 (within +/- 3")  P(LAE)/P(OII):</text>
<text x="561.5" y="498.9" font-family="Liberation Sans" font-size="14" fill="#000" text-anchor="start"  textLength="35.5" lengthAdjust="spacingAndGlyphs">0.016</text>
<text x="603.3" y="493.2" font-family="Liberation Sans" font-size="9.2" fill="#000" text-anchor="start"  textLength="25.0" lengthAdjust="spacingAndGlyphs">0.019</text>
<text x="603.3" y="502.2" font-family="Liberation Sans" font-size="9.2" fill="#000" text-anchor="start"  textLength="25.0" lengthAdjust="spacingAndGlyphs">0.013</text>
<text x="637.3" y="498.9" font-family="Liberation Mono" font-size="13" fill="#000" text-anchor="start" >(r)</text>
<text x="70.0" y="786.3" font-family="Liberation Mono" font-size="13" fill="#000" text-anchor="start" >Separation</text>
<text x="70.0" y="800.9" font-family="Liberation Mono" font-size="13" fill="#000" text-anchor="start" >Match score</text>
<text x="70.0" y="815.6" font-family="Liberation Mono" font-size="13" fill="#000" text-anchor="start" >RA, Dec</text>
<text x="70.0" y="830.2" font-family="Liberation Mono" font-size="13" fill="#000" text-anchor="start" >Spec z</text>
<text x="70.0" y="844.9" font-family="Liberation Mono" font-size="13" fill="#000" text-anchor="start" >Photo z</text>
<text x="70.0" y="859.5" font-family="Liberation Mono" font-size="13" fill="#000" text-anchor="start" >Est LyA rest-EW</text>
<text x="70.0" y="874.2" font-family="Liberation Mono" font-size="13" fill="#000" text-anchor="start" >mag</text>
<text x="70.0" y="888.8" font-family="Liberation Mono" font-size="13" fill="#000" text-anchor="start" >P(LAE)/P(OII)</text>
<text x="287.0" y="779.3" font-family="Liberation Mono" font-size="13" fill="#0000ff" text-anchor="start" >0.115942"</text>
<text x="287.0" y="794.0" font-family="Liberation Mono" font-size="13" fill="#0000ff" text-anchor="start" >1.000</text>
<text x="287.0" y="808.4" font-family="Liberation Mono" font-size="13" fill="#0000ff" text-anchor="start" >182.270434, 55.585087</text>
<text x="287.0" y="823.4" font-family="Liberation Mono" font-size="13" fill="#0000ff" text-anchor="start" >N/A</text>
<text x="287.0" y="838.1" font-family="Liberation Mono" font-size="13" fill="#0000ff" text-anchor="start" >N/A</text>
<text x="287.0" y="854.2" font-family="Liberation Mono" font-size="13" fill="#0000ff" text-anchor="start" >2.50(±0.22)</text>
<text x="373.8" y="854.2" font-family="Liberation Sans" font-size="14" fill="#0000ff" text-anchor="start" font-style="italic">Å</text>
<text x="287.0" y="870.4" font-family="Liberation Mono" font-size="13" fill="#0000ff" text-anchor="start" >20.53(20.52,20.54)R</text>
<text x="287.0" y="886.6" font-family="Liberation Sans" font-size="14" fill="#0000ff" text-anchor="start"  textLength="35.5" lengthAdjust="spacingAndGlyphs">0.016</text>
<text x="328.0" y="880.9" font-family="Liberation Sans" font-size="9.2" fill="#0000ff" text-anchor="start"  textLength="24.5" lengthAdjust="spacingAndGlyphs">0.019</text>
<text x="328.0" y="889.9" font-family="Liberation Sans" font-size="9.2" fill="#0000ff" text-anchor="start"  textLength="24.5" lengthAdjust="spacingAndGlyphs">0.013</text>
<text x="938.0" y="821.0" font-family="Liberation Mono" font-size="13" fill="#000" text-anchor="start" >Phot z plot not available.</text>
<text x="515.2" y="42.3" font-family="Liberation Sans" font-size="8.6" fill="#000" text-anchor="middle" >2D Spec</text>
<text x="609.5" y="42.3" font-family="Liberation Sans" font-size="8.6" fill="#000" text-anchor="middle" >Pixel Flat</text>
<text x="701.0" y="42.3" font-family="Liberation Sans" font-size="8.6" fill="#000" text-anchor="middle" >Smoothed</text>
<rect x="466.10" y="46.00" width="282.50" height="39.70" fill="#fff" stroke="none" stroke-width="1" />
<rect x="471.60" y="48.00" width="86.70" height="35.70" fill="url(#pspec)" stroke="none" stroke-width="1" />
<rect x="657.30" y="48.00" width="88.70" height="35.70" fill="#999" stroke="none" stroke-width="1" filter="url(#nsmooth)"/>
<rect x="471.60" y="59.85" width="86.70" height="14.00" fill="url(#hband)" stroke="none" stroke-width="1" />
<rect x="657.30" y="59.85" width="88.70" height="14.00" fill="url(#hband)" stroke="none" stroke-width="1" />
<ellipse cx="515" cy="66.35" rx="4.2" ry="6" fill="url(#blob)" opacity="0.9"/>
<ellipse cx="701" cy="66.85" rx="5.5" ry="6.5" fill="url(#blob)"/>
<rect x="467.30" y="47.10" width="280.10" height="37.50" fill="none" stroke="#000" stroke-width="2.4" />
<text x="748.8" y="61.5" font-family="Liberation Sans" font-size="8.8" fill="#000" text-anchor="start" >Weighted</text>
<text x="748.8" y="70.5" font-family="Liberation Sans" font-size="8.8" fill="#000" text-anchor="start" >Sum</text>
<rect x="466.10" y="93.90" width="282.50" height="39.30" fill="#fff" stroke="none" stroke-width="1" />
<rect x="469.30" y="95.90" width="90.70" height="35.30" fill="url(#pspec2)" stroke="none" stroke-width="1" />
<rect x="564.20" y="95.90" width="89.50" height="35.30" fill="#7f7f7f" stroke="none" stroke-width="1" filter="url(#nflat)"/>
<rect x="657.30" y="95.90" width="88.70" height="35.30" fill="#999" stroke="none" stroke-width="1" filter="url(#nsmooth2)"/>
<rect x="467.30" y="95.00" width="280.10" height="37.10" fill="none" stroke="#0000ff" stroke-width="2.4" />
<rect x="469.30" y="107.55" width="90.70" height="14.00" fill="url(#hband)" stroke="none" stroke-width="1" />
<rect x="657.30" y="107.55" width="88.70" height="14.00" fill="url(#hband)" stroke="none" stroke-width="1" />
<ellipse cx="515" cy="114.05" rx="4.5" ry="5.5" fill="url(#blob)" opacity="0.8"/>
<ellipse cx="701" cy="115.55" rx="5" ry="6" fill="url(#blob)"/>
<text x="446.5" y="106.3" font-family="Liberation Sans" font-size="8.6" fill="#000" text-anchor="start" >0.30</text>
<text x="446.5" y="114.9" font-family="Liberation Sans" font-size="8.6" fill="#000" text-anchor="start" >1.44</text>
<text x="446.5" y="123.5" font-family="Liberation Sans" font-size="8.6" fill="#000" text-anchor="start" >421</text>
<text x="750.8" y="99.8" font-family="Liberation Sans" font-size="6.2" fill="#000" text-anchor="start" >0.52"</text>
<text x="750.8" y="107.2" font-family="Liberation Sans" font-size="6.2" fill="#000" text-anchor="start" >(692, 263)</text>
<text x="750.8" y="114.5" font-family="Liberation Sans" font-size="6.2" fill="#000" text-anchor="start" >20220302</text>
<text x="750.8" y="121.9" font-family="Liberation Sans" font-size="6.2" fill="#000" text-anchor="start" >v018_03</text>
<text x="750.8" y="129.2" font-family="Liberation Sans" font-size="6.2" fill="#000" text-anchor="start" >508_RU_028</text>
<rect x="466.10" y="133.40" width="282.50" height="40.00" fill="#fff" stroke="none" stroke-width="1" />
<rect x="469.30" y="135.40" width="90.70" height="36.00" fill="url(#pspec)" stroke="none" stroke-width="1" />
<rect x="564.20" y="135.40" width="89.50" height="36.00" fill="#7f7f7f" stroke="none" stroke-width="1" filter="url(#nflat)"/>
<rect x="657.30" y="135.40" width="88.70" height="36.00" fill="#999" stroke="none" stroke-width="1" filter="url(#nsmooth3)"/>
<rect x="467.30" y="134.50" width="280.10" height="37.80" fill="none" stroke="#00ff00" stroke-width="2.4" />
<rect x="469.30" y="147.40" width="90.70" height="14.00" fill="url(#hband)" stroke="none" stroke-width="1" />
<rect x="657.30" y="147.40" width="88.70" height="14.00" fill="url(#hband)" stroke="none" stroke-width="1" />
<ellipse cx="702" cy="144.4" rx="6" ry="5" fill="url(#blob2)"/>
<ellipse cx="515" cy="156.4" rx="4" ry="4.5" fill="url(#blob)" opacity="0.7"/>
<ellipse cx="702" cy="160.4" rx="4.5" ry="5" fill="url(#blob)"/>
<text x="446.5" y="145.8" font-family="Liberation Sans" font-size="8.6" fill="#000" text-anchor="start" >0.18</text>
<text x="446.5" y="154.4" font-family="Liberation Sans" font-size="8.6" fill="#000" text-anchor="start" >1.25</text>
<text x="446.5" y="163.0" font-family="Liberation Sans" font-size="8.6" fill="#000" text-anchor="start" >441</text>
<text x="750.8" y="139.3" font-family="Liberation Sans" font-size="6.2" fill="#000" text-anchor="start" >1.05"</text>
<text x="750.8" y="146.7" font-family="Liberation Sans" font-size="6.2" fill="#000" text-anchor="start" >(696, 85)</text>
<text x="750.8" y="154.0" font-family="Liberation Sans" font-size="6.2" fill="#000" text-anchor="start" >20220302</text>
<text x="750.8" y="161.4" font-family="Liberation Sans" font-size="6.2" fill="#000" text-anchor="start" >v018_02</text>
<text x="750.8" y="168.7" font-family="Liberation Sans" font-size="6.2" fill="#000" text-anchor="start" >508_RU_008</text>
<rect x="466.10" y="173.40" width="282.50" height="39.80" fill="#fff" stroke="none" stroke-width="1" />
<rect x="469.30" y="175.40" width="90.70" height="35.80" fill="url(#pspec2)" stroke="none" stroke-width="1" />
<rect x="564.20" y="175.40" width="89.50" height="35.80" fill="#7f7f7f" stroke="none" stroke-width="1" filter="url(#nflat)"/>
<rect x="657.30" y="175.40" width="88.70" height="35.80" fill="#999" stroke="none" stroke-width="1" filter="url(#nsmooth4)"/>
<rect x="467.30" y="174.50" width="280.10" height="37.60" fill="none" stroke="#ffa500" stroke-width="2.4" />
<rect x="469.30" y="187.30" width="90.70" height="14.00" fill="url(#hband)" stroke="none" stroke-width="1" />
<rect x="657.30" y="187.30" width="88.70" height="14.00" fill="url(#hband)" stroke="none" stroke-width="1" />
<text x="446.5" y="185.8" font-family="Liberation Sans" font-size="8.6" fill="#000" text-anchor="start" >0.16</text>
<text x="446.5" y="194.4" font-family="Liberation Sans" font-size="8.6" fill="#000" text-anchor="start" >1.54</text>
<text x="446.5" y="203.0" font-family="Liberation Sans" font-size="8.6" fill="#000" text-anchor="start" >422</text>
<text x="750.8" y="179.3" font-family="Liberation Sans" font-size="6.2" fill="#000" text-anchor="start" >1.14"</text>
<text x="750.8" y="186.7" font-family="Liberation Sans" font-size="6.2" fill="#000" text-anchor="start" >(692, 254)</text>
<text x="750.8" y="194.0" font-family="Liberation Sans" font-size="6.2" fill="#000" text-anchor="start" >20220302</text>
<text x="750.8" y="201.4" font-family="Liberation Sans" font-size="6.2" fill="#000" text-anchor="start" >v018_01</text>
<text x="750.8" y="208.7" font-family="Liberation Sans" font-size="6.2" fill="#000" text-anchor="start" >508_RU_027</text>
<rect x="466.10" y="213.30" width="282.50" height="39.00" fill="#fff" stroke="none" stroke-width="1" />
<rect x="469.30" y="215.30" width="90.70" height="35.00" fill="url(#pspec)" stroke="none" stroke-width="1" />
<rect x="564.20" y="215.30" width="89.50" height="35.00" fill="#7f7f7f" stroke="none" stroke-width="1" filter="url(#nflat)"/>
<rect x="657.30" y="215.30" width="88.70" height="35.00" fill="#999" stroke="none" stroke-width="1" filter="url(#nsmooth5)"/>
<rect x="467.30" y="214.40" width="280.10" height="36.80" fill="none" stroke="#ff0000" stroke-width="2.4" />
<rect x="469.30" y="226.80" width="90.70" height="14.00" fill="url(#hband)" stroke="none" stroke-width="1" />
<rect x="657.30" y="226.80" width="88.70" height="14.00" fill="url(#hband)" stroke="none" stroke-width="1" />
<text x="446.5" y="225.7" font-family="Liberation Sans" font-size="8.6" fill="#000" text-anchor="start" >0.09</text>
<text x="446.5" y="234.3" font-family="Liberation Sans" font-size="8.6" fill="#000" text-anchor="start" >2.09</text>
<text x="446.5" y="242.9" font-family="Liberation Sans" font-size="8.6" fill="#000" text-anchor="start" >441</text>
<text x="750.8" y="219.2" font-family="Liberation Sans" font-size="6.2" fill="#000" text-anchor="start" >1.49"</text>
<text x="750.8" y="226.6" font-family="Liberation Sans" font-size="6.2" fill="#000" text-anchor="start" >(696, 85)</text>
<text x="750.8" y="233.9" font-family="Liberation Sans" font-size="6.2" fill="#000" text-anchor="start" >20220302</text>
<text x="750.8" y="241.2" font-family="Liberation Sans" font-size="6.2" fill="#000" text-anchor="start" >v018_01</text>
<text x="750.8" y="248.6" font-family="Liberation Sans" font-size="6.2" fill="#000" text-anchor="start" >508_RU_008</text>
<text x="865.5" y="47.5" font-family="Liberation Sans" font-size="11.1" fill="#000" text-anchor="middle" >With Sky</text>
<text x="865.5" y="58.6" font-family="Liberation Sans" font-size="11.1" fill="#000" text-anchor="middle" >x, y: 692, 263</text>
<text x="966.2" y="47.5" font-family="Liberation Sans" font-size="11.1" fill="#000" text-anchor="middle" >Clean Image</text>
<text x="966.2" y="58.6" font-family="Liberation Sans" font-size="11.1" fill="#000" text-anchor="middle" >x, y: 692, 263</text>
<g clip-path="url(#skyclip)">
<rect x="830.90" y="63.30" width="69.20" height="171.50" fill="#777" stroke="none" stroke-width="1" filter="url(#nsky)"/>
<rect x="830.90" y="57.50" width="69.20" height="12.20" fill="url(#stripe)" stroke="none" stroke-width="1" />
<rect x="830.90" y="69.70" width="69.20" height="12.20" fill="url(#stripe)" stroke="none" stroke-width="1" />
<rect x="830.90" y="81.90" width="69.20" height="12.20" fill="url(#stripe)" stroke="none" stroke-width="1" />
<rect x="830.90" y="94.10" width="69.20" height="12.20" fill="url(#stripe)" stroke="none" stroke-width="1" />
<rect x="830.90" y="106.30" width="69.20" height="12.20" fill="url(#stripe)" stroke="none" stroke-width="1" />
<rect x="830.90" y="118.50" width="69.20" height="12.20" fill="url(#stripe)" stroke="none" stroke-width="1" />
<rect x="830.90" y="130.70" width="69.20" height="12.20" fill="url(#stripe)" stroke="none" stroke-width="1" />
<rect x="830.90" y="142.90" width="69.20" height="12.20" fill="url(#stripe)" stroke="none" stroke-width="1" />
<rect x="830.90" y="155.10" width="69.20" height="12.20" fill="url(#stripe)" stroke="none" stroke-width="1" />
<rect x="830.90" y="167.30" width="69.20" height="12.20" fill="url(#stripe)" stroke="none" stroke-width="1" />
<rect x="830.90" y="179.50" width="69.20" height="12.20" fill="url(#stripe)" stroke="none" stroke-width="1" />
<rect x="830.90" y="191.70" width="69.20" height="12.20" fill="url(#stripe)" stroke="none" stroke-width="1" />
<rect x="830.90" y="203.90" width="69.20" height="12.20" fill="url(#stripe)" stroke="none" stroke-width="1" />
<rect x="830.90" y="216.10" width="69.20" height="12.20" fill="url(#stripe)" stroke="none" stroke-width="1" />
<rect x="830.90" y="228.30" width="69.20" height="12.20" fill="url(#stripe)" stroke="none" stroke-width="1" />
<rect x="830.90" y="240.50" width="69.20" height="12.20" fill="url(#stripe)" stroke="none" stroke-width="1" />
</g>
<path d="M849 104 l7.5 3.3 -7.5 3.3z" fill="#000"/>
<rect x="832.10" y="64.50" width="66.80" height="169.10" fill="none" stroke="#0000ff" stroke-width="2.4" />
<rect x="931.30" y="63.30" width="69.90" height="171.50" fill="url(#pclean)" stroke="none" stroke-width="1" />
<rect x="931.30" y="143.00" width="69.90" height="14.00" fill="url(#hband2)" stroke="none" stroke-width="1" />
<ellipse cx="964.5" cy="150" rx="3.5" ry="3" fill="#000" opacity="0.75"/>
<ellipse cx="946" cy="104" rx="2" ry="1.6" fill="#000" opacity="0.6"/>
<rect x="932.50" y="64.50" width="67.50" height="169.10" fill="none" stroke="#0000ff" stroke-width="2.4" />
<rect x="1047.90" y="60.40" width="251.20" height="150.10" fill="#fff" stroke="#333" stroke-width="1" />
<line x1="1047.90" y1="200.90" x2="1299.10" y2="200.90" stroke="#555" stroke-width="1" />
<line x1="1049.90" y1="210.50" x2="1049.90" y2="214.00" stroke="#000" stroke-width="0.8" />
<text x="1049.9" y="225.1" font-family="Liberation Sans" font-size="10.2" fill="#000" text-anchor="middle" >4800</text>
<line x1="1096.45" y1="210.50" x2="1096.45" y2="214.00" stroke="#000" stroke-width="0.8" />
<text x="1096.5" y="225.1" font-family="Liberation Sans" font-size="10.2" fill="#000" text-anchor="middle" >4820</text>
<line x1="1143.00" y1="210.50" x2="1143.00" y2="214.00" stroke="#000" stroke-width="0.8" />
<text x="1143.0" y="225.1" font-family="Liberation Sans" font-size="10.2" fill="#000" text-anchor="middle" >4840</text>
<line x1="1189.55" y1="210.50" x2="1189.55" y2="214.00" stroke="#000" stroke-width="0.8" />
<text x="1189.6" y="225.1" font-family="Liberation Sans" font-size="10.2" fill="#000" text-anchor="middle" >4860</text>
<line x1="1236.10" y1="210.50" x2="1236.10" y2="214.00" stroke="#000" stroke-width="0.8" />
<text x="1236.1" y="225.1" font-family="Liberation Sans" font-size="10.2" fill="#000" text-anchor="middle" >4880</text>
<line x1="1282.65" y1="210.50" x2="1282.65" y2="214.00" stroke="#000" stroke-width="0.8" />
<text x="1282.7" y="225.1" font-family="Liberation Sans" font-size="10.2" fill="#000" text-anchor="middle" >4900</text>
<line x1="1044.40" y1="200.90" x2="1047.90" y2="200.90" stroke="#000" stroke-width="0.8" />
<text x="1041.9" y="204.6" font-family="Liberation Sans" font-size="10.2" fill="#000" text-anchor="end" >0</text>
<line x1="1044.40" y1="163.30" x2="1047.90" y2="163.30" stroke="#000" stroke-width="0.8" />
<text x="1041.9" y="167.0" font-family="Liberation Sans" font-size="10.2" fill="#000" text-anchor="end" >2</text>
<line x1="1044.40" y1="125.70" x2="1047.90" y2="125.70" stroke="#000" stroke-width="0.8" />
<text x="1041.9" y="129.4" font-family="Liberation Sans" font-size="10.2" fill="#000" text-anchor="end" >4</text>
<line x1="1044.40" y1="88.10" x2="1047.90" y2="88.10" stroke="#000" stroke-width="0.8" />
<text x="1041.9" y="91.8" font-family="Liberation Sans" font-size="10.2" fill="#000" text-anchor="end" >6</text>
<text x="1050.0" y="70.9" font-family="Liberation Sans" font-size="9.5" fill="#000" text-anchor="start" >e</text>
<text x="1056.5" y="67.2" font-family="Liberation Sans" font-size="6.5" fill="#000" text-anchor="start" >−17</text>
<text x="1067.5" y="70.9" font-family="Liberation Sans" font-size="9.5" fill="#000" text-anchor="start" >x2</text>
<text x="1078.3" y="70.9" font-family="Liberation Sans" font-size="9.5" fill="#000" text-anchor="start" font-style="italic">Å</text>
<path d="M1059.2 151.2V177.2M1063.9 164.4V190.4M1068.5 178.5V204.5M1073.2 156.9V182.9M1077.8 168.2V194.2M1082.5 146.5V172.5M1087.1 134.3V160.3M1091.8 153.1V179.1M1096.5 161.6V187.6M1101.1 155.9V181.9M1105.8 143.7V169.7M1110.4 148.4V174.4M1115.1 171.9V197.9M1119.7 155.0V181.0M1124.4 147.5V173.5M1129.0 176.6V202.6M1133.7 130.6V156.6M1138.3 157.8V183.8M1143.0 142.8V168.8M1147.7 147.5V173.5M1152.3 163.5V189.5M1157.0 154.1V180.1M1161.6 133.4V159.4M1166.3 103.3V129.3M1170.9 68.5V94.5M1175.6 74.2V100.2M1180.2 93.9V119.9M1184.9 109.9V135.9M1189.6 171.9V197.9M1194.2 171.0V197.0M1198.9 163.5V189.5M1203.5 151.2V177.2M1208.2 164.4V190.4M1212.8 153.1V179.1M1217.5 156.9V182.9M1222.1 148.4V174.4M1226.8 151.2V177.2M1231.4 163.5V189.5M1236.1 160.6V186.6M1240.8 171.9V197.9M1245.4 139.0V165.0M1250.1 164.4V190.4M1254.7 158.8V184.8M1259.4 163.5V189.5M1264.0 155.0V181.0M1268.7 138.1V164.1M1273.3 147.5V173.5M1278.0 151.2V177.2M1282.7 145.6V171.6M1287.3 144.7V170.7" fill="none" stroke="#1f77b4" stroke-width="1.5" />
<circle cx="1059.2" cy="164.2" r="1.9" fill="#1f77b4"/>
<circle cx="1063.9" cy="177.4" r="1.9" fill="#1f77b4"/>
<circle cx="1068.5" cy="191.5" r="1.9" fill="#1f77b4"/>
<circle cx="1073.2" cy="169.9" r="1.9" fill="#1f77b4"/>
<circle cx="1077.8" cy="181.2" r="1.9" fill="#1f77b4"/>
<circle cx="1082.5" cy="159.5" r="1.9" fill="#1f77b4"/>
<circle cx="1087.1" cy="147.3" r="1.9" fill="#1f77b4"/>
<circle cx="1091.8" cy="166.1" r="1.9" fill="#1f77b4"/>
<circle cx="1096.5" cy="174.6" r="1.9" fill="#1f77b4"/>
<circle cx="1101.1" cy="168.9" r="1.9" fill="#1f77b4"/>
<circle cx="1105.8" cy="156.7" r="1.9" fill="#1f77b4"/>
<circle cx="1110.4" cy="161.4" r="1.9" fill="#1f77b4"/>
<circle cx="1115.1" cy="184.9" r="1.9" fill="#1f77b4"/>
<circle cx="1119.7" cy="168.0" r="1.9" fill="#1f77b4"/>
<circle cx="1124.4" cy="160.5" r="1.9" fill="#1f77b4"/>
<circle cx="1129.0" cy="189.6" r="1.9" fill="#1f77b4"/>
<circle cx="1133.7" cy="143.6" r="1.9" fill="#1f77b4"/>
<circle cx="1138.3" cy="170.8" r="1.9" fill="#1f77b4"/>
<circle cx="1143.0" cy="155.8" r="1.9" fill="#1f77b4"/>
<circle cx="1147.7" cy="160.5" r="1.9" fill="#1f77b4"/>
<circle cx="1152.3" cy="176.5" r="1.9" fill="#1f77b4"/>
<circle cx="1157.0" cy="167.1" r="1.9" fill="#1f77b4"/>
<circle cx="1161.6" cy="146.4" r="1.9" fill="#1f77b4"/>
<circle cx="1166.3" cy="116.3" r="1.9" fill="#1f77b4"/>
<circle cx="1170.9" cy="81.5" r="1.9" fill="#1f77b4"/>
<circle cx="1175.6" cy="87.2" r="1.9" fill="#1f77b4"/>
<circle cx="1180.2" cy="106.9" r="1.9" fill="#1f77b4"/>
<circle cx="1184.9" cy="122.9" r="1.9" fill="#1f77b4"/>
<circle cx="1189.6" cy="184.9" r="1.9" fill="#1f77b4"/>
<circle cx="1194.2" cy="184.0" r="1.9" fill="#1f77b4"/>
<circle cx="1198.9" cy="176.5" r="1.9" fill="#1f77b4"/>
<circle cx="1203.5" cy="164.2" r="1.9" fill="#1f77b4"/>
<circle cx="1208.2" cy="177.4" r="1.9" fill="#1f77b4"/>
<circle cx="1212.8" cy="166.1" r="1.9" fill="#1f77b4"/>
<circle cx="1217.5" cy="169.9" r="1.9" fill="#1f77b4"/>
<circle cx="1222.1" cy="161.4" r="1.9" fill="#1f77b4"/>
<circle cx="1226.8" cy="164.2" r="1.9" fill="#1f77b4"/>
<circle cx="1231.4" cy="176.5" r="1.9" fill="#1f77b4"/>
<circle cx="1236.1" cy="173.6" r="1.9" fill="#1f77b4"/>
<circle cx="1240.8" cy="184.9" r="1.9" fill="#1f77b4"/>
<circle cx="1245.4" cy="152.0" r="1.9" fill="#1f77b4"/>
<circle cx="1250.1" cy="177.4" r="1.9" fill="#1f77b4"/>
<circle cx="1254.7" cy="171.8" r="1.9" fill="#1f77b4"/>
<circle cx="1259.4" cy="176.5" r="1.9" fill="#1f77b4"/>
<circle cx="1264.0" cy="168.0" r="1.9" fill="#1f77b4"/>
<circle cx="1268.7" cy="151.1" r="1.9" fill="#1f77b4"/>
<circle cx="1273.3" cy="160.5" r="1.9" fill="#1f77b4"/>
<circle cx="1278.0" cy="164.2" r="1.9" fill="#1f77b4"/>
<circle cx="1282.7" cy="158.6" r="1.9" fill="#1f77b4"/>
<circle cx="1287.3" cy="157.7" r="1.9" fill="#1f77b4"/>
<polyline points="1068.5,169.9 1069.7,169.9 1070.8,169.9 1072.0,169.9 1073.2,169.9 1074.3,169.9 1075.5,169.9 1076.7,169.9 1077.8,169.9 1079.0,169.9 1080.2,169.9 1081.3,169.9 1082.5,169.9 1083.6,169.9 1084.8,169.9 1086.0,169.9 1087.1,169.9 1088.3,169.9 1089.5,169.9 1090.6,169.9 1091.8,169.9 1093.0,169.9 1094.1,169.9 1095.3,169.9 1096.5,169.9 1097.6,169.9 1098.8,169.9 1099.9,169.9 1101.1,169.9 1102.3,169.9 1103.4,169.9 1104.6,169.9 1105.8,169.9 1106.9,169.9 1108.1,169.9 1109.3,169.9 1110.4,169.9 1111.6,169.9 1112.7,169.9 1113.9,169.9 1115.1,169.9 1116.2,169.9 1117.4,169.9 1118.6,169.9 1119.7,169.9 1120.9,169.9 1122.1,169.9 1123.2,169.9 1124.4,169.9 1125.5,169.9 1126.7,169.9 1127.9,169.9 1129.0,169.9 1130.2,169.9 1131.4,169.9 1132.5,169.9 1133.7,169.9 1134.9,169.9 1136.0,169.9 1137.2,169.9 1138.3,169.9 1139.5,169.9 1140.7,169.9 1141.8,169.9 1143.0,169.9 1144.2,169.9 1145.3,169.9 1146.5,169.8 1147.7,169.8 1148.8,169.7 1150.0,169.6 1151.1,169.4 1152.3,169.1 1153.5,168.5 1154.6,167.7 1155.8,166.6 1157.0,164.9 1158.1,162.6 1159.3,159.5 1160.5,155.5 1161.6,150.5 1162.8,144.4 1163.9,137.2 1165.1,129.3 1166.3,120.7 1167.4,111.8 1168.6,103.2 1169.8,95.4 1170.9,88.9 1172.1,84.2 1173.3,81.6 1174.4,81.3 1175.6,83.5 1176.7,87.8 1177.9,94.0 1179.1,101.6 1180.2,110.1 1181.4,118.9 1182.6,127.6 1183.7,135.7 1184.9,143.0 1186.1,149.3 1187.2,154.6 1188.4,158.8 1189.6,162.1 1190.7,164.5 1191.9,166.3 1193.0,167.5 1194.2,168.4 1195.4,169.0 1196.5,169.3 1197.7,169.6 1198.9,169.7 1200.0,169.8 1201.2,169.8 1202.4,169.9 1203.5,169.9 1204.7,169.9 1205.8,169.9 1207.0,169.9 1208.2,169.9 1209.3,169.9 1210.5,169.9 1211.7,169.9 1212.8,169.9 1214.0,169.9 1215.2,169.9 1216.3,169.9 1217.5,169.9 1218.6,169.9 1219.8,169.9 1221.0,169.9 1222.1,169.9 1223.3,169.9 1224.5,169.9 1225.6,169.9 1226.8,169.9 1228.0,169.9 1229.1,169.9 1230.3,169.9 1231.4,169.9 1232.6,169.9 1233.8,169.9 1234.9,169.9 1236.1,169.9 1237.3,169.9 1238.4,169.9 1239.6,169.9 1240.8,169.9 1241.9,169.9 1243.1,169.9 1244.2,169.9 1245.4,169.9 1246.6,169.9 1247.7,169.9 1248.9,169.9 1250.1,169.9 1251.2,169.9 1252.4,169.9 1253.6,169.9 1254.7,169.9 1255.9,169.9 1257.0,169.9 1258.2,169.9 1259.4,169.9 1260.5,169.9 1261.7,169.9 1262.9,169.9 1264.0,169.9 1265.2,169.9 1266.4,169.9 1267.5,169.9 1268.7,169.9 1269.8,169.9 1271.0,169.9 1272.2,169.9 1273.3,169.9 1274.5,169.9 1275.7,169.9 1276.8,169.9 1278.0,169.9 1279.2,169.9 1280.3,169.9 1281.5,169.9 1282.7,169.9" fill="none" stroke="#333" stroke-width="1.5"/>
<rect x="101.60" y="348.50" width="1197.80" height="83.70" fill="#fff" stroke="none" stroke-width="1" />
<g clip-path="url(#specclip)"><rect x="886.0" y="348.5" width="55.0" height="83.69999999999999" fill="#c8c000"/><path d="M95.1,383.5 L97.5,384.6 L99.9,383.6 L102.2,383.4 L104.6,384.8 L107.0,385.5 L109.3,386.1 L111.7,384.7 L114.1,386.0 L116.5,384.7 L118.8,384.9 L121.2,386.2 L123.6,384.9 L125.9,387.1 L128.3,385.5 L130.7,385.7 L133.0,386.6 L135.4,387.1 L137.8,386.4 L140.1,387.0 L142.5,387.9 L144.9,389.6 L147.2,390.5 L149.6,391.0 L152.0,390.5 L154.3,391.7 L156.7,392.4 L159.1,392.3 L161.4,393.6 L163.8,393.8 L166.2,392.4 L168.5,393.4 L170.9,393.1 L173.3,394.3 L175.6,394.3 L178.0,394.7 L180.4,393.7 L182.7,394.3 L185.1,394.0 L187.5,395.3 L189.8,394.9 L192.2,395.1 L194.6,395.6 L196.9,394.7 L199.3,396.4 L201.7,396.5 L204.0,395.5 L206.4,396.8 L208.8,395.4 L211.1,395.6 L213.5,397.2 L215.9,396.2 L218.2,397.0 L220.6,397.3 L223.0,396.9 L225.3,396.3 L227.7,397.0 L230.1,396.5 L232.4,397.5 L234.8,397.1 L237.2,397.0 L239.5,397.1 L241.9,398.3 L244.3,398.4 L246.6,397.3 L249.0,398.2 L251.4,397.5 L253.7,398.7 L256.1,398.8 L258.5,397.9 L260.9,398.4 L263.2,398.8 L265.6,398.7 L268.0,398.6 L270.3,399.2 L272.7,398.2 L275.1,399.1 L277.4,399.6 L279.8,399.4 L282.2,399.7 L284.5,400.0 L286.9,399.9 L289.3,399.1 L291.6,400.0 L294.0,400.2 L296.4,399.3 L298.7,400.0 L301.1,399.7 L303.5,400.7 L305.8,400.4 L308.2,400.1 L310.6,399.9 L312.9,400.7 L315.3,400.3 L317.7,401.2 L320.0,401.0 L322.4,401.3 L324.8,401.1 L327.1,401.0 L329.5,400.5 L331.9,400.6 L334.2,400.8 L336.6,401.3 L339.0,401.4 L341.3,401.5 L343.7,401.7 L346.1,401.5 L348.4,401.0 L350.8,401.5 L353.2,402.0 L355.5,401.2 L357.9,401.7 L360.3,402.3 L362.6,401.9 L365.0,402.3 L367.4,402.4 L369.7,401.9 L372.1,402.4 L374.5,401.7 L376.8,402.1 L379.2,402.3 L381.6,402.3 L383.9,402.7 L386.3,402.7 L388.7,402.3 L391.0,402.7 L393.4,403.0 L395.8,402.1 L398.1,403.1 L400.5,403.0 L402.9,402.4 L405.2,403.0 L407.6,402.5 L410.0,402.8 L412.4,402.8 L414.7,402.7 L417.1,402.9 L419.5,403.4 L421.8,403.5 L424.2,403.4 L426.6,402.9 L428.9,403.1 L431.3,403.3 L433.7,402.9 L436.0,403.4 L438.4,403.8 L440.8,403.2 L443.1,403.2 L445.5,403.5 L447.9,403.9 L450.2,403.1 L452.6,403.2 L455.0,403.9 L457.3,403.8 L459.7,403.4 L462.1,403.3 L464.4,404.0 L466.8,403.5 L469.2,403.9 L471.5,404.2 L473.9,403.5 L476.3,403.6 L478.6,404.4 L481.0,404.2 L483.4,403.7 L485.7,403.8 L488.1,403.8 L490.5,403.8 L492.8,404.4 L495.2,404.3 L497.6,404.0 L499.9,404.7 L502.3,404.5 L504.7,403.9 L507.0,404.3 L509.4,404.0 L511.8,404.1 L514.1,404.1 L516.5,404.1 L518.9,404.9 L521.2,404.4 L523.6,404.6 L526.0,404.8 L528.3,404.9 L530.7,405.2 L533.1,404.7 L535.4,404.5 L537.8,404.9 L540.2,404.6 L542.5,405.0 L544.9,404.6 L547.3,405.0 L549.6,404.9 L552.0,405.2 L554.4,404.5 L556.8,404.5 L559.1,405.1 L561.5,405.4 L563.9,405.0 L566.2,404.8 L568.6,405.0 L571.0,405.0 L573.3,404.8 L575.7,405.4 L578.1,404.9 L580.4,404.8 L582.8,404.9 L585.2,405.4 L587.5,405.3 L589.9,404.8 L592.3,405.2 L594.6,405.4 L597.0,405.2 L599.4,405.1 L601.7,405.0 L604.1,405.6 L606.5,405.5 L608.8,405.2 L611.2,405.5 L613.6,405.3 L615.9,405.2 L618.3,405.2 L620.7,405.0 L623.0,405.2 L625.4,405.1 L627.8,405.0 L630.1,405.4 L632.5,405.6 L634.9,405.2 L637.2,405.3 L639.6,405.8 L642.0,405.7 L644.3,405.5 L646.7,405.7 L649.1,405.3 L651.4,405.6 L653.8,405.6 L656.2,405.6 L658.5,405.5 L660.9,405.3 L663.3,405.7 L665.6,405.7 L668.0,405.3 L670.4,405.7 L672.7,405.6 L675.1,405.9 L677.5,405.7 L679.8,405.8 L682.2,405.8 L684.6,405.8 L686.9,405.6 L689.3,405.8 L691.7,406.2 L694.0,406.1 L696.4,406.2 L698.8,406.0 L701.1,405.6 L703.5,405.6 L705.9,406.1 L708.3,406.3 L710.6,405.5 L713.0,405.8 L715.4,405.8 L715.4,426.2 L713.0,426.2 L710.6,426.2 L708.3,425.6 L705.9,425.5 L703.5,426.4 L701.1,426.1 L698.8,425.7 L696.4,425.6 L694.0,425.7 L691.7,425.7 L689.3,426.0 L686.9,425.9 L684.6,425.8 L682.2,425.8 L679.8,426.1 L677.5,425.8 L675.1,425.7 L672.7,426.2 L670.4,426.2 L668.0,426.7 L665.6,426.2 L663.3,425.8 L660.9,426.7 L658.5,426.4 L656.2,426.4 L653.8,426.0 L651.4,426.2 L649.1,426.2 L646.7,426.2 L644.3,426.1 L642.0,426.0 L639.6,425.9 L637.2,426.3 L634.9,426.6 L632.5,426.3 L630.1,426.2 L627.8,426.9 L625.4,426.7 L623.0,426.6 L620.7,426.9 L618.3,426.9 L615.9,427.0 L613.6,426.7 L611.2,426.5 L608.8,426.3 L606.5,426.6 L604.1,426.2 L601.7,427.0 L599.4,426.4 L597.0,426.5 L594.6,426.5 L592.3,426.7 L589.9,426.7 L587.5,426.5 L585.2,426.1 L582.8,426.7 L580.4,427.2 L578.1,426.8 L575.7,426.4 L573.3,426.8 L571.0,427.0 L568.6,426.6 L566.2,426.9 L563.9,426.8 L561.5,426.3 L559.1,426.7 L556.8,427.3 L554.4,427.4 L552.0,426.6 L549.6,426.7 L547.3,426.7 L544.9,427.0 L542.5,427.1 L540.2,427.0 L537.8,426.6 L535.4,427.4 L533.1,427.2 L530.7,426.9 L528.3,427.0 L526.0,427.1 L523.6,427.3 L521.2,427.3 L518.9,426.8 L516.5,427.5 L514.1,427.5 L511.8,427.5 L509.4,427.8 L507.0,427.5 L504.7,427.7 L502.3,427.6 L499.9,426.9 L497.6,427.6 L495.2,427.4 L492.8,427.6 L490.5,428.3 L488.1,427.7 L485.7,427.9 L483.4,428.3 L481.0,427.9 L478.6,427.5 L476.3,428.5 L473.9,428.6 L471.5,427.9 L469.2,428.0 L466.8,428.6 L464.4,427.5 L462.1,428.3 L459.7,428.7 L457.3,428.3 L455.0,427.6 L452.6,428.6 L450.2,428.7 L447.9,428.2 L445.5,427.9 L443.1,428.7 L440.8,428.4 L438.4,428.1 L436.0,428.2 L433.7,428.6 L431.3,428.9 L428.9,428.5 L426.6,428.6 L424.2,428.5 L421.8,428.3 L419.5,428.1 L417.1,429.3 L414.7,429.0 L412.4,428.6 L410.0,429.4 L407.6,429.4 L405.2,428.6 L402.9,429.7 L400.5,429.2 L398.1,428.5 L395.8,430.1 L393.4,428.8 L391.0,429.3 L388.7,429.4 L386.3,429.0 L383.9,429.3 L381.6,429.9 L379.2,429.5 L376.8,429.8 L374.5,429.9 L372.1,429.1 L369.7,430.0 L367.4,429.1 L365.0,429.9 L362.6,430.2 L360.3,429.6 L357.9,430.3 L355.5,430.7 L353.2,429.6 L350.8,430.5 L348.4,431.2 L346.1,430.2 L343.7,430.3 L341.3,430.7 L339.0,430.0 L336.6,430.3 L334.2,430.7 L331.9,431.6 L329.5,431.6 L327.1,430.4 L324.8,431.0 L322.4,430.9 L320.0,430.6 L317.7,430.6 L315.3,431.3 L312.9,430.9 L310.6,431.5 L308.2,431.8 L305.8,431.4 L303.5,431.0 L301.1,431.8 L298.7,432.0 L296.4,432.5 L294.0,431.3 L291.6,431.9 L289.3,432.2 L286.9,432.3 L284.5,432.0 L282.2,431.9 L279.8,432.5 L277.4,431.9 L275.1,432.7 L272.7,433.7 L270.3,432.4 L268.0,433.4 L265.6,432.8 L263.2,433.4 L260.9,433.4 L258.5,433.5 L256.1,433.3 L253.7,433.1 L251.4,434.8 L249.0,433.2 L246.6,434.9 L244.3,433.9 L241.9,433.3 L239.5,434.7 L237.2,434.8 L234.8,434.3 L232.4,434.5 L230.1,435.8 L227.7,434.4 L225.3,435.2 L223.0,435.4 L220.6,434.4 L218.2,435.0 L215.9,435.6 L213.5,434.9 L211.1,436.7 L208.8,436.4 L206.4,434.9 L204.0,436.2 L201.7,435.4 L199.3,434.9 L196.9,437.1 L194.6,435.9 L192.2,437.2 L189.8,436.6 L187.5,436.2 L185.1,437.7 L182.7,437.4 L180.4,437.8 L178.0,437.7 L175.6,437.2 L173.3,436.9 L170.9,439.1 L168.5,438.7 L166.2,439.6 L163.8,437.9 L161.4,438.5 L159.1,439.6 L156.7,440.0 L154.3,439.7 L152.0,441.1 L149.6,440.4 L147.2,440.9 L144.9,441.9 L142.5,443.1 L140.1,444.9 L137.8,445.6 L135.4,444.8 L133.0,446.1 L130.7,446.5 L128.3,446.5 L125.9,444.0 L123.6,446.6 L121.2,445.0 L118.8,447.3 L116.5,446.2 L114.1,446.0 L111.7,447.2 L109.3,445.2 L107.0,446.4 L104.6,446.1 L102.2,447.6 L99.9,448.5 L97.5,446.6 L95.1,447.3ZM721.3,405.6 L723.6,406.3 L726.0,406.3 L728.4,405.9 L730.7,405.8 L733.1,406.3 L735.5,405.8 L737.8,405.8 L740.2,406.4 L742.6,406.2 L744.9,405.7 L747.3,405.9 L749.7,406.0 L752.0,406.4 L754.4,405.9 L756.8,406.5 L759.1,406.0 L761.5,406.2 L763.9,406.2 L766.2,405.9 L768.6,406.5 L771.0,406.1 L773.3,406.1 L775.7,406.1 L778.1,406.4 L780.5,406.2 L782.8,406.3 L785.2,406.5 L787.6,406.0 L789.9,406.0 L792.3,406.3 L794.7,406.4 L797.0,406.0 L799.4,406.5 L801.8,406.5 L804.1,406.2 L806.5,406.7 L808.9,406.7 L811.2,406.4 L813.6,406.2 L816.0,406.4 L818.3,406.7 L820.7,406.2 L823.1,406.3 L825.4,406.4 L827.8,406.2 L830.2,406.3 L832.5,406.6 L834.9,406.7 L837.3,406.4 L839.6,406.7 L842.0,406.5 L844.4,406.1 L846.7,406.6 L849.1,406.7 L851.5,406.7 L853.8,406.5 L856.2,406.2 L858.6,406.4 L860.9,406.3 L863.3,406.3 L865.7,406.6 L868.0,406.8 L870.4,406.2 L872.8,406.3 L875.1,406.9 L877.5,406.9 L879.9,406.5 L882.2,406.2 L884.6,406.4 L887.0,406.4 L889.3,406.6 L891.7,406.6 L894.1,406.2 L896.4,406.5 L898.8,406.4 L901.2,406.8 L903.5,406.5 L905.9,406.8 L908.3,407.0 L910.6,406.5 L913.0,406.8 L915.4,406.4 L917.7,406.5 L920.1,406.4 L922.5,406.5 L924.8,406.7 L927.2,406.5 L929.6,406.4 L932.0,406.8 L934.3,406.4 L936.7,406.8 L939.1,406.5 L941.4,406.3 L943.8,406.6 L946.2,406.9 L948.5,406.7 L950.9,406.9 L953.3,406.4 L955.6,406.3 L958.0,406.5 L960.4,406.9 L962.7,406.6 L965.1,406.3 L967.5,406.5 L969.8,406.6 L972.2,406.7 L974.6,406.5 L976.9,406.7 L979.3,406.8 L981.7,406.4 L984.0,406.6 L986.4,406.7 L988.8,406.7 L991.1,406.2 L993.5,406.6 L995.9,406.8 L998.2,406.4 L1000.6,406.4 L1003.0,406.6 L1005.3,406.6 L1007.7,406.9 L1010.1,406.5 L1012.4,406.9 L1014.8,406.6 L1017.2,406.2 L1019.5,406.6 L1021.9,406.4 L1024.3,406.4 L1026.6,406.8 L1029.0,406.2 L1031.4,406.6 L1033.7,406.3 L1036.1,406.3 L1038.5,406.8 L1040.8,406.7 L1043.2,406.6 L1045.6,406.8 L1047.9,406.5 L1050.3,406.6 L1052.7,406.6 L1055.0,406.6 L1057.4,406.6 L1059.8,406.8 L1062.1,406.5 L1064.5,406.4 L1066.9,406.4 L1069.2,406.4 L1071.6,406.5 L1074.0,406.2 L1076.4,406.9 L1078.7,406.5 L1081.1,406.3 L1083.5,406.6 L1085.8,406.4 L1088.2,406.5 L1090.6,406.6 L1092.9,406.7 L1095.3,406.5 L1097.7,406.3 L1100.0,406.7 L1102.4,406.4 L1104.8,406.3 L1107.1,406.9 L1109.5,406.3 L1111.9,406.4 L1114.2,406.9 L1116.6,406.3 L1119.0,406.5 L1121.3,406.9 L1123.7,406.8 L1126.1,406.9 L1128.4,406.6 L1130.8,406.8 L1133.2,406.3 L1135.5,406.8 L1137.9,406.9 L1140.3,406.8 L1142.6,407.0 L1145.0,406.3 L1147.4,406.9 L1149.7,406.7 L1152.1,406.5 L1154.5,406.8 L1156.8,406.8 L1159.2,406.6 L1161.6,406.5 L1163.9,406.2 L1166.3,406.2 L1168.7,406.8 L1171.0,406.5 L1173.4,406.9 L1175.8,406.6 L1178.1,406.8 L1180.5,406.5 L1182.9,406.5 L1185.2,406.5 L1187.6,406.5 L1190.0,406.5 L1192.3,406.5 L1194.7,406.6 L1197.1,406.4 L1199.4,406.8 L1201.8,406.8 L1204.2,406.6 L1206.5,406.6 L1208.9,406.4 L1211.3,406.4 L1213.6,406.4 L1216.0,406.7 L1218.4,406.3 L1220.7,406.3 L1223.1,406.4 L1225.5,406.3 L1227.9,406.7 L1230.2,407.0 L1232.6,406.6 L1235.0,406.5 L1237.3,406.4 L1239.7,406.9 L1242.1,407.0 L1244.4,406.6 L1246.8,406.8 L1249.2,406.4 L1251.5,406.7 L1253.9,406.9 L1256.3,406.7 L1258.6,406.9 L1261.0,406.9 L1263.4,406.5 L1265.7,406.3 L1268.1,406.5 L1270.5,406.8 L1272.8,406.8 L1275.2,406.6 L1277.6,407.1 L1279.9,406.8 L1282.3,407.4 L1284.7,407.2 L1287.0,407.4 L1289.4,407.6 L1291.8,407.3 L1294.1,407.5 L1296.5,407.6 L1298.9,407.6 L1301.2,408.1 L1301.2,423.7 L1298.9,424.1 L1296.5,423.9 L1294.1,424.4 L1291.8,424.5 L1289.4,424.0 L1287.0,424.3 L1284.7,424.8 L1282.3,424.5 L1279.9,425.2 L1277.6,424.7 L1275.2,425.0 L1272.8,424.9 L1270.5,424.8 L1268.1,425.1 L1265.7,425.5 L1263.4,425.5 L1261.0,424.9 L1258.6,425.1 L1256.3,425.1 L1253.9,425.2 L1251.5,425.0 L1249.2,425.7 L1246.8,424.8 L1244.4,425.5 L1242.1,425.1 L1239.7,424.8 L1237.3,425.7 L1235.0,425.4 L1232.6,425.3 L1230.2,424.9 L1227.9,425.3 L1225.5,425.7 L1223.1,425.6 L1220.7,425.8 L1218.4,425.3 L1216.0,424.9 L1213.6,425.6 L1211.3,425.4 L1208.9,425.3 L1206.5,425.5 L1204.2,425.5 L1201.8,424.8 L1199.4,425.2 L1197.1,425.1 L1194.7,425.2 L1192.3,425.2 L1190.0,425.5 L1187.6,425.5 L1185.2,425.5 L1182.9,425.4 L1180.5,425.2 L1178.1,425.2 L1175.8,425.4 L1173.4,424.9 L1171.0,425.5 L1168.7,425.1 L1166.3,425.6 L1163.9,425.4 L1161.6,425.3 L1159.2,425.0 L1156.8,424.9 L1154.5,425.2 L1152.1,425.3 L1149.7,425.1 L1147.4,424.9 L1145.0,425.6 L1142.6,425.0 L1140.3,424.9 L1137.9,424.9 L1135.5,425.2 L1133.2,425.5 L1130.8,424.7 L1128.4,425.4 L1126.1,425.0 L1123.7,425.0 L1121.3,425.0 L1119.0,425.6 L1116.6,425.4 L1114.2,425.0 L1111.9,425.3 L1109.5,425.8 L1107.1,424.9 L1104.8,425.2 L1102.4,425.5 L1100.0,425.0 L1097.7,425.7 L1095.3,425.5 L1092.9,425.2 L1090.6,425.4 L1088.2,425.1 L1085.8,425.3 L1083.5,425.2 L1081.1,425.4 L1078.7,425.5 L1076.4,424.9 L1074.0,425.6 L1071.6,425.5 L1069.2,425.4 L1066.9,425.5 L1064.5,425.1 L1062.1,425.1 L1059.8,425.1 L1057.4,425.1 L1055.0,425.3 L1052.7,425.1 L1050.3,425.0 L1047.9,425.5 L1045.6,424.9 L1043.2,425.4 L1040.8,425.4 L1038.5,425.2 L1036.1,425.7 L1033.7,425.5 L1031.4,425.2 L1029.0,425.4 L1026.6,425.2 L1024.3,425.4 L1021.9,425.4 L1019.5,425.0 L1017.2,425.8 L1014.8,425.0 L1012.4,425.0 L1010.1,425.1 L1007.7,425.2 L1005.3,425.3 L1003.0,425.5 L1000.6,425.2 L998.2,425.5 L995.9,424.9 L993.5,425.2 L991.1,425.7 L988.8,425.1 L986.4,425.3 L984.0,425.1 L981.7,425.5 L979.3,425.3 L976.9,425.2 L974.6,425.5 L972.2,425.0 L969.8,425.0 L967.5,425.3 L965.1,425.3 L962.7,425.3 L960.4,425.0 L958.0,425.2 L955.6,425.8 L953.3,425.5 L950.9,425.1 L948.5,424.9 L946.2,424.8 L943.8,425.0 L941.4,425.5 L939.1,425.5 L936.7,424.8 L934.3,425.4 L932.0,424.8 L929.6,425.2 L927.2,425.5 L924.8,425.2 L922.5,425.6 L920.1,425.5 L917.7,425.6 L915.4,425.3 L913.0,425.1 L910.6,425.2 L908.3,424.8 L905.9,424.7 L903.5,425.1 L901.2,424.8 L898.8,425.6 L896.4,425.4 L894.1,425.5 L891.7,425.4 L889.3,425.2 L887.0,425.3 L884.6,425.5 L882.2,425.3 L879.9,425.1 L877.5,424.7 L875.1,425.0 L872.8,425.4 L870.4,425.6 L868.0,424.8 L865.7,425.2 L863.3,425.6 L860.9,425.5 L858.6,425.2 L856.2,425.7 L853.8,425.2 L851.5,424.8 L849.1,424.9 L846.7,424.9 L844.4,425.7 L842.0,425.5 L839.6,424.9 L837.3,425.5 L834.9,424.9 L832.5,425.0 L830.2,425.4 L827.8,425.5 L825.4,425.4 L823.1,425.4 L820.7,425.4 L818.3,425.0 L816.0,425.6 L813.6,425.7 L811.2,425.6 L808.9,425.3 L806.5,425.3 L804.1,425.5 L801.8,425.6 L799.4,425.4 L797.0,425.6 L794.7,425.1 L792.3,425.5 L789.9,425.7 L787.6,425.5 L785.2,425.5 L782.8,425.6 L780.5,425.6 L778.1,425.5 L775.7,426.0 L773.3,425.7 L771.0,425.9 L768.6,425.5 L766.2,426.1 L763.9,425.5 L761.5,425.5 L759.1,425.8 L756.8,425.6 L754.4,426.0 L752.0,425.5 L749.7,425.9 L747.3,425.6 L744.9,426.0 L742.6,425.7 L740.2,425.2 L737.8,426.3 L735.5,425.7 L733.1,425.6 L730.7,426.1 L728.4,425.7 L726.0,425.6 L723.6,425.3 L721.3,426.0Z" fill="#000" fill-opacity="0.25"/><line x1="101.6" y1="415.9" x2="1299.4" y2="415.9" stroke="#555" stroke-width="1.1"/><path d="M101.7 369.1 L102.8 414.9 L104.0 396.6 L105.2 375.2 L106.4 415.6 L107.6 402.5 L108.8 370.9 L109.9 407.9 L111.1 384.1 L112.3 379.7 L113.5 417.6 L114.7 395.0 L115.9 379.9 L117.0 415.6 L118.2 398.7 L119.4 381.3 L120.6 407.6 L121.8 396.7 L123.0 379.4 L124.1 413.7 L125.3 396.8 L126.5 377.9 L127.7 420.3 L128.9 406.4 L130.1 380.1 L131.2 427.9 L132.4 396.4 L133.6 388.2 L134.8 413.5 L136.0 392.7 L137.2 377.9 L138.3 420.6 L139.5 395.0 L140.7 393.7 L141.9 427.6 L143.1 398.9 L144.3 377.5 L145.4 420.5 L146.6 404.9 L147.8 379.0 L149.0 423.1 L150.2 416.4 L151.4 393.0 L152.6 399.2 L153.7 375.0 L154.9 380.9 L156.1 380.6 L157.3 387.9 L158.5 409.7 L159.7 414.5 L160.8 424.6 L162.0 366.9 L163.2 407.9 L164.4 401.4 L165.6 403.0 L166.8 401.9 L167.9 407.0 L169.1 430.0 L170.3 418.3 L171.5 423.3 L172.7 402.2 L173.9 408.6 L175.0 409.6 L176.2 394.3 L177.4 405.6 L178.6 381.5 L179.8 400.3 L181.0 392.7 L182.1 417.9 L183.3 388.1 L184.5 401.6 L185.7 389.9 L186.9 389.5 L188.1 397.8 L189.2 392.6 L190.4 401.8 L191.6 374.4 L192.8 377.2 L194.0 385.1 L195.2 413.7 L196.3 416.7 L197.5 409.9 L198.7 402.0 L199.9 389.5 L201.1 409.5 L202.3 378.8 L203.4 393.3 L204.6 428.1 L205.8 408.4 L207.0 439.4 L208.2 414.5 L209.4 407.5 L210.5 407.4 L211.7 402.8 L212.9 403.2 L214.1 406.4 L215.3 373.7 L216.5 373.4 L217.6 410.5 L218.8 378.4 L220.0 418.7 L221.2 412.0 L222.4 374.6 L223.6 427.5 L224.8 391.7 L225.9 414.7 L227.1 400.9 L228.3 399.4 L229.5 370.4 L230.7 404.5 L231.9 398.2 L233.0 386.7 L234.2 398.3 L235.4 408.7 L236.6 398.7 L237.8 394.9 L239.0 382.5 L240.1 408.0 L241.3 404.4 L242.5 392.4 L243.7 397.9 L244.9 398.9 L246.1 396.6 L247.2 406.3 L248.4 409.2 L249.6 391.4 L250.8 411.2 L252.0 381.2 L253.2 390.5 L254.3 413.6 L255.5 394.5 L256.7 393.3 L257.9 384.5 L259.1 377.6 L260.3 398.4 L261.4 406.4 L262.6 406.1 L263.8 411.3 L265.0 408.8 L266.2 393.8 L267.4 395.4 L268.5 402.7 L269.7 407.2 L270.9 392.7 L272.1 402.4 L273.3 411.3 L274.5 400.3 L275.6 400.2 L276.8 411.3 L278.0 386.9 L279.2 383.0 L280.4 393.4 L281.6 393.7 L282.7 388.4 L283.9 395.2 L285.1 383.8 L286.3 371.8 L287.5 391.2 L288.7 389.3 L289.8 383.3 L291.0 398.5 L292.2 411.3 L293.4 386.2 L294.6 415.2 L295.8 375.3 L296.9 381.4 L298.1 391.4 L299.3 394.6 L300.5 373.0 L301.7 404.9 L302.9 412.5 L304.1 406.3 L305.2 401.0 L306.4 409.8 L307.6 396.2 L308.8 394.4 L310.0 406.3 L311.2 377.2 L312.3 411.1 L313.5 414.7 L314.7 394.2 L315.9 398.6 L317.1 391.3 L318.3 403.3 L319.4 410.3 L320.6 406.5 L321.8 406.4 L323.0 391.3 L324.2 401.6 L325.4 387.6 L326.5 387.7 L327.7 382.2 L328.9 383.1 L330.1 384.7 L331.3 385.2 L332.5 401.1 L333.6 400.4 L334.8 419.4 L336.0 396.4 L337.2 404.7 L338.4 392.9 L339.6 389.6 L340.7 411.8 L341.9 411.1 L343.1 402.9 L344.3 403.7 L345.5 395.7 L346.7 410.3 L347.8 398.1 L349.0 416.9 L350.2 425.3 L351.4 392.5 L352.6 411.5 L353.8 405.5 L354.9 414.7 L356.1 415.9 L357.3 404.3 L358.5 402.7 L359.7 386.2 L360.9 390.0 L362.0 398.8 L363.2 388.4 L364.4 382.7 L365.6 390.0 L366.8 400.5 L368.0 385.8 L369.1 375.1 L370.3 386.1 L371.5 375.2 L372.7 383.2 L373.9 385.3 L375.1 407.5 L376.3 411.1 L377.4 399.7 L378.6 416.1 L379.8 406.5 L381.0 388.8 L382.2 403.2 L383.4 392.1 L384.5 411.3 L385.7 404.7 L386.9 387.0 L388.1 393.3 L389.3 393.4 L390.5 378.0 L391.6 380.2 L392.8 404.2 L394.0 384.0 L395.2 401.9 L396.4 398.1 L397.6 397.2 L398.7 385.8 L399.9 407.6 L401.1 394.0 L402.3 391.3 L403.5 387.8 L404.7 398.1 L405.8 386.9 L407.0 403.3 L408.2 386.3 L409.4 392.1 L410.6 411.2 L411.8 395.2 L412.9 395.3 L414.1 400.8 L415.3 405.6 L416.5 401.2 L417.7 412.8 L418.9 382.5 L420.0 406.8 L421.2 405.6 L422.4 387.1 L423.6 390.0 L424.8 389.1 L426.0 381.0 L427.1 398.2 L428.3 408.2 L429.5 390.7 L430.7 388.6 L431.9 399.5 L433.1 410.5 L434.2 387.2 L435.4 431.9 L436.6 410.1 L437.8 391.8 L439.0 411.0 L440.2 404.4 L441.3 409.7 L442.5 405.7 L443.7 407.0 L444.9 405.1 L446.1 391.8 L447.3 394.0 L448.5 391.1 L449.6 386.2 L450.8 399.6 L452.0 397.3 L453.2 392.6 L454.4 380.7 L455.6 386.7 L456.7 383.0 L457.9 386.0 L459.1 386.1 L460.3 412.9 L461.5 391.8 L462.7 395.0 L463.8 396.9 L465.0 402.6 L466.2 402.6 L467.4 394.7 L468.6 389.7 L469.8 410.5 L470.9 397.8 L472.1 403.1 L473.3 407.4 L474.5 395.8 L475.7 400.6 L476.9 404.4 L478.0 405.9 L479.2 396.6 L480.4 397.9 L481.6 407.8 L482.8 407.0 L484.0 401.0 L485.1 394.9 L486.3 406.9 L487.5 395.1 L488.7 404.9 L489.9 375.0 L491.1 402.9 L492.2 405.8 L493.4 397.6 L494.6 405.9 L495.8 392.1 L497.0 381.6 L498.2 399.0 L499.3 396.8 L500.5 402.4 L501.7 398.8 L502.9 386.0 L504.1 388.8 L505.3 404.5 L506.4 386.0 L507.6 386.6 L508.8 392.4 L510.0 402.9 L511.2 398.4 L512.4 405.0 L513.5 395.4 L514.7 400.5 L515.9 417.2 L517.1 393.5 L518.3 396.0 L519.5 389.1 L520.7 398.1 L521.8 396.8 L523.0 389.0 L524.2 393.8 L525.4 395.4 L526.6 371.9 L527.8 395.8 L528.9 396.7 L530.1 384.2 L531.3 402.8 L532.5 407.5 L533.7 411.3 L534.9 396.1 L536.0 393.1 L537.2 391.7 L538.4 408.3 L539.6 391.9 L540.8 387.9 L542.0 397.7 L543.1 398.1 L544.3 393.0 L545.5 394.8 L546.7 392.8 L547.9 406.3 L549.1 401.1 L550.2 408.6 L551.4 395.0 L552.6 393.8 L553.8 398.6 L555.0 396.2 L556.2 410.5 L557.3 393.6 L558.5 401.5 L559.7 398.0 L560.9 389.7 L562.1 403.2 L563.3 389.9 L564.4 396.3 L565.6 398.1 L566.8 394.2 L568.0 407.8 L569.2 395.3 L570.4 397.7 L571.5 390.4 L572.7 399.1 L573.9 401.6 L575.1 396.2 L576.3 398.8 L577.5 407.9 L578.6 401.6 L579.8 389.3 L581.0 398.0 L582.2 405.4 L583.4 394.2 L584.6 412.4 L585.7 417.2 L586.9 401.5 L588.1 397.8 L589.3 396.9 L590.5 405.4 L591.7 400.9 L592.8 409.9 L594.0 398.7 L595.2 411.2 L596.4 401.8 L597.6 397.2 L598.8 412.1 L600.0 404.8 L601.1 393.7 L602.3 386.2 L603.5 408.5 L604.7 397.7 L605.9 408.1 L607.1 410.5 L608.2 388.4 L609.4 392.2 L610.6 404.0 L611.8 398.0 L613.0 393.9 L614.2 396.8 L615.3 381.5 L616.5 391.7 L617.7 420.5 L618.9 404.4 L620.1 405.3 L621.3 401.4 L622.4 399.2 L623.6 403.9 L624.8 407.9 L626.0 390.0 L627.2 393.1 L628.4 403.1 L629.5 394.5 L630.7 393.2 L631.9 388.6 L633.1 405.4 L634.3 394.1 L635.5 402.8 L636.6 390.9 L637.8 399.3 L639.0 416.0 L640.2 401.3 L641.4 412.7 L642.6 402.7 L643.7 400.0 L644.9 402.2 L646.1 410.6 L647.3 409.1 L648.5 406.9 L649.7 402.1 L650.8 390.0 L652.0 392.5 L653.2 401.6 L654.4 390.1 L655.6 407.9 L656.8 395.4 L657.9 399.9 L659.1 397.5 L660.3 394.2 L661.5 403.4 L662.7 393.9 L663.9 398.5 L665.0 381.4 L666.2 398.7 L667.4 389.8 L668.6 393.1 L669.8 406.9 L671.0 390.4 L672.2 405.6 L673.3 416.5 L674.5 395.6 L675.7 390.9 L676.9 397.6 L678.1 400.9 L679.3 388.0 L680.4 392.4 L681.6 403.0 L682.8 394.5 L684.0 407.6 L685.2 404.6 L686.4 407.7 L687.5 416.4 L688.7 410.4 L689.9 392.2 L691.1 406.2 L692.3 404.3 L693.5 408.4 L694.6 394.5 L695.8 398.6 L697.0 395.7 L698.2 399.6 L699.4 407.8 L700.6 407.6 L701.7 394.6 L702.9 399.1 L704.1 393.8 L705.3 421.1 L706.5 394.8 L707.7 402.3 L708.8 384.5 L710.0 401.0 L711.2 399.6 L712.4 395.0 L713.6 405.2 L714.8 394.4 L715.9 403.6 L717.1 391.2 L718.3 392.9 L719.5 395.3 L720.7 404.4 L721.9 402.2 L723.0 398.2 L724.2 414.3 L725.4 406.2 L726.6 394.4 L727.8 408.3 L729.0 392.3 L730.1 403.6 L731.3 398.5 L732.5 408.2 L733.7 398.1 L734.9 396.8 L736.1 391.8 L737.2 389.6 L738.4 390.0 L739.6 397.5 L740.8 408.9 L742.0 392.5 L743.2 408.8 L744.4 405.1 L745.5 396.2 L746.7 397.0 L747.9 388.9 L749.1 399.1 L750.3 412.7 L751.5 404.7 L752.6 400.3 L753.8 403.5 L755.0 391.4 L756.2 401.4 L757.4 411.5 L758.6 399.4 L759.7 409.2 L760.9 390.4 L762.1 397.8 L763.3 410.8 L764.5 395.1 L765.7 383.6 L766.8 413.0 L768.0 396.7 L769.2 397.2 L770.4 399.5 L771.6 398.7 L772.8 397.5 L773.9 405.8 L775.1 392.0 L776.3 409.6 L777.5 388.7 L778.7 388.6 L779.9 407.9 L781.0 402.4 L782.2 391.4 L783.4 403.4 L784.6 402.9 L785.8 404.5 L787.0 393.5 L788.1 404.6 L789.3 401.9 L790.5 397.6 L791.7 402.3 L792.9 407.7 L794.1 411.9 L795.2 413.8 L796.4 411.7 L797.6 415.2 L798.8 408.6 L800.0 400.3 L801.2 400.9 L802.3 407.2 L803.5 409.5 L804.7 409.7 L805.9 412.5 L807.1 411.9 L808.3 397.9 L809.4 410.9 L810.6 402.7 L811.8 406.0 L813.0 384.8 L814.2 411.7 L815.4 401.6 L816.6 403.8 L817.7 407.3 L818.9 400.0 L820.1 400.1 L821.3 408.8 L822.5 399.5 L823.7 398.3 L824.8 391.6 L826.0 404.3 L827.2 391.4 L828.4 401.3 L829.6 415.5 L830.8 399.8 L831.9 401.7 L833.1 407.7 L834.3 395.7 L835.5 403.9 L836.7 394.5 L837.9 401.0 L839.0 396.0 L840.2 395.7 L841.4 397.2 L842.6 408.1 L843.8 395.9 L845.0 400.4 L846.1 387.0 L847.3 395.8 L848.5 395.2 L849.7 405.9 L850.9 405.0 L852.1 401.2 L853.2 409.7 L854.4 411.0 L855.6 403.6 L856.8 402.3 L858.0 400.1 L859.2 393.2 L860.3 403.0 L861.5 396.8 L862.7 401.7 L863.9 402.8 L865.1 399.8 L866.3 415.9 L867.4 403.1 L868.6 406.2 L869.8 408.7 L871.0 415.9 L872.2 406.7 L873.4 415.6 L874.5 397.3 L875.7 402.5 L876.9 413.5 L878.1 408.0 L879.3 397.0 L880.5 405.0 L881.6 403.9 L882.8 404.4 L884.0 402.7 L885.2 413.6 L886.4 403.4 L887.6 405.5 L888.7 380.7 L889.9 399.5 L891.1 404.0 L892.3 394.4 L893.5 401.0 L894.7 399.1 L895.9 406.8 L897.0 390.6 L898.2 403.7 L899.4 398.4 L900.6 392.2 L901.8 401.5 L903.0 400.7 L904.1 396.3 L905.3 394.9 L906.5 407.3 L907.7 400.1 L908.9 401.4 L910.1 396.8 L911.2 384.4 L912.4 364.5 L913.6 354.0 L914.8 359.3 L916.0 377.4 L917.2 393.8 L918.3 401.0 L919.5 395.5 L920.7 409.2 L921.9 403.4 L923.1 404.3 L924.3 387.8 L925.4 405.0 L926.6 392.5 L927.8 389.1 L929.0 399.1 L930.2 396.0 L931.4 409.8 L932.5 401.5 L933.7 401.1 L934.9 417.8 L936.1 399.0 L937.3 396.5 L938.5 410.7 L939.6 410.8 L940.8 406.0 L942.0 403.7 L943.2 401.7 L944.4 406.0 L945.6 406.9 L946.7 397.6 L947.9 401.7 L949.1 399.6 L950.3 400.1 L951.5 395.2 L952.7 398.8 L953.8 392.0 L955.0 396.3 L956.2 391.3 L957.4 387.9 L958.6 406.7 L959.8 392.4 L960.9 384.1 L962.1 402.4 L963.3 398.4 L964.5 400.0 L965.7 394.5 L966.9 393.1 L968.1 401.3 L969.2 388.3 L970.4 401.7 L971.6 398.5 L972.8 389.5 L974.0 381.4 L975.2 397.5 L976.3 390.5 L977.5 393.3 L978.7 406.4 L979.9 403.7 L981.1 404.9 L982.3 399.9 L983.4 398.3 L984.6 394.7 L985.8 385.1 L987.0 389.6 L988.2 374.2 L989.4 392.3 L990.5 387.5 L991.7 389.2 L992.9 381.5 L994.1 393.6 L995.3 386.5 L996.5 379.7 L997.6 395.2 L998.8 392.8 L1000.0 388.1 L1001.2 394.0 L1002.4 398.1 L1003.6 379.4 L1004.7 391.3 L1005.9 379.2 L1007.1 393.3 L1008.3 393.3 L1009.5 386.2 L1010.7 392.3 L1011.8 398.2 L1013.0 397.8 L1014.2 390.7 L1015.4 396.4 L1016.6 391.9 L1017.8 407.9 L1018.9 398.3 L1020.1 394.1 L1021.3 395.9 L1022.5 399.6 L1023.7 399.4 L1024.9 392.6 L1026.0 381.5 L1027.2 400.5 L1028.4 395.3 L1029.6 385.7 L1030.8 388.8 L1032.0 392.4 L1033.1 395.5 L1034.3 392.6 L1035.5 393.1 L1036.7 408.0 L1037.9 399.8 L1039.1 407.4 L1040.3 385.5 L1041.4 385.5 L1042.6 397.0 L1043.8 387.4 L1045.0 374.3 L1046.2 394.3 L1047.4 383.6 L1048.5 388.7 L1049.7 393.7 L1050.9 400.7 L1052.1 397.9 L1053.3 396.3 L1054.5 409.8 L1055.6 391.6 L1056.8 394.9 L1058.0 389.9 L1059.2 395.4 L1060.4 372.0 L1061.6 401.7 L1062.7 401.1 L1063.9 389.5 L1065.1 376.1 L1066.3 398.0 L1067.5 381.3 L1068.7 398.5 L1069.8 385.4 L1071.0 392.2 L1072.2 378.0 L1073.4 379.2 L1074.6 396.7 L1075.8 374.0 L1076.9 399.6 L1078.1 397.7 L1079.3 382.4 L1080.5 398.4 L1081.7 400.2 L1082.9 395.1 L1084.0 392.1 L1085.2 392.2 L1086.4 400.4 L1087.6 395.0 L1088.8 391.2 L1090.0 384.4 L1091.1 391.5 L1092.3 403.6 L1093.5 396.1 L1094.7 399.4 L1095.9 385.9 L1097.1 405.0 L1098.2 391.7 L1099.4 401.1 L1100.6 385.6 L1101.8 386.7 L1103.0 390.6 L1104.2 388.9 L1105.3 394.5 L1106.5 387.9 L1107.7 391.9 L1108.9 386.7 L1110.1 390.5 L1111.3 409.0 L1112.5 397.5 L1113.6 381.1 L1114.8 378.9 L1116.0 388.0 L1117.2 390.8 L1118.4 392.5 L1119.6 385.8 L1120.7 385.1 L1121.9 396.1 L1123.1 386.0 L1124.3 380.4 L1125.5 395.1 L1126.7 391.8 L1127.8 386.6 L1129.0 384.0 L1130.2 391.7 L1131.4 393.6 L1132.6 393.4 L1133.8 387.2 L1134.9 386.0 L1136.1 389.0 L1137.3 398.9 L1138.5 398.5 L1139.7 386.0 L1140.9 397.4 L1142.0 388.7 L1143.2 391.6 L1144.4 393.7 L1145.6 389.5 L1146.8 377.1 L1148.0 385.1 L1149.1 390.4 L1150.3 399.6 L1151.5 386.8 L1152.7 380.4 L1153.9 383.1 L1155.1 379.5 L1156.2 383.9 L1157.4 397.2 L1158.6 390.2 L1159.8 385.0 L1161.0 382.8 L1162.2 391.1 L1163.3 389.3 L1164.5 385.9 L1165.7 378.9 L1166.9 379.7 L1168.1 382.3 L1169.3 384.5 L1170.4 394.9 L1171.6 397.0 L1172.8 390.1 L1174.0 380.9 L1175.2 384.1 L1176.4 383.4 L1177.5 397.9 L1178.7 399.8 L1179.9 381.7 L1181.1 387.2 L1182.3 397.1 L1183.5 383.0 L1184.6 385.3 L1185.8 366.9 L1187.0 375.7 L1188.2 383.5 L1189.4 388.2 L1190.6 386.2 L1191.8 388.3 L1192.9 398.1 L1194.1 382.7 L1195.3 385.0 L1196.5 407.0 L1197.7 395.1 L1198.9 394.7 L1200.0 381.8 L1201.2 387.1 L1202.4 377.0 L1203.6 397.4 L1204.8 396.8 L1206.0 381.4 L1207.1 391.4 L1208.3 395.7 L1209.5 392.6 L1210.7 393.8 L1211.9 384.7 L1213.1 379.2 L1214.2 397.6 L1215.4 391.2 L1216.6 388.0 L1217.8 387.0 L1219.0 381.5 L1220.2 385.8 L1221.3 391.4 L1222.5 396.0 L1223.7 401.8 L1224.9 392.3 L1226.1 388.1 L1227.3 381.0 L1228.4 389.2 L1229.6 371.2 L1230.8 385.6 L1232.0 390.6 L1233.2 385.2 L1234.4 394.0 L1235.5 386.9 L1236.7 402.0 L1237.9 384.8 L1239.1 386.5 L1240.3 385.7 L1241.5 386.0 L1242.6 396.2 L1243.8 395.1 L1245.0 377.3 L1246.2 382.3 L1247.4 390.8 L1248.6 384.8 L1249.7 384.0 L1250.9 372.9 L1252.1 377.2 L1253.3 382.8 L1254.5 389.8 L1255.7 374.9 L1256.8 386.1 L1258.0 393.3 L1259.2 396.8 L1260.4 394.8 L1261.6 390.9 L1262.8 382.3 L1264.0 379.9 L1265.1 377.9 L1266.3 384.7 L1267.5 380.8 L1268.7 370.1 L1269.9 378.1 L1271.1 374.3 L1272.2 396.0 L1273.4 393.7 L1274.6 393.4 L1275.8 407.1 L1277.0 389.5 L1278.2 377.5 L1279.3 389.4 L1280.5 386.0 L1281.7 393.0 L1282.9 391.4 L1284.1 385.6 L1285.3 395.3 L1286.4 379.9 L1287.6 399.6 L1288.8 386.6 L1290.0 390.4 L1291.2 376.9 L1292.4 380.0 L1293.5 400.7 L1294.7 406.2 L1295.9 396.9 L1297.1 392.0 L1298.3 389.0 L1299.5 387.0 L1300.6 382.1 L1301.8 395.9" fill="none" stroke="#0000ff" stroke-width="1.25" stroke-linejoin="round"/><rect x="133.6" y="348.5" width="12.1" height="83.69999999999999" fill="#808080" fill-opacity="0.72" stroke="#333" stroke-width="1"/><path d="M133.6 364.5L145.7 356.0M133.6 398.5L145.7 390.0M133.6 432.5L145.7 424.0M133.6 466.5L145.7 458.0" stroke="#333" stroke-width="0.9" clip-path="url(#m3535)"/><rect x="1271.3" y="348.5" width="6.5" height="83.69999999999999" fill="#808080" fill-opacity="0.72" stroke="#333" stroke-width="1"/><path d="M1271.3 360.6L1277.9 356.0M1271.3 394.6L1277.9 390.0M1271.3 428.6L1277.9 424.0M1271.3 462.6L1277.9 458.0" stroke="#333" stroke-width="0.9" clip-path="url(#m5457)"/><line x1="913.8" y1="348.5" x2="913.8" y2="432.2" stroke="#000" stroke-width="1" stroke-dasharray="2.2,1.6"/></g>
<rect x="101.60" y="348.50" width="1197.80" height="83.70" fill="none" stroke="#333" stroke-width="1.1" />
<line x1="112.90" y1="432.20" x2="112.90" y2="435.70" stroke="#333" stroke-width="0.8" />
<text x="112.9" y="446.8" font-family="Liberation Sans" font-size="10.4" fill="#000" text-anchor="middle" >3500</text>
<line x1="172.08" y1="432.20" x2="172.08" y2="435.70" stroke="#333" stroke-width="0.8" />
<text x="172.1" y="446.8" font-family="Liberation Sans" font-size="10.4" fill="#000" text-anchor="middle" >3600</text>
<line x1="231.26" y1="432.20" x2="231.26" y2="435.70" stroke="#333" stroke-width="0.8" />
<text x="231.3" y="446.8" font-family="Liberation Sans" font-size="10.4" fill="#000" text-anchor="middle" >3700</text>
<line x1="290.44" y1="432.20" x2="290.44" y2="435.70" stroke="#333" stroke-width="0.8" />
<text x="290.4" y="446.8" font-family="Liberation Sans" font-size="10.4" fill="#000" text-anchor="middle" >3800</text>
<line x1="349.62" y1="432.20" x2="349.62" y2="435.70" stroke="#333" stroke-width="0.8" />
<text x="349.6" y="446.8" font-family="Liberation Sans" font-size="10.4" fill="#000" text-anchor="middle" >3900</text>
<line x1="408.80" y1="432.20" x2="408.80" y2="435.70" stroke="#333" stroke-width="0.8" />
<text x="408.8" y="446.8" font-family="Liberation Sans" font-size="10.4" fill="#000" text-anchor="middle" >4000</text>
<line x1="467.98" y1="432.20" x2="467.98" y2="435.70" stroke="#333" stroke-width="0.8" />
<text x="468.0" y="446.8" font-family="Liberation Sans" font-size="10.4" fill="#000" text-anchor="middle" >4100</text>
<line x1="527.16" y1="432.20" x2="527.16" y2="435.70" stroke="#333" stroke-width="0.8" />
<text x="527.2" y="446.8" font-family="Liberation Sans" font-size="10.4" fill="#000" text-anchor="middle" >4200</text>
<line x1="586.34" y1="432.20" x2="586.34" y2="435.70" stroke="#333" stroke-width="0.8" />
<text x="586.3" y="446.8" font-family="Liberation Sans" font-size="10.4" fill="#000" text-anchor="middle" >4300</text>
<line x1="645.52" y1="432.20" x2="645.52" y2="435.70" stroke="#333" stroke-width="0.8" />
<text x="645.5" y="446.8" font-family="Liberation Sans" font-size="10.4" fill="#000" text-anchor="middle" >4400</text>
<line x1="704.70" y1="432.20" x2="704.70" y2="435.70" stroke="#333" stroke-width="0.8" />
<text x="704.7" y="446.8" font-family="Liberation Sans" font-size="10.4" fill="#000" text-anchor="middle" >4500</text>
<line x1="763.88" y1="432.20" x2="763.88" y2="435.70" stroke="#333" stroke-width="0.8" />
<text x="763.9" y="446.8" font-family="Liberation Sans" font-size="10.4" fill="#000" text-anchor="middle" >4600</text>
<line x1="823.06" y1="432.20" x2="823.06" y2="435.70" stroke="#333" stroke-width="0.8" />
<text x="823.1" y="446.8" font-family="Liberation Sans" font-size="10.4" fill="#000" text-anchor="middle" >4700</text>
<line x1="882.24" y1="432.20" x2="882.24" y2="435.70" stroke="#333" stroke-width="0.8" />
<text x="882.2" y="446.8" font-family="Liberation Sans" font-size="10.4" fill="#000" text-anchor="middle" >4800</text>
<line x1="941.42" y1="432.20" x2="941.42" y2="435.70" stroke="#333" stroke-width="0.8" />
<text x="941.4" y="446.8" font-family="Liberation Sans" font-size="10.4" fill="#000" text-anchor="middle" >4900</text>
<line x1="1000.60" y1="432.20" x2="1000.60" y2="435.70" stroke="#333" stroke-width="0.8" />
<text x="1000.6" y="446.8" font-family="Liberation Sans" font-size="10.4" fill="#000" text-anchor="middle" >5000</text>
<line x1="1059.78" y1="432.20" x2="1059.78" y2="435.70" stroke="#333" stroke-width="0.8" />
<text x="1059.8" y="446.8" font-family="Liberation Sans" font-size="10.4" fill="#000" text-anchor="middle" >5100</text>
<line x1="1118.96" y1="432.20" x2="1118.96" y2="435.70" stroke="#333" stroke-width="0.8" />
<text x="1119.0" y="446.8" font-family="Liberation Sans" font-size="10.4" fill="#000" text-anchor="middle" >5200</text>
<line x1="1178.14" y1="432.20" x2="1178.14" y2="435.70" stroke="#333" stroke-width="0.8" />
<text x="1178.1" y="446.8" font-family="Liberation Sans" font-size="10.4" fill="#000" text-anchor="middle" >5300</text>
<line x1="1237.32" y1="432.20" x2="1237.32" y2="435.70" stroke="#333" stroke-width="0.8" />
<text x="1237.3" y="446.8" font-family="Liberation Sans" font-size="10.4" fill="#000" text-anchor="middle" >5400</text>
<line x1="1296.50" y1="432.20" x2="1296.50" y2="435.70" stroke="#333" stroke-width="0.8" />
<text x="1296.5" y="446.8" font-family="Liberation Sans" font-size="10.4" fill="#000" text-anchor="middle" >5500</text>
<line x1="98.10" y1="365.90" x2="101.60" y2="365.90" stroke="#333" stroke-width="0.8" />
<text x="95.6" y="369.6" font-family="Liberation Sans" font-size="10.4" fill="#000" text-anchor="end" >5.0</text>
<line x1="98.10" y1="390.90" x2="101.60" y2="390.90" stroke="#333" stroke-width="0.8" />
<text x="95.6" y="394.6" font-family="Liberation Sans" font-size="10.4" fill="#000" text-anchor="end" >2.5</text>
<line x1="98.10" y1="415.90" x2="101.60" y2="415.90" stroke="#333" stroke-width="0.8" />
<text x="95.6" y="419.6" font-family="Liberation Sans" font-size="10.4" fill="#000" text-anchor="end" >0.0</text>
<text x="113.0" y="346.0" font-family="Liberation Sans" font-size="10" fill="#000" text-anchor="start" >e</text>
<text x="120.2" y="342.2" font-family="Liberation Sans" font-size="7" fill="#000" text-anchor="start" >−17</text>
<text x="133.5" y="346.0" font-family="Liberation Sans" font-size="10" fill="#000" text-anchor="start" >x2</text>
<text x="144.8" y="346.0" font-family="Liberation Sans" font-size="10" fill="#000" text-anchor="start" font-style="italic">Å</text>
<text transform="translate(142.7,320.7) rotate(90)" x="0" y="0" font-family="Liberation Sans" font-size="10" fill="#800080" dominant-baseline="alphabetic">SiIV</text>
<path d="M141.6 348.0 q0 -1.5 2 -1.5 h1.5 q1 0 1 -1.2 q0 1.2 1 1.2 h1.5 q2 0 2 1.5" fill="none" stroke="#800080" stroke-width="0.9" />
<text transform="translate(167.3,323.6) rotate(90)" x="0" y="0" font-family="Liberation Sans" font-size="10" fill="#ffa500" dominant-baseline="alphabetic">Lyα</text>
<path d="M166.2 348.0 q0 -1.5 2 -1.5 h1.5 q1 0 1 -1.2 q0 1.2 1 1.2 h1.5 q2 0 2 1.5" fill="none" stroke="#ffa500" stroke-width="0.9" />
<text transform="translate(195.2,319.7) rotate(90)" x="0" y="0" font-family="Liberation Sans" font-size="10" fill="#008000" dominant-baseline="alphabetic">MgII</text>
<path d="M194.1 348.0 q0 -1.5 2 -1.5 h1.5 q1 0 1 -1.2 q0 1.2 1 1.2 h1.5 q2 0 2 1.5" fill="none" stroke="#008000" stroke-width="0.9" />
<text transform="translate(212.0,320.0) rotate(90)" x="0" y="0" font-family="Liberation Sans" font-size="10" fill="#ffa500" dominant-baseline="alphabetic">NV</text>
<path d="M210.9 348.0 q0 -1.5 2 -1.5 h1.5 q1 0 1 -1.2 q0 1.2 1 1.2 h1.5 q2 0 2 1.5" fill="none" stroke="#ffa500" stroke-width="0.9" />
<text transform="translate(251.2,325.0) rotate(90)" x="0" y="0" font-family="Liberation Sans" font-size="10" fill="#ffa500" dominant-baseline="alphabetic">SiII</text>
<path d="M250.1 348.0 q0 -1.5 2 -1.5 h1.5 q1 0 1 -1.2 q0 1.2 1 1.2 h1.5 q2 0 2 1.5" fill="none" stroke="#ffa500" stroke-width="0.9" />
<text transform="translate(292.3,323.6) rotate(90)" x="0" y="0" font-family="Liberation Sans" font-size="10" fill="#8a2be2" dominant-baseline="alphabetic">Lyα</text>
<path d="M291.2 348.0 q0 -1.5 2 -1.5 h1.5 q1 0 1 -1.2 q0 1.2 1 1.2 h1.5 q2 0 2 1.5" fill="none" stroke="#8a2be2" stroke-width="0.9" />
<text transform="translate(338.9,320.2) rotate(90)" x="0" y="0" font-family="Liberation Sans" font-size="10" fill="#8a2be2" dominant-baseline="alphabetic">NV</text>
<path d="M337.8 348.0 q0 -1.5 2 -1.5 h1.5 q1 0 1 -1.2 q0 1.2 1 1.2 h1.5 q2 0 2 1.5" fill="none" stroke="#8a2be2" stroke-width="0.9" />
<text transform="translate(370.2,320.2) rotate(90)" x="0" y="0" font-family="Liberation Sans" font-size="10" fill="#800080" dominant-baseline="alphabetic">CIV</text>
<path d="M369.1 348.0 q0 -1.5 2 -1.5 h1.5 q1 0 1 -1.2 q0 1.2 1 1.2 h1.5 q2 0 2 1.5" fill="none" stroke="#800080" stroke-width="0.9" />
<text transform="translate(380.7,325.5) rotate(90)" x="0" y="0" font-family="Liberation Sans" font-size="10" fill="#9b59d9" dominant-baseline="alphabetic">SiII</text>
<path d="M379.6 348.0 q0 -1.5 2 -1.5 h1.5 q1 0 1 -1.2 q0 1.2 1 1.2 h1.5 q2 0 2 1.5" fill="none" stroke="#9b59d9" stroke-width="0.9" />
<text transform="translate(424.2,324.0) rotate(90)" x="0" y="0" font-family="Liberation Sans" font-size="10" fill="#ff00ff" dominant-baseline="alphabetic">CII</text>
<path d="M423.1 348.0 q0 -1.5 2 -1.5 h1.5 q1 0 1 -1.2 q0 1.2 1 1.2 h1.5 q2 0 2 1.5" fill="none" stroke="#ff00ff" stroke-width="0.9" />
<text transform="translate(484.2,320.2) rotate(90)" x="0" y="0" font-family="Liberation Sans" font-size="10" fill="#ff0000" dominant-baseline="alphabetic">OVI</text>
<path d="M483.1 348.0 q0 -1.5 2 -1.5 h1.5 q1 0 1 -1.2 q0 1.2 1 1.2 h1.5 q2 0 2 1.5" fill="none" stroke="#ff0000" stroke-width="0.9" />
<text transform="translate(507.1,321.0) rotate(90)" x="0" y="0" font-family="Liberation Sans" font-size="10" fill="#800080" dominant-baseline="alphabetic">HeII</text>
<path d="M506.0 348.0 q0 -1.5 2 -1.5 h1.5 q1 0 1 -1.2 q0 1.2 1 1.2 h1.5 q2 0 2 1.5" fill="none" stroke="#800080" stroke-width="0.9" />
<text transform="translate(486.1,279.7) rotate(90)" x="0" y="0" font-family="Liberation Sans" font-size="10" fill="#ffa500" dominant-baseline="alphabetic">SiIV</text>
<path d="M485.0 304.8 q0 -1.5 2 -1.5 h1.5 q1 0 1 -1.2 q0 1.2 1 1.2 h1.5 q2 0 2 1.5" fill="none" stroke="#ffa500" stroke-width="0.9" />
<text transform="translate(505.6,281.2) rotate(90)" x="0" y="0" font-family="Liberation Sans" font-size="10" fill="#4169e1" dominant-baseline="alphabetic">OII</text>
<path d="M504.5 304.8 q0 -1.5 2 -1.5 h1.5 q1 0 1 -1.2 q0 1.2 1 1.2 h1.5 q2 0 2 1.5" fill="none" stroke="#4169e1" stroke-width="0.9" />
<text transform="translate(630.2,321.4) rotate(90)" x="0" y="0" font-family="Liberation Sans" font-size="10" fill="#8a2be2" dominant-baseline="alphabetic">SiIV</text>
<path d="M629.1 348.0 q0 -1.5 2 -1.5 h1.5 q1 0 1 -1.2 q0 1.2 1 1.2 h1.5 q2 0 2 1.5" fill="none" stroke="#8a2be2" stroke-width="0.9" />
<text transform="translate(736.6,323.0) rotate(90)" x="0" y="0" font-family="Liberation Sans" font-size="10" fill="#87ceeb" dominant-baseline="alphabetic">OII</text>
<path d="M735.5 348.0 q0 -1.5 2 -1.5 h1.5 q1 0 1 -1.2 q0 1.2 1 1.2 h1.5 q2 0 2 1.5" fill="none" stroke="#87ceeb" stroke-width="0.9" />
<text transform="translate(752.1,320.0) rotate(90)" x="0" y="0" font-family="Liberation Sans" font-size="10" fill="#ffa500" dominant-baseline="alphabetic">CIV</text>
<path d="M751.0 348.0 q0 -1.5 2 -1.5 h1.5 q1 0 1 -1.2 q0 1.2 1 1.2 h1.5 q2 0 2 1.5" fill="none" stroke="#ffa500" stroke-width="0.9" />
<text transform="translate(760.6,323.0) rotate(90)" x="0" y="0" font-family="Liberation Sans" font-size="10" fill="#87ceeb" dominant-baseline="alphabetic">OII</text>
<path d="M759.5 348.0 q0 -1.5 2 -1.5 h1.5 q1 0 1 -1.2 q0 1.2 1 1.2 h1.5 q2 0 2 1.5" fill="none" stroke="#87ceeb" stroke-width="0.9" />
<text transform="translate(969.8,320.0) rotate(90)" x="0" y="0" font-family="Liberation Sans" font-size="10" fill="#ff0000" dominant-baseline="alphabetic">NV</text>
<path d="M968.7 348.0 q0 -1.5 2 -1.5 h1.5 q1 0 1 -1.2 q0 1.2 1 1.2 h1.5 q2 0 2 1.5" fill="none" stroke="#ff0000" stroke-width="0.9" />
<text transform="translate(1024.1,325.0) rotate(90)" x="0" y="0" font-family="Liberation Sans" font-size="10" fill="#ff0000" dominant-baseline="alphabetic">SiII</text>
<path d="M1023.0 348.0 q0 -1.5 2 -1.5 h1.5 q1 0 1 -1.2 q0 1.2 1 1.2 h1.5 q2 0 2 1.5" fill="none" stroke="#ff0000" stroke-width="0.9" />
<text transform="translate(1079.8,320.7) rotate(90)" x="0" y="0" font-family="Liberation Sans" font-size="10" fill="#8a2be2" dominant-baseline="alphabetic">HeII</text>
<path d="M1078.7 348.0 q0 -1.5 2 -1.5 h1.5 q1 0 1 -1.2 q0 1.2 1 1.2 h1.5 q2 0 2 1.5" fill="none" stroke="#8a2be2" stroke-width="0.9" />
<text transform="translate(1179.8,328.2) rotate(90)" x="0" y="0" font-family="Liberation Sans" font-size="10" fill="#87ceeb" dominant-baseline="alphabetic">Hγ</text>
<path d="M1178.7 348.0 q0 -1.5 2 -1.5 h1.5 q1 0 1 -1.2 q0 1.2 1 1.2 h1.5 q2 0 2 1.5" fill="none" stroke="#87ceeb" stroke-width="0.9" />
<text transform="translate(1207.4,328.2) rotate(90)" x="0" y="0" font-family="Liberation Sans" font-size="10" fill="#87ceeb" dominant-baseline="alphabetic">Hγ</text>
<path d="M1206.3 348.0 q0 -1.5 2 -1.5 h1.5 q1 0 1 -1.2 q0 1.2 1 1.2 h1.5 q2 0 2 1.5" fill="none" stroke="#87ceeb" stroke-width="0.9" />
<text transform="translate(1254.6,327.7) rotate(90)" x="0" y="0" font-family="Liberation Sans" font-size="10" fill="#4169e1" dominant-baseline="alphabetic">Hβ</text>
<path d="M1253.5 348.0 q0 -1.5 2 -1.5 h1.5 q1 0 1 -1.2 q0 1.2 1 1.2 h1.5 q2 0 2 1.5" fill="none" stroke="#4169e1" stroke-width="0.9" />
<rect x="454.50" y="449.90" width="17.30" height="6.60" fill="#ff0000" stroke="none" stroke-width="1" />
<text x="478.0" y="456.6" font-family="Liberation Sans" font-size="9" fill="#000" text-anchor="start" >Lyα</text>
<rect x="508.20" y="449.90" width="17.30" height="6.60" fill="#008000" stroke="none" stroke-width="1" />
<text x="531.7" y="456.6" font-family="Liberation Sans" font-size="9" fill="#000" text-anchor="start" >OII</text>
<rect x="561.00" y="449.90" width="17.30" height="6.60" fill="#8a2be2" stroke="none" stroke-width="1" />
<text x="584.5" y="456.6" font-family="Liberation Sans" font-size="9" fill="#000" text-anchor="start" >CIV</text>
<rect x="616.00" y="449.90" width="17.30" height="6.60" fill="#800080" stroke="none" stroke-width="1" />
<text x="639.5" y="456.6" font-family="Liberation Sans" font-size="9" fill="#000" text-anchor="start" >CIII</text>
<rect x="668.00" y="449.90" width="17.30" height="6.60" fill="#ff00ff" stroke="none" stroke-width="1" />
<text x="691.5" y="456.6" font-family="Liberation Sans" font-size="9" fill="#000" text-anchor="start" >MgII</text>
<rect x="724.00" y="449.90" width="17.30" height="6.60" fill="#4169e1" stroke="none" stroke-width="1" />
<text x="747.5" y="456.6" font-family="Liberation Sans" font-size="9" fill="#000" text-anchor="start" >Hγ</text>
<rect x="774.00" y="449.90" width="17.30" height="6.60" fill="#ffa500" stroke="none" stroke-width="1" />
<text x="797.5" y="456.6" font-family="Liberation Sans" font-size="9" fill="#000" text-anchor="start" >HeII</text>
<rect x="829.00" y="449.90" width="17.30" height="6.60" fill="#87ceeb" stroke="none" stroke-width="1" />
<text x="852.5" y="456.6" font-family="Liberation Sans" font-size="9" fill="#000" text-anchor="start" >(K)CaII</text>
<rect x="895.00" y="449.90" width="17.30" height="6.60" fill="#87ceeb" stroke="none" stroke-width="1" />
<text x="918.5" y="456.6" font-family="Liberation Sans" font-size="9" fill="#000" text-anchor="start" >(H)CaII</text>
<text x="143.7" y="525.5" font-family="Liberation Sans" font-size="14" fill="#000" text-anchor="middle" >Fiber Positions</text>
<rect x="70.00" y="532.70" width="148.60" height="147.50" fill="url(#phsc)" stroke="none" stroke-width="1" />
<g clip-path="url(#cp1)">
<ellipse cx="143" cy="603" rx="52" ry="38" transform="rotate(-35 143 603)" fill="url(#g1a)"/>
<ellipse cx="139" cy="608" rx="14" ry="11" transform="rotate(-35 139 608)" fill="url(#g1b)"/>
<ellipse cx="148.5" cy="595" rx="11" ry="9" transform="rotate(-35 148.5 595)" fill="url(#g1c)"/>
</g>
<circle cx="135.7" cy="569.5" r="12.3" fill="none" stroke="#6e6e6e" stroke-width="1.25" stroke-dasharray="2.5,1.2"/>
<circle cx="135.7" cy="569.5" r="11.4" fill="none" stroke="#6e6e6e" stroke-width="0.8" opacity="0.6"/>
<circle cx="160.7" cy="568.7" r="12.3" fill="none" stroke="#6e6e6e" stroke-width="1.25"/>
<circle cx="184.9" cy="568.0" r="12.3" fill="none" stroke="#6e6e6e" stroke-width="1.25" stroke-dasharray="2.5,1.2"/>
<circle cx="184.9" cy="568.0" r="11.4" fill="none" stroke="#6e6e6e" stroke-width="0.8" opacity="0.6"/>
<circle cx="100.5" cy="589.8" r="12.3" fill="none" stroke="#6e6e6e" stroke-width="1.25" stroke-dasharray="2.5,1.2"/>
<circle cx="100.5" cy="589.8" r="11.4" fill="none" stroke="#6e6e6e" stroke-width="0.8" opacity="0.6"/>
<circle cx="174.0" cy="589.1" r="12.3" fill="none" stroke="#6e6e6e" stroke-width="1.25"/>
<circle cx="198.2" cy="588.3" r="12.3" fill="none" stroke="#6e6e6e" stroke-width="1.25"/>
<circle cx="89.5" cy="613.3" r="12.3" fill="none" stroke="#6e6e6e" stroke-width="1.25" stroke-dasharray="2.5,1.2"/>
<circle cx="89.5" cy="613.3" r="11.4" fill="none" stroke="#6e6e6e" stroke-width="0.8" opacity="0.6"/>
<circle cx="112.2" cy="611.7" r="12.3" fill="none" stroke="#6e6e6e" stroke-width="1.25"/>
<circle cx="186.5" cy="610.2" r="12.3" fill="none" stroke="#6e6e6e" stroke-width="1.25"/>
<circle cx="102.1" cy="633.6" r="12.3" fill="none" stroke="#6e6e6e" stroke-width="1.25"/>
<circle cx="127.1" cy="632.8" r="12.3" fill="none" stroke="#6e6e6e" stroke-width="1.25"/>
<circle cx="150.5" cy="632.1" r="12.3" fill="none" stroke="#6e6e6e" stroke-width="1.25"/>
<circle cx="174.8" cy="632.1" r="12.3" fill="none" stroke="#6e6e6e" stroke-width="1.25"/>
<circle cx="114.6" cy="654.0" r="12.3" fill="none" stroke="#6e6e6e" stroke-width="1.25"/>
<circle cx="139.6" cy="654.0" r="12.3" fill="none" stroke="#6e6e6e" stroke-width="1.25"/>
<circle cx="163.8" cy="652.4" r="12.3" fill="none" stroke="#6e6e6e" stroke-width="1.25"/>
<circle cx="125.5" cy="590.6" r="12.3" fill="none" stroke="#ff0000" stroke-width="1.8" stroke-dasharray="2.5,1.2"/>
<circle cx="125.5" cy="590.6" r="11.4" fill="none" stroke="#ff0000" stroke-width="0.8" opacity="0.6"/>
<circle cx="149.0" cy="591.4" r="12.3" fill="none" stroke="#00ff00" stroke-width="2.0" stroke-dasharray="2.5,1.2"/>
<circle cx="149.0" cy="591.4" r="11.4" fill="none" stroke="#00ff00" stroke-width="0.8" opacity="0.6"/>
<circle cx="138.0" cy="612.5" r="12.3" fill="none" stroke="#0000ff" stroke-width="1.6"/>
<circle cx="162.2" cy="610.2" r="12.3" fill="none" stroke="#ffa500" stroke-width="1.6"/>
<rect x="94.20" y="557.10" width="99.80" height="98.80" fill="none" stroke="#ff0000" stroke-width="1.3" />
<text x="144.3" y="546.5" font-family="Liberation Sans" font-size="11" fill="#ff0000" text-anchor="middle" >N</text>
<text x="80.3" y="611.2" font-family="Liberation Sans" font-size="11" fill="#ff0000" text-anchor="middle" >E</text>
<path d="M139.3 607H149.3M144.3 602V612" fill="none" stroke="#ff0000" stroke-width="1.2" />
<rect x="70.00" y="532.70" width="148.60" height="147.50" fill="none" stroke="#222" stroke-width="1.0" />
<line x1="78.80" y1="680.20" x2="78.80" y2="683.70" stroke="#000" stroke-width="0.8" />
<text x="75.3" y="695.8" font-family="Liberation Sans" font-size="12.6" fill="#000" text-anchor="middle" >−4</text>
<line x1="66.50" y1="672.30" x2="70.00" y2="672.30" stroke="#000" stroke-width="0.8" />
<text x="64.0" y="676.8" font-family="Liberation Sans" font-size="12.6" fill="#000" text-anchor="end" >−4</text>
<line x1="111.50" y1="680.20" x2="111.50" y2="683.70" stroke="#000" stroke-width="0.8" />
<text x="108.0" y="695.8" font-family="Liberation Sans" font-size="12.6" fill="#000" text-anchor="middle" >−2</text>
<line x1="66.50" y1="639.60" x2="70.00" y2="639.60" stroke="#000" stroke-width="0.8" />
<text x="64.0" y="644.1" font-family="Liberation Sans" font-size="12.6" fill="#000" text-anchor="end" >−2</text>
<line x1="144.20" y1="680.20" x2="144.20" y2="683.70" stroke="#000" stroke-width="0.8" />
<text x="144.2" y="695.8" font-family="Liberation Sans" font-size="12.6" fill="#000" text-anchor="middle" >0</text>
<line x1="66.50" y1="606.90" x2="70.00" y2="606.90" stroke="#000" stroke-width="0.8" />
<text x="64.0" y="611.4" font-family="Liberation Sans" font-size="12.6" fill="#000" text-anchor="end" >0</text>
<line x1="176.90" y1="680.20" x2="176.90" y2="683.70" stroke="#000" stroke-width="0.8" />
<text x="176.9" y="695.8" font-family="Liberation Sans" font-size="12.6" fill="#000" text-anchor="middle" >2</text>
<line x1="66.50" y1="574.20" x2="70.00" y2="574.20" stroke="#000" stroke-width="0.8" />
<text x="64.0" y="578.7" font-family="Liberation Sans" font-size="12.6" fill="#000" text-anchor="end" >2</text>
<line x1="209.60" y1="680.20" x2="209.60" y2="683.70" stroke="#000" stroke-width="0.8" />
<text x="209.6" y="695.8" font-family="Liberation Sans" font-size="12.6" fill="#000" text-anchor="middle" >4</text>
<line x1="66.50" y1="541.50" x2="70.00" y2="541.50" stroke="#000" stroke-width="0.8" />
<text x="64.0" y="546.0" font-family="Liberation Sans" font-size="12.6" fill="#000" text-anchor="end" >4</text>
<text x="143.7" y="707.5" font-family="Liberation Sans" font-size="12.6" fill="#000" text-anchor="middle" >arcsecs</text>
<text x="329.5" y="525.5" font-family="Liberation Sans" font-size="14" fill="#000" text-anchor="middle" >Lineflux Map</text>
<path d="M255.50 532.70h118.78v3.99h-118.78zM392.49 532.70h4.00v3.99h-4.00zM255.50 536.39h115.08v3.99h-115.08zM255.50 540.08h107.67v3.99h-107.67zM255.50 543.76h103.97v3.99h-103.97zM255.50 547.45h96.57v3.99h-96.57zM381.38 547.45h4.00v3.99h-4.00zM255.50 551.14h92.86v3.99h-92.86zM377.68 551.14h4.00v3.99h-4.00zM255.50 554.83h85.46v3.99h-85.46zM255.50 558.51h81.76v3.99h-81.76zM373.98 558.51h4.00v3.99h-4.00zM255.50 562.20h74.35v3.99h-74.35zM377.68 562.20h4.00v3.99h-4.00zM255.50 565.89h70.65v3.99h-70.65zM381.38 565.89h4.00v3.99h-4.00zM255.50 569.58h63.24v3.99h-63.24zM385.09 569.58h4.00v3.99h-4.00zM255.50 573.26h59.54v3.99h-59.54zM255.50 576.95h52.14v3.99h-52.14zM255.50 580.64h48.43v3.99h-48.43zM255.50 584.33h41.03v3.99h-41.03zM385.09 584.33h4.00v3.99h-4.00zM255.50 588.01h37.33v3.99h-37.33zM385.09 588.01h4.00v3.99h-4.00zM255.50 591.70h33.62v3.99h-33.62zM255.50 595.39h26.22v3.99h-26.22zM255.50 599.08h22.52v3.99h-22.52zM381.38 599.08h4.00v3.99h-4.00zM255.50 602.76h15.11v3.99h-15.11zM381.38 602.76h4.00v3.99h-4.00zM255.50 606.45h7.71v3.99h-7.71zM381.38 606.45h7.71v3.99h-7.71zM392.49 606.45h11.41v3.99h-11.41zM381.38 610.14h11.41v3.99h-11.41zM359.17 621.20h7.71v3.99h-7.71zM348.06 624.89h4.00v3.99h-4.00zM362.87 624.89h7.71v3.99h-7.71zM366.58 628.58h4.00v3.99h-4.00zM366.58 632.26h4.00v3.99h-4.00zM274.01 635.95h18.81v3.99h-18.81zM333.25 635.95h4.00v3.99h-4.00zM366.58 635.95h4.00v3.99h-4.00zM266.61 639.64h4.00v3.99h-4.00zM285.12 639.64h15.11v3.99h-15.11zM366.58 639.64h4.00v3.99h-4.00zM255.50 643.33h4.00v3.99h-4.00zM288.82 643.33h11.41v3.99h-11.41zM366.58 643.33h4.00v3.99h-4.00zM285.12 647.01h11.41v3.99h-11.41zM340.66 647.01h4.00v3.99h-4.00zM359.17 647.01h7.71v3.99h-7.71zM285.12 650.70h4.00v3.99h-4.00zM344.36 650.70h11.41v3.99h-11.41zM281.42 654.39h4.00v3.99h-4.00zM274.01 658.08h4.00v3.99h-4.00zM270.31 661.76h4.00v3.99h-4.00zM262.90 665.45h4.00v3.99h-4.00zM255.50 669.14h4.00v3.99h-4.00zM329.55 669.14h18.81v3.99h-18.81zM322.14 672.83h7.71v3.99h-7.71zM318.44 676.51h7.71v3.99h-7.71zM348.06 676.51h4.00v3.99h-4.00z" fill="#414487" stroke="none" stroke-width="1" shape-rendering="crispEdges"/>
<path d="M373.98 532.70h11.41v3.99h-11.41zM381.38 536.39h4.00v3.99h-4.00zM381.38 540.08h4.00v3.99h-4.00zM377.68 543.76h4.00v3.99h-4.00zM340.66 554.83h4.00v3.99h-4.00zM370.28 554.83h4.00v3.99h-4.00zM336.96 558.51h4.00v3.99h-4.00zM329.55 562.20h4.00v3.99h-4.00zM370.28 562.20h4.00v3.99h-4.00zM381.38 573.26h4.00v3.99h-4.00zM381.38 588.01h4.00v3.99h-4.00zM288.82 591.70h4.00v3.99h-4.00zM377.68 599.08h4.00v3.99h-4.00zM281.42 602.76h4.00v3.99h-4.00zM266.61 606.45h11.41v3.99h-11.41zM262.90 610.14h4.00v3.99h-4.00zM255.50 613.83h4.00v3.99h-4.00zM392.49 617.51h11.41v3.99h-11.41zM385.09 621.20h18.81v3.99h-18.81zM340.66 624.89h4.00v3.99h-4.00zM381.38 624.89h7.71v3.99h-7.71zM277.72 628.58h15.11v3.99h-15.11zM333.25 628.58h4.00v3.99h-4.00zM381.38 628.58h7.71v3.99h-7.71zM296.23 632.26h4.00v3.99h-4.00zM329.55 632.26h4.00v3.99h-4.00zM381.38 632.26h4.00v3.99h-4.00zM266.61 635.95h4.00v3.99h-4.00zM303.63 635.95h4.00v3.99h-4.00zM381.38 635.95h7.71v3.99h-7.71zM307.34 639.64h4.00v3.99h-4.00zM329.55 639.64h4.00v3.99h-4.00zM381.38 639.64h11.41v3.99h-11.41zM396.20 639.64h7.71v3.99h-7.71zM385.09 643.33h18.81v3.99h-18.81zM311.04 647.01h4.00v3.99h-4.00zM388.79 647.01h11.41v3.99h-11.41zM307.34 650.70h4.00v3.99h-4.00zM336.96 650.70h4.00v3.99h-4.00zM299.93 654.39h7.71v3.99h-7.71zM336.96 654.39h4.00v3.99h-4.00zM355.47 654.39h4.00v3.99h-4.00zM370.28 654.39h4.00v3.99h-4.00zM288.82 658.08h7.71v3.99h-7.71zM336.96 658.08h4.00v3.99h-4.00zM348.06 658.08h4.00v3.99h-4.00zM373.98 658.08h4.00v3.99h-4.00zM281.42 661.76h7.71v3.99h-7.71zM333.25 661.76h4.00v3.99h-4.00zM348.06 661.76h4.00v3.99h-4.00zM274.01 665.45h4.00v3.99h-4.00zM318.44 665.45h7.71v3.99h-7.71zM348.06 665.45h4.00v3.99h-4.00zM266.61 669.14h7.71v3.99h-7.71zM307.34 669.14h7.71v3.99h-7.71zM259.20 672.83h7.71v3.99h-7.71zM299.93 672.83h7.71v3.99h-7.71zM351.76 672.83h4.00v3.99h-4.00zM373.98 672.83h4.00v3.99h-4.00zM255.50 676.51h7.71v3.99h-7.71zM288.82 676.51h11.41v3.99h-11.41zM355.47 676.51h4.00v3.99h-4.00zM370.28 676.51h4.00v3.99h-4.00z" fill="#306c8e" stroke="none" stroke-width="1" shape-rendering="crispEdges"/>
<path d="M385.09 532.70h4.00v3.99h-4.00zM385.09 536.39h4.00v3.99h-4.00zM377.68 547.45h4.00v3.99h-4.00zM373.98 551.14h4.00v3.99h-4.00zM370.28 558.51h4.00v3.99h-4.00zM373.98 562.20h4.00v3.99h-4.00zM377.68 565.89h4.00v3.99h-4.00zM381.38 569.58h4.00v3.99h-4.00zM381.38 591.70h4.00v3.99h-4.00zM285.12 595.39h4.00v3.99h-4.00zM262.90 606.45h4.00v3.99h-4.00zM373.98 606.45h4.00v3.99h-4.00zM255.50 610.14h7.71v3.99h-7.71zM370.28 610.14h4.00v3.99h-4.00zM366.58 613.83h4.00v3.99h-4.00zM392.49 613.83h11.41v3.99h-11.41zM359.17 617.51h4.00v3.99h-4.00zM377.68 617.51h15.11v3.99h-15.11zM351.76 621.20h4.00v3.99h-4.00zM377.68 621.20h7.71v3.99h-7.71zM373.98 624.89h7.71v3.99h-7.71zM373.98 628.58h7.71v3.99h-7.71zM274.01 632.26h4.00v3.99h-4.00zM292.52 632.26h4.00v3.99h-4.00zM373.98 632.26h7.71v3.99h-7.71zM299.93 635.95h4.00v3.99h-4.00zM329.55 635.95h4.00v3.99h-4.00zM373.98 635.95h7.71v3.99h-7.71zM255.50 639.64h7.71v3.99h-7.71zM373.98 639.64h7.71v3.99h-7.71zM307.34 643.33h4.00v3.99h-4.00zM333.25 643.33h4.00v3.99h-4.00zM377.68 643.33h7.71v3.99h-7.71zM307.34 647.01h4.00v3.99h-4.00zM336.96 647.01h4.00v3.99h-4.00zM377.68 647.01h11.41v3.99h-11.41zM399.90 647.01h4.00v3.99h-4.00zM299.93 650.70h7.71v3.99h-7.71zM359.17 650.70h44.73v3.99h-44.73zM292.52 654.39h7.71v3.99h-7.71zM340.66 654.39h4.00v3.99h-4.00zM351.76 654.39h4.00v3.99h-4.00zM373.98 654.39h29.92v3.99h-29.92zM285.12 658.08h4.00v3.99h-4.00zM340.66 658.08h7.71v3.99h-7.71zM377.68 658.08h4.00v3.99h-4.00zM277.72 661.76h4.00v3.99h-4.00zM336.96 661.76h11.41v3.99h-11.41zM377.68 661.76h4.00v3.99h-4.00zM270.31 665.45h4.00v3.99h-4.00zM325.85 665.45h11.41v3.99h-11.41zM344.36 665.45h4.00v3.99h-4.00zM377.68 665.45h4.00v3.99h-4.00zM262.90 669.14h4.00v3.99h-4.00zM314.74 669.14h7.71v3.99h-7.71zM348.06 669.14h4.00v3.99h-4.00zM377.68 669.14h4.00v3.99h-4.00zM255.50 672.83h4.00v3.99h-4.00zM307.34 672.83h7.71v3.99h-7.71zM377.68 672.83h4.00v3.99h-4.00zM299.93 676.51h7.71v3.99h-7.71zM373.98 676.51h4.00v3.99h-4.00z" fill="#355f8d" stroke="none" stroke-width="1" shape-rendering="crispEdges"/>
<path d="M388.79 532.70h4.00v3.99h-4.00zM388.79 536.39h4.00v3.99h-4.00zM385.09 540.08h4.00v3.99h-4.00zM381.38 543.76h4.00v3.99h-4.00zM373.98 554.83h4.00v3.99h-4.00zM385.09 573.26h4.00v3.99h-4.00zM385.09 576.95h4.00v3.99h-4.00zM385.09 580.64h4.00v3.99h-4.00zM381.38 595.39h4.00v3.99h-4.00zM281.42 599.08h4.00v3.99h-4.00zM270.31 602.76h11.41v3.99h-11.41zM377.68 602.76h4.00v3.99h-4.00zM377.68 606.45h4.00v3.99h-4.00zM373.98 610.14h7.71v3.99h-7.71zM392.49 610.14h11.41v3.99h-11.41zM370.28 613.83h22.52v3.99h-22.52zM362.87 617.51h15.11v3.99h-15.11zM355.47 621.20h4.00v3.99h-4.00zM366.58 621.20h11.41v3.99h-11.41zM344.36 624.89h4.00v3.99h-4.00zM370.28 624.89h4.00v3.99h-4.00zM336.96 628.58h4.00v3.99h-4.00zM370.28 628.58h4.00v3.99h-4.00zM277.72 632.26h15.11v3.99h-15.11zM333.25 632.26h4.00v3.99h-4.00zM370.28 632.26h4.00v3.99h-4.00zM270.31 635.95h4.00v3.99h-4.00zM292.52 635.95h7.71v3.99h-7.71zM370.28 635.95h4.00v3.99h-4.00zM262.90 639.64h4.00v3.99h-4.00zM299.93 639.64h7.71v3.99h-7.71zM333.25 639.64h4.00v3.99h-4.00zM370.28 639.64h4.00v3.99h-4.00zM299.93 643.33h7.71v3.99h-7.71zM336.96 643.33h4.00v3.99h-4.00zM370.28 643.33h7.71v3.99h-7.71zM296.23 647.01h11.41v3.99h-11.41zM366.58 647.01h11.41v3.99h-11.41zM288.82 650.70h11.41v3.99h-11.41zM340.66 650.70h4.00v3.99h-4.00zM355.47 650.70h4.00v3.99h-4.00zM285.12 654.39h7.71v3.99h-7.71zM344.36 654.39h7.71v3.99h-7.71zM277.72 658.08h7.71v3.99h-7.71zM381.38 658.08h22.52v3.99h-22.52zM274.01 661.76h4.00v3.99h-4.00zM381.38 661.76h22.52v3.99h-22.52zM266.61 665.45h4.00v3.99h-4.00zM336.96 665.45h7.71v3.99h-7.71zM381.38 665.45h22.52v3.99h-22.52zM259.20 669.14h4.00v3.99h-4.00zM322.14 669.14h7.71v3.99h-7.71zM381.38 669.14h22.52v3.99h-22.52zM314.74 672.83h7.71v3.99h-7.71zM348.06 672.83h4.00v3.99h-4.00zM381.38 672.83h22.52v3.99h-22.52zM307.34 676.51h11.41v3.99h-11.41zM351.76 676.51h4.00v3.99h-4.00zM377.68 676.51h26.22v3.99h-26.22z" fill="#3b528a" stroke="none" stroke-width="1" shape-rendering="crispEdges"/>
<path d="M396.20 532.70h7.71v3.99h-7.71zM392.49 536.39h4.00v3.99h-4.00zM388.79 540.08h4.00v3.99h-4.00zM385.09 543.76h4.00v3.99h-4.00zM377.68 554.83h4.00v3.99h-4.00zM377.68 558.51h4.00v3.99h-4.00zM399.90 558.51h4.00v3.99h-4.00zM381.38 562.20h4.00v3.99h-4.00zM399.90 562.20h4.00v3.99h-4.00zM385.09 565.89h4.00v3.99h-4.00zM399.90 565.89h4.00v3.99h-4.00zM388.79 573.26h4.00v3.99h-4.00zM385.09 591.70h4.00v3.99h-4.00zM281.42 595.39h4.00v3.99h-4.00zM277.72 599.08h4.00v3.99h-4.00zM399.90 599.08h4.00v3.99h-4.00zM385.09 602.76h4.00v3.99h-4.00zM392.49 602.76h11.41v3.99h-11.41zM388.79 606.45h4.00v3.99h-4.00zM351.76 624.89h11.41v3.99h-11.41zM340.66 628.58h4.00v3.99h-4.00zM359.17 628.58h7.71v3.99h-7.71zM336.96 632.26h4.00v3.99h-4.00zM362.87 632.26h4.00v3.99h-4.00zM336.96 635.95h4.00v3.99h-4.00zM362.87 635.95h4.00v3.99h-4.00zM270.31 639.64h15.11v3.99h-15.11zM336.96 639.64h4.00v3.99h-4.00zM362.87 639.64h4.00v3.99h-4.00zM259.20 643.33h4.00v3.99h-4.00zM281.42 643.33h7.71v3.99h-7.71zM340.66 643.33h4.00v3.99h-4.00zM359.17 643.33h7.71v3.99h-7.71zM281.42 647.01h4.00v3.99h-4.00zM344.36 647.01h15.11v3.99h-15.11zM277.72 650.70h7.71v3.99h-7.71zM274.01 654.39h7.71v3.99h-7.71zM270.31 658.08h4.00v3.99h-4.00zM266.61 661.76h4.00v3.99h-4.00zM255.50 665.45h7.71v3.99h-7.71zM329.55 672.83h7.71v3.99h-7.71zM344.36 672.83h4.00v3.99h-4.00zM325.85 676.51h7.71v3.99h-7.71zM344.36 676.51h4.00v3.99h-4.00z" fill="#44347e" stroke="none" stroke-width="1" shape-rendering="crispEdges"/>
<path d="M370.28 536.39h11.41v3.99h-11.41zM362.87 540.08h4.00v3.99h-4.00zM377.68 540.08h4.00v3.99h-4.00zM351.76 547.45h4.00v3.99h-4.00zM373.98 547.45h4.00v3.99h-4.00zM348.06 551.14h4.00v3.99h-4.00zM370.28 551.14h4.00v3.99h-4.00zM344.36 554.83h4.00v3.99h-4.00zM366.58 558.51h4.00v3.99h-4.00zM325.85 565.89h4.00v3.99h-4.00zM373.98 565.89h4.00v3.99h-4.00zM318.44 569.58h4.00v3.99h-4.00zM377.68 569.58h4.00v3.99h-4.00zM381.38 576.95h4.00v3.99h-4.00zM381.38 580.64h4.00v3.99h-4.00zM296.23 584.33h4.00v3.99h-4.00zM381.38 584.33h4.00v3.99h-4.00zM292.52 588.01h4.00v3.99h-4.00zM285.12 599.08h4.00v3.99h-4.00zM373.98 602.76h4.00v3.99h-4.00zM277.72 606.45h4.00v3.99h-4.00zM266.61 610.14h4.00v3.99h-4.00zM366.58 610.14h4.00v3.99h-4.00zM259.20 613.83h4.00v3.99h-4.00zM362.87 613.83h4.00v3.99h-4.00zM355.47 617.51h4.00v3.99h-4.00zM348.06 621.20h4.00v3.99h-4.00zM388.79 624.89h15.11v3.99h-15.11zM274.01 628.58h4.00v3.99h-4.00zM292.52 628.58h4.00v3.99h-4.00zM388.79 628.58h15.11v3.99h-15.11zM270.31 632.26h4.00v3.99h-4.00zM299.93 632.26h4.00v3.99h-4.00zM385.09 632.26h18.81v3.99h-18.81zM255.50 635.95h11.41v3.99h-11.41zM307.34 635.95h4.00v3.99h-4.00zM388.79 635.95h15.11v3.99h-15.11zM311.04 639.64h4.00v3.99h-4.00zM392.49 639.64h4.00v3.99h-4.00zM311.04 643.33h4.00v3.99h-4.00zM333.25 647.01h4.00v3.99h-4.00zM311.04 650.70h4.00v3.99h-4.00zM307.34 654.39h7.71v3.99h-7.71zM359.17 654.39h11.41v3.99h-11.41zM296.23 658.08h11.41v3.99h-11.41zM351.76 658.08h4.00v3.99h-4.00zM288.82 661.76h7.71v3.99h-7.71zM322.14 661.76h11.41v3.99h-11.41zM373.98 661.76h4.00v3.99h-4.00zM277.72 665.45h7.71v3.99h-7.71zM311.04 665.45h7.71v3.99h-7.71zM373.98 665.45h4.00v3.99h-4.00zM274.01 669.14h4.00v3.99h-4.00zM303.63 669.14h4.00v3.99h-4.00zM373.98 669.14h4.00v3.99h-4.00zM266.61 672.83h7.71v3.99h-7.71zM292.52 672.83h7.71v3.99h-7.71zM370.28 672.83h4.00v3.99h-4.00zM262.90 676.51h26.22v3.99h-26.22zM359.17 676.51h11.41v3.99h-11.41z" fill="#2a788e" stroke="none" stroke-width="1" shape-rendering="crispEdges"/>
<path d="M396.20 536.39h7.71v3.99h-7.71zM392.49 540.08h4.00v3.99h-4.00zM388.79 543.76h4.00v3.99h-4.00zM385.09 547.45h4.00v3.99h-4.00zM381.38 551.14h4.00v3.99h-4.00zM399.90 551.14h4.00v3.99h-4.00zM399.90 554.83h4.00v3.99h-4.00zM396.20 558.51h4.00v3.99h-4.00zM385.09 562.20h4.00v3.99h-4.00zM392.49 562.20h7.71v3.99h-7.71zM388.79 565.89h11.41v3.99h-11.41zM388.79 569.58h15.11v3.99h-15.11zM399.90 573.26h4.00v3.99h-4.00zM388.79 576.95h4.00v3.99h-4.00zM399.90 576.95h4.00v3.99h-4.00zM388.79 580.64h4.00v3.99h-4.00zM388.79 584.33h4.00v3.99h-4.00zM399.90 591.70h4.00v3.99h-4.00zM385.09 595.39h4.00v3.99h-4.00zM399.90 595.39h4.00v3.99h-4.00zM385.09 599.08h15.11v3.99h-15.11zM388.79 602.76h4.00v3.99h-4.00zM344.36 628.58h15.11v3.99h-15.11zM340.66 632.26h4.00v3.99h-4.00zM359.17 632.26h4.00v3.99h-4.00zM340.66 635.95h4.00v3.99h-4.00zM359.17 635.95h4.00v3.99h-4.00zM340.66 639.64h4.00v3.99h-4.00zM359.17 639.64h4.00v3.99h-4.00zM262.90 643.33h18.81v3.99h-18.81zM344.36 643.33h4.00v3.99h-4.00zM355.47 643.33h4.00v3.99h-4.00zM255.50 647.01h4.00v3.99h-4.00zM274.01 647.01h7.71v3.99h-7.71zM274.01 650.70h4.00v3.99h-4.00zM270.31 654.39h4.00v3.99h-4.00zM266.61 658.08h4.00v3.99h-4.00zM259.20 661.76h7.71v3.99h-7.71zM336.96 672.83h7.71v3.99h-7.71zM333.25 676.51h11.41v3.99h-11.41z" fill="#482475" stroke="none" stroke-width="1" shape-rendering="crispEdges"/>
<path d="M366.58 540.08h11.41v3.99h-11.41zM359.17 543.76h4.00v3.99h-4.00zM373.98 543.76h4.00v3.99h-4.00zM355.47 547.45h4.00v3.99h-4.00zM366.58 554.83h4.00v3.99h-4.00zM340.66 558.51h4.00v3.99h-4.00zM333.25 562.20h4.00v3.99h-4.00zM307.34 576.95h4.00v3.99h-4.00zM377.68 595.39h4.00v3.99h-4.00zM370.28 606.45h4.00v3.99h-4.00zM270.31 610.14h7.71v3.99h-7.71zM262.90 613.83h4.00v3.99h-4.00zM255.50 617.51h4.00v3.99h-4.00zM277.72 624.89h11.41v3.99h-11.41zM336.96 624.89h4.00v3.99h-4.00zM329.55 628.58h4.00v3.99h-4.00zM303.63 632.26h4.00v3.99h-4.00zM325.85 632.26h4.00v3.99h-4.00zM325.85 635.95h4.00v3.99h-4.00zM314.74 643.33h4.00v3.99h-4.00zM329.55 643.33h4.00v3.99h-4.00zM314.74 647.01h4.00v3.99h-4.00zM314.74 650.70h4.00v3.99h-4.00zM333.25 650.70h4.00v3.99h-4.00zM314.74 654.39h4.00v3.99h-4.00zM333.25 654.39h4.00v3.99h-4.00zM307.34 658.08h11.41v3.99h-11.41zM333.25 658.08h4.00v3.99h-4.00zM370.28 658.08h4.00v3.99h-4.00zM296.23 661.76h26.22v3.99h-26.22zM285.12 665.45h26.22v3.99h-26.22zM277.72 669.14h26.22v3.99h-26.22zM351.76 669.14h4.00v3.99h-4.00zM274.01 672.83h18.81v3.99h-18.81zM355.47 672.83h4.00v3.99h-4.00z" fill="#26848d" stroke="none" stroke-width="1" shape-rendering="crispEdges"/>
<path d="M396.20 540.08h7.71v3.99h-7.71zM392.49 543.76h11.41v3.99h-11.41zM388.79 547.45h15.11v3.99h-15.11zM385.09 551.14h4.00v3.99h-4.00zM392.49 551.14h7.71v3.99h-7.71zM381.38 554.83h18.81v3.99h-18.81zM381.38 558.51h15.11v3.99h-15.11zM388.79 562.20h4.00v3.99h-4.00zM392.49 573.26h7.71v3.99h-7.71zM392.49 576.95h7.71v3.99h-7.71zM392.49 580.64h11.41v3.99h-11.41zM396.20 584.33h7.71v3.99h-7.71zM388.79 588.01h4.00v3.99h-4.00zM396.20 588.01h7.71v3.99h-7.71zM388.79 591.70h4.00v3.99h-4.00zM396.20 591.70h4.00v3.99h-4.00zM388.79 595.39h11.41v3.99h-11.41zM344.36 632.26h15.11v3.99h-15.11zM344.36 635.95h4.00v3.99h-4.00zM355.47 635.95h4.00v3.99h-4.00zM344.36 639.64h15.11v3.99h-15.11zM348.06 643.33h7.71v3.99h-7.71zM259.20 647.01h15.11v3.99h-15.11zM270.31 650.70h4.00v3.99h-4.00zM266.61 654.39h4.00v3.99h-4.00zM262.90 658.08h4.00v3.99h-4.00zM255.50 661.76h4.00v3.99h-4.00z" fill="#461264" stroke="none" stroke-width="1" shape-rendering="crispEdges"/>
<path d="M362.87 543.76h11.41v3.99h-11.41zM359.17 547.45h4.00v3.99h-4.00zM370.28 547.45h4.00v3.99h-4.00zM351.76 551.14h4.00v3.99h-4.00zM366.58 551.14h4.00v3.99h-4.00zM348.06 554.83h4.00v3.99h-4.00zM362.87 558.51h4.00v3.99h-4.00zM336.96 562.20h4.00v3.99h-4.00zM366.58 562.20h4.00v3.99h-4.00zM329.55 565.89h4.00v3.99h-4.00zM370.28 565.89h4.00v3.99h-4.00zM322.14 569.58h4.00v3.99h-4.00zM314.74 573.26h4.00v3.99h-4.00zM377.68 573.26h4.00v3.99h-4.00zM303.63 580.64h4.00v3.99h-4.00zM377.68 591.70h4.00v3.99h-4.00zM288.82 595.39h4.00v3.99h-4.00zM281.42 606.45h4.00v3.99h-4.00zM277.72 610.14h4.00v3.99h-4.00zM266.61 613.83h4.00v3.99h-4.00zM359.17 613.83h4.00v3.99h-4.00zM259.20 617.51h4.00v3.99h-4.00zM351.76 617.51h4.00v3.99h-4.00zM344.36 621.20h4.00v3.99h-4.00zM274.01 624.89h4.00v3.99h-4.00zM288.82 624.89h4.00v3.99h-4.00zM270.31 628.58h4.00v3.99h-4.00zM296.23 628.58h4.00v3.99h-4.00zM266.61 632.26h4.00v3.99h-4.00zM311.04 635.95h4.00v3.99h-4.00zM314.74 639.64h4.00v3.99h-4.00zM325.85 639.64h4.00v3.99h-4.00zM329.55 647.01h4.00v3.99h-4.00zM318.44 650.70h4.00v3.99h-4.00zM318.44 654.39h4.00v3.99h-4.00zM318.44 658.08h15.11v3.99h-15.11zM355.47 658.08h4.00v3.99h-4.00zM366.58 658.08h4.00v3.99h-4.00zM351.76 661.76h4.00v3.99h-4.00zM370.28 661.76h4.00v3.99h-4.00zM351.76 665.45h4.00v3.99h-4.00zM370.28 665.45h4.00v3.99h-4.00zM370.28 669.14h4.00v3.99h-4.00zM366.58 672.83h4.00v3.99h-4.00z" fill="#21918c" stroke="none" stroke-width="1" shape-rendering="crispEdges"/>
<path d="M362.87 547.45h7.71v3.99h-7.71zM355.47 551.14h11.41v3.99h-11.41zM351.76 554.83h4.00v3.99h-4.00zM362.87 554.83h4.00v3.99h-4.00zM344.36 558.51h4.00v3.99h-4.00zM373.98 569.58h4.00v3.99h-4.00zM311.04 576.95h4.00v3.99h-4.00zM377.68 576.95h4.00v3.99h-4.00zM299.93 584.33h4.00v3.99h-4.00zM296.23 588.01h4.00v3.99h-4.00zM377.68 588.01h4.00v3.99h-4.00zM292.52 591.70h4.00v3.99h-4.00zM373.98 599.08h4.00v3.99h-4.00zM285.12 602.76h4.00v3.99h-4.00zM362.87 610.14h4.00v3.99h-4.00zM270.31 613.83h7.71v3.99h-7.71zM262.90 617.51h4.00v3.99h-4.00zM255.50 621.20h4.00v3.99h-4.00zM274.01 621.20h11.41v3.99h-11.41zM292.52 624.89h4.00v3.99h-4.00zM333.25 624.89h4.00v3.99h-4.00zM299.93 628.58h4.00v3.99h-4.00zM325.85 628.58h4.00v3.99h-4.00zM255.50 632.26h4.00v3.99h-4.00zM262.90 632.26h4.00v3.99h-4.00zM307.34 632.26h4.00v3.99h-4.00zM314.74 635.95h4.00v3.99h-4.00zM322.14 635.95h4.00v3.99h-4.00zM322.14 639.64h4.00v3.99h-4.00zM318.44 643.33h4.00v3.99h-4.00zM325.85 643.33h4.00v3.99h-4.00zM318.44 647.01h4.00v3.99h-4.00zM325.85 647.01h4.00v3.99h-4.00zM329.55 650.70h4.00v3.99h-4.00zM322.14 654.39h11.41v3.99h-11.41zM359.17 658.08h7.71v3.99h-7.71zM359.17 672.83h7.71v3.99h-7.71z" fill="#229c88" stroke="none" stroke-width="1" shape-rendering="crispEdges"/>
<path d="M388.79 551.14h4.00v3.99h-4.00zM392.49 584.33h4.00v3.99h-4.00zM392.49 588.01h4.00v3.99h-4.00zM392.49 591.70h4.00v3.99h-4.00zM348.06 635.95h7.71v3.99h-7.71zM255.50 650.70h15.11v3.99h-15.11zM255.50 654.39h11.41v3.99h-11.41zM255.50 658.08h7.71v3.99h-7.71z" fill="#440154" stroke="none" stroke-width="1" shape-rendering="crispEdges"/>
<path d="M355.47 554.83h7.71v3.99h-7.71zM348.06 558.51h4.00v3.99h-4.00zM359.17 558.51h4.00v3.99h-4.00zM340.66 562.20h4.00v3.99h-4.00zM362.87 562.20h4.00v3.99h-4.00zM366.58 565.89h4.00v3.99h-4.00zM318.44 573.26h4.00v3.99h-4.00zM377.68 580.64h4.00v3.99h-4.00zM377.68 584.33h4.00v3.99h-4.00zM370.28 602.76h4.00v3.99h-4.00zM366.58 606.45h4.00v3.99h-4.00zM281.42 610.14h4.00v3.99h-4.00zM277.72 613.83h4.00v3.99h-4.00zM266.61 617.51h15.11v3.99h-15.11zM270.31 621.20h4.00v3.99h-4.00zM285.12 621.20h4.00v3.99h-4.00zM340.66 621.20h4.00v3.99h-4.00zM255.50 624.89h4.00v3.99h-4.00zM270.31 624.89h4.00v3.99h-4.00zM255.50 628.58h4.00v3.99h-4.00zM259.20 632.26h4.00v3.99h-4.00zM322.14 632.26h4.00v3.99h-4.00zM318.44 635.95h4.00v3.99h-4.00zM318.44 639.64h4.00v3.99h-4.00zM322.14 643.33h4.00v3.99h-4.00zM322.14 647.01h4.00v3.99h-4.00zM322.14 650.70h7.71v3.99h-7.71zM355.47 661.76h4.00v3.99h-4.00zM366.58 661.76h4.00v3.99h-4.00zM355.47 669.14h4.00v3.99h-4.00zM366.58 669.14h4.00v3.99h-4.00z" fill="#22a884" stroke="none" stroke-width="1" shape-rendering="crispEdges"/>
<path d="M351.76 558.51h7.71v3.99h-7.71zM333.25 565.89h4.00v3.99h-4.00zM325.85 569.58h4.00v3.99h-4.00zM370.28 569.58h4.00v3.99h-4.00zM373.98 573.26h4.00v3.99h-4.00zM307.34 580.64h4.00v3.99h-4.00zM373.98 595.39h4.00v3.99h-4.00zM288.82 599.08h4.00v3.99h-4.00zM281.42 613.83h4.00v3.99h-4.00zM355.47 613.83h4.00v3.99h-4.00zM281.42 617.51h4.00v3.99h-4.00zM348.06 617.51h4.00v3.99h-4.00zM259.20 621.20h4.00v3.99h-4.00zM266.61 621.20h4.00v3.99h-4.00zM288.82 621.20h4.00v3.99h-4.00zM296.23 624.89h4.00v3.99h-4.00zM329.55 624.89h4.00v3.99h-4.00zM266.61 628.58h4.00v3.99h-4.00zM303.63 628.58h4.00v3.99h-4.00zM311.04 632.26h4.00v3.99h-4.00zM318.44 632.26h4.00v3.99h-4.00zM355.47 665.45h4.00v3.99h-4.00zM366.58 665.45h4.00v3.99h-4.00z" fill="#33b47a" stroke="none" stroke-width="1" shape-rendering="crispEdges"/>
<path d="M344.36 562.20h4.00v3.99h-4.00zM359.17 562.20h4.00v3.99h-4.00zM362.87 565.89h4.00v3.99h-4.00zM314.74 576.95h4.00v3.99h-4.00zM373.98 576.95h4.00v3.99h-4.00zM303.63 584.33h4.00v3.99h-4.00zM299.93 588.01h4.00v3.99h-4.00zM373.98 591.70h4.00v3.99h-4.00zM292.52 595.39h4.00v3.99h-4.00zM370.28 599.08h4.00v3.99h-4.00zM285.12 606.45h4.00v3.99h-4.00zM359.17 610.14h4.00v3.99h-4.00zM285.12 617.51h4.00v3.99h-4.00zM262.90 621.20h4.00v3.99h-4.00zM292.52 621.20h4.00v3.99h-4.00zM336.96 621.20h4.00v3.99h-4.00zM259.20 624.89h4.00v3.99h-4.00zM266.61 624.89h4.00v3.99h-4.00zM259.20 628.58h7.71v3.99h-7.71zM322.14 628.58h4.00v3.99h-4.00zM314.74 632.26h4.00v3.99h-4.00zM359.17 661.76h7.71v3.99h-7.71zM359.17 669.14h7.71v3.99h-7.71z" fill="#44bf70" stroke="none" stroke-width="1" shape-rendering="crispEdges"/>
<path d="M348.06 562.20h4.00v3.99h-4.00zM355.47 562.20h4.00v3.99h-4.00zM336.96 565.89h4.00v3.99h-4.00zM329.55 569.58h4.00v3.99h-4.00zM366.58 569.58h4.00v3.99h-4.00zM322.14 573.26h4.00v3.99h-4.00zM370.28 573.26h4.00v3.99h-4.00zM373.98 580.64h4.00v3.99h-4.00zM373.98 584.33h4.00v3.99h-4.00zM373.98 588.01h4.00v3.99h-4.00zM296.23 591.70h4.00v3.99h-4.00zM366.58 602.76h4.00v3.99h-4.00zM362.87 606.45h4.00v3.99h-4.00zM285.12 610.14h4.00v3.99h-4.00zM285.12 613.83h4.00v3.99h-4.00zM351.76 613.83h4.00v3.99h-4.00zM344.36 617.51h4.00v3.99h-4.00zM262.90 624.89h4.00v3.99h-4.00zM299.93 624.89h4.00v3.99h-4.00zM325.85 624.89h4.00v3.99h-4.00zM307.34 628.58h4.00v3.99h-4.00zM359.17 665.45h7.71v3.99h-7.71z" fill="#5fc860" stroke="none" stroke-width="1" shape-rendering="crispEdges"/>
<path d="M351.76 562.20h4.00v3.99h-4.00zM359.17 565.89h4.00v3.99h-4.00zM362.87 569.58h4.00v3.99h-4.00zM311.04 580.64h4.00v3.99h-4.00zM370.28 595.39h4.00v3.99h-4.00zM288.82 602.76h4.00v3.99h-4.00zM355.47 610.14h4.00v3.99h-4.00zM288.82 617.51h4.00v3.99h-4.00zM296.23 621.20h4.00v3.99h-4.00zM333.25 621.20h4.00v3.99h-4.00zM318.44 628.58h4.00v3.99h-4.00z" fill="#7ad151" stroke="none" stroke-width="1" shape-rendering="crispEdges"/>
<path d="M340.66 565.89h4.00v3.99h-4.00zM355.47 565.89h4.00v3.99h-4.00zM333.25 569.58h4.00v3.99h-4.00zM325.85 573.26h4.00v3.99h-4.00zM366.58 573.26h4.00v3.99h-4.00zM318.44 576.95h4.00v3.99h-4.00zM370.28 576.95h4.00v3.99h-4.00zM370.28 580.64h4.00v3.99h-4.00zM307.34 584.33h4.00v3.99h-4.00zM303.63 588.01h4.00v3.99h-4.00zM370.28 591.70h4.00v3.99h-4.00zM292.52 599.08h4.00v3.99h-4.00zM366.58 599.08h4.00v3.99h-4.00zM362.87 602.76h4.00v3.99h-4.00zM288.82 606.45h4.00v3.99h-4.00zM359.17 606.45h4.00v3.99h-4.00zM288.82 613.83h4.00v3.99h-4.00zM348.06 613.83h4.00v3.99h-4.00zM292.52 617.51h4.00v3.99h-4.00zM340.66 617.51h4.00v3.99h-4.00zM329.55 621.20h4.00v3.99h-4.00zM303.63 624.89h4.00v3.99h-4.00zM322.14 624.89h4.00v3.99h-4.00zM311.04 628.58h7.71v3.99h-7.71z" fill="#9bd83c" stroke="none" stroke-width="1" shape-rendering="crispEdges"/>
<path d="M344.36 565.89h11.41v3.99h-11.41zM359.17 569.58h4.00v3.99h-4.00zM362.87 573.26h4.00v3.99h-4.00zM366.58 576.95h4.00v3.99h-4.00zM314.74 580.64h4.00v3.99h-4.00zM370.28 584.33h4.00v3.99h-4.00zM370.28 588.01h4.00v3.99h-4.00zM299.93 591.70h4.00v3.99h-4.00zM296.23 595.39h4.00v3.99h-4.00zM366.58 595.39h4.00v3.99h-4.00zM288.82 610.14h4.00v3.99h-4.00zM351.76 610.14h4.00v3.99h-4.00zM344.36 613.83h4.00v3.99h-4.00zM296.23 617.51h4.00v3.99h-4.00zM336.96 617.51h4.00v3.99h-4.00zM299.93 621.20h4.00v3.99h-4.00zM325.85 621.20h4.00v3.99h-4.00z" fill="#bddf26" stroke="none" stroke-width="1" shape-rendering="crispEdges"/>
<path d="M336.96 569.58h4.00v3.99h-4.00zM355.47 569.58h4.00v3.99h-4.00zM329.55 573.26h4.00v3.99h-4.00zM359.17 573.26h4.00v3.99h-4.00zM322.14 576.95h4.00v3.99h-4.00zM362.87 576.95h4.00v3.99h-4.00zM366.58 580.64h4.00v3.99h-4.00zM311.04 584.33h4.00v3.99h-4.00zM366.58 584.33h4.00v3.99h-4.00zM307.34 588.01h4.00v3.99h-4.00zM366.58 588.01h4.00v3.99h-4.00zM366.58 591.70h4.00v3.99h-4.00zM362.87 599.08h4.00v3.99h-4.00zM292.52 602.76h4.00v3.99h-4.00zM359.17 602.76h4.00v3.99h-4.00zM355.47 606.45h4.00v3.99h-4.00zM348.06 610.14h4.00v3.99h-4.00zM292.52 613.83h4.00v3.99h-4.00zM340.66 613.83h4.00v3.99h-4.00zM333.25 617.51h4.00v3.99h-4.00zM307.34 624.89h4.00v3.99h-4.00zM318.44 624.89h4.00v3.99h-4.00z" fill="#dde326" stroke="none" stroke-width="1" shape-rendering="crispEdges"/>
<path d="M340.66 569.58h15.11v3.99h-15.11zM333.25 573.26h26.22v3.99h-26.22zM325.85 576.95h37.33v3.99h-37.33zM318.44 580.64h48.43v3.99h-48.43zM314.74 584.33h52.14v3.99h-52.14zM311.04 588.01h55.84v3.99h-55.84zM303.63 591.70h63.24v3.99h-63.24zM299.93 595.39h66.95v3.99h-66.95zM296.23 599.08h66.95v3.99h-66.95zM296.23 602.76h63.24v3.99h-63.24zM292.52 606.45h63.24v3.99h-63.24zM292.52 610.14h55.84v3.99h-55.84zM296.23 613.83h44.73v3.99h-44.73zM299.93 617.51h33.62v3.99h-33.62zM303.63 621.20h22.52v3.99h-22.52zM311.04 624.89h7.71v3.99h-7.71z" fill="#fde725" stroke="none" stroke-width="1" shape-rendering="crispEdges"/>
<rect x="280.30" y="557.30" width="98.50" height="98.30" fill="none" stroke="#ff0000" stroke-width="1.3" />
<text x="329.3" y="546.5" font-family="Liberation Sans" font-size="11" fill="#ff0000" text-anchor="middle" >N</text>
<text x="265.3" y="611.2" font-family="Liberation Sans" font-size="11" fill="#ff0000" text-anchor="middle" >E</text>
<path d="M292 606.8H321.3M337.1 606.8H365.3M329.3 569.3V596.3M329.3 615.5V643.7" fill="none" stroke="#ff0000" stroke-width="1.3" />
<rect x="255.50" y="532.70" width="148.10" height="147.50" fill="none" stroke="#222" stroke-width="1.0" />
<line x1="263.80" y1="680.20" x2="263.80" y2="683.70" stroke="#000" stroke-width="0.8" />
<text x="260.3" y="695.8" font-family="Liberation Sans" font-size="12.6" fill="#000" text-anchor="middle" >−4</text>
<line x1="252.00" y1="672.30" x2="255.50" y2="672.30" stroke="#000" stroke-width="0.8" />
<text x="249.5" y="676.8" font-family="Liberation Sans" font-size="12.6" fill="#000" text-anchor="end" >−4</text>
<line x1="296.50" y1="680.20" x2="296.50" y2="683.70" stroke="#000" stroke-width="0.8" />
<text x="293.0" y="695.8" font-family="Liberation Sans" font-size="12.6" fill="#000" text-anchor="middle" >−2</text>
<line x1="252.00" y1="639.60" x2="255.50" y2="639.60" stroke="#000" stroke-width="0.8" />
<text x="249.5" y="644.1" font-family="Liberation Sans" font-size="12.6" fill="#000" text-anchor="end" >−2</text>
<line x1="329.20" y1="680.20" x2="329.20" y2="683.70" stroke="#000" stroke-width="0.8" />
<text x="329.2" y="695.8" font-family="Liberation Sans" font-size="12.6" fill="#000" text-anchor="middle" >0</text>
<line x1="252.00" y1="606.90" x2="255.50" y2="606.90" stroke="#000" stroke-width="0.8" />
<text x="249.5" y="611.4" font-family="Liberation Sans" font-size="12.6" fill="#000" text-anchor="end" >0</text>
<line x1="361.90" y1="680.20" x2="361.90" y2="683.70" stroke="#000" stroke-width="0.8" />
<text x="361.9" y="695.8" font-family="Liberation Sans" font-size="12.6" fill="#000" text-anchor="middle" >2</text>
<line x1="252.00" y1="574.20" x2="255.50" y2="574.20" stroke="#000" stroke-width="0.8" />
<text x="249.5" y="578.7" font-family="Liberation Sans" font-size="12.6" fill="#000" text-anchor="end" >2</text>
<line x1="394.60" y1="680.20" x2="394.60" y2="683.70" stroke="#000" stroke-width="0.8" />
<text x="394.6" y="695.8" font-family="Liberation Sans" font-size="12.6" fill="#000" text-anchor="middle" >4</text>
<line x1="252.00" y1="541.50" x2="255.50" y2="541.50" stroke="#000" stroke-width="0.8" />
<text x="249.5" y="546.0" font-family="Liberation Sans" font-size="12.6" fill="#000" text-anchor="end" >4</text>
<text x="329.5" y="707.5" font-family="Liberation Sans" font-size="12.6" fill="#000" text-anchor="middle" >s/b: 5.65 +/- 0.122</text>
<text x="514.5" y="525.5" font-family="Liberation Sans" font-size="14" fill="#000" text-anchor="middle" >HSC(26.2) r</text>
<rect x="440.80" y="532.60" width="147.60" height="147.60" fill="url(#phsc2)" stroke="none" stroke-width="1" />
<g clip-path="url(#cp3)">
<ellipse cx="512" cy="604" rx="54" ry="36" transform="rotate(-38 512 604)" fill="url(#g3a)"/>
<ellipse cx="513" cy="605" rx="17" ry="13" transform="rotate(-37 513 605)" fill="url(#g3b)"/>
</g>
<ellipse cx="514.2" cy="602.8" rx="54.5" ry="33.8" transform="rotate(-38.8 514.2 602.8)" fill="none" stroke="#ffd21f" stroke-width="1.7"/>
<rect x="465.00" y="557.10" width="99.00" height="98.80" fill="none" stroke="#ff0000" stroke-width="1.3" />
<path d="M476.7 606.7H507.7M520.5 606.7H551.8M515 569.5V598.1M515 611.4V643.8" fill="none" stroke="#ff0000" stroke-width="1.3" />
<rect x="507.90" y="598.30" width="12.50" height="12.90" fill="none" stroke="#0000ff" stroke-width="1.5" />
<text x="514.4" y="546.5" font-family="Liberation Sans" font-size="11" fill="#ff0000" text-anchor="middle" >N</text>
<text x="451.2" y="611.2" font-family="Liberation Sans" font-size="11" fill="#ff0000" text-anchor="middle" >E</text>
<rect x="440.80" y="532.60" width="147.60" height="147.60" fill="none" stroke="#222" stroke-width="1.0" />
<line x1="449.10" y1="680.20" x2="449.10" y2="683.70" stroke="#000" stroke-width="0.8" />
<text x="445.6" y="695.8" font-family="Liberation Sans" font-size="12.6" fill="#000" text-anchor="middle" >−4</text>
<line x1="437.30" y1="672.40" x2="440.80" y2="672.40" stroke="#000" stroke-width="0.8" />
<text x="434.8" y="676.9" font-family="Liberation Sans" font-size="12.6" fill="#000" text-anchor="end" >−4</text>
<line x1="481.80" y1="680.20" x2="481.80" y2="683.70" stroke="#000" stroke-width="0.8" />
<text x="478.3" y="695.8" font-family="Liberation Sans" font-size="12.6" fill="#000" text-anchor="middle" >−2</text>
<line x1="437.30" y1="639.70" x2="440.80" y2="639.70" stroke="#000" stroke-width="0.8" />
<text x="434.8" y="644.2" font-family="Liberation Sans" font-size="12.6" fill="#000" text-anchor="end" >−2</text>
<line x1="514.50" y1="680.20" x2="514.50" y2="683.70" stroke="#000" stroke-width="0.8" />
<text x="514.5" y="695.8" font-family="Liberation Sans" font-size="12.6" fill="#000" text-anchor="middle" >0</text>
<line x1="437.30" y1="607.00" x2="440.80" y2="607.00" stroke="#000" stroke-width="0.8" />
<text x="434.8" y="611.5" font-family="Liberation Sans" font-size="12.6" fill="#000" text-anchor="end" >0</text>
<line x1="547.20" y1="680.20" x2="547.20" y2="683.70" stroke="#000" stroke-width="0.8" />
<text x="547.2" y="695.8" font-family="Liberation Sans" font-size="12.6" fill="#000" text-anchor="middle" >2</text>
<line x1="437.30" y1="574.30" x2="440.80" y2="574.30" stroke="#000" stroke-width="0.8" />
<text x="434.8" y="578.8" font-family="Liberation Sans" font-size="12.6" fill="#000" text-anchor="end" >2</text>
<line x1="579.90" y1="680.20" x2="579.90" y2="683.70" stroke="#000" stroke-width="0.8" />
<text x="579.9" y="695.8" font-family="Liberation Sans" font-size="12.6" fill="#000" text-anchor="middle" >4</text>
<line x1="437.30" y1="541.60" x2="440.80" y2="541.60" stroke="#000" stroke-width="0.8" />
<text x="434.8" y="546.1" font-family="Liberation Sans" font-size="12.6" fill="#000" text-anchor="end" >4</text>
<text x="514.5" y="707.0" font-family="Liberation Sans" font-size="12.6" fill="#000" text-anchor="middle" >m:20.6  re:2.6"  s:0.2"</text>
<text x="514.5" y="719.3" font-family="Liberation Sans" font-size="12.6" fill="#000" text-anchor="middle" >EWr: 2, PLAE: 0.016</text>
</svg></body></html>
